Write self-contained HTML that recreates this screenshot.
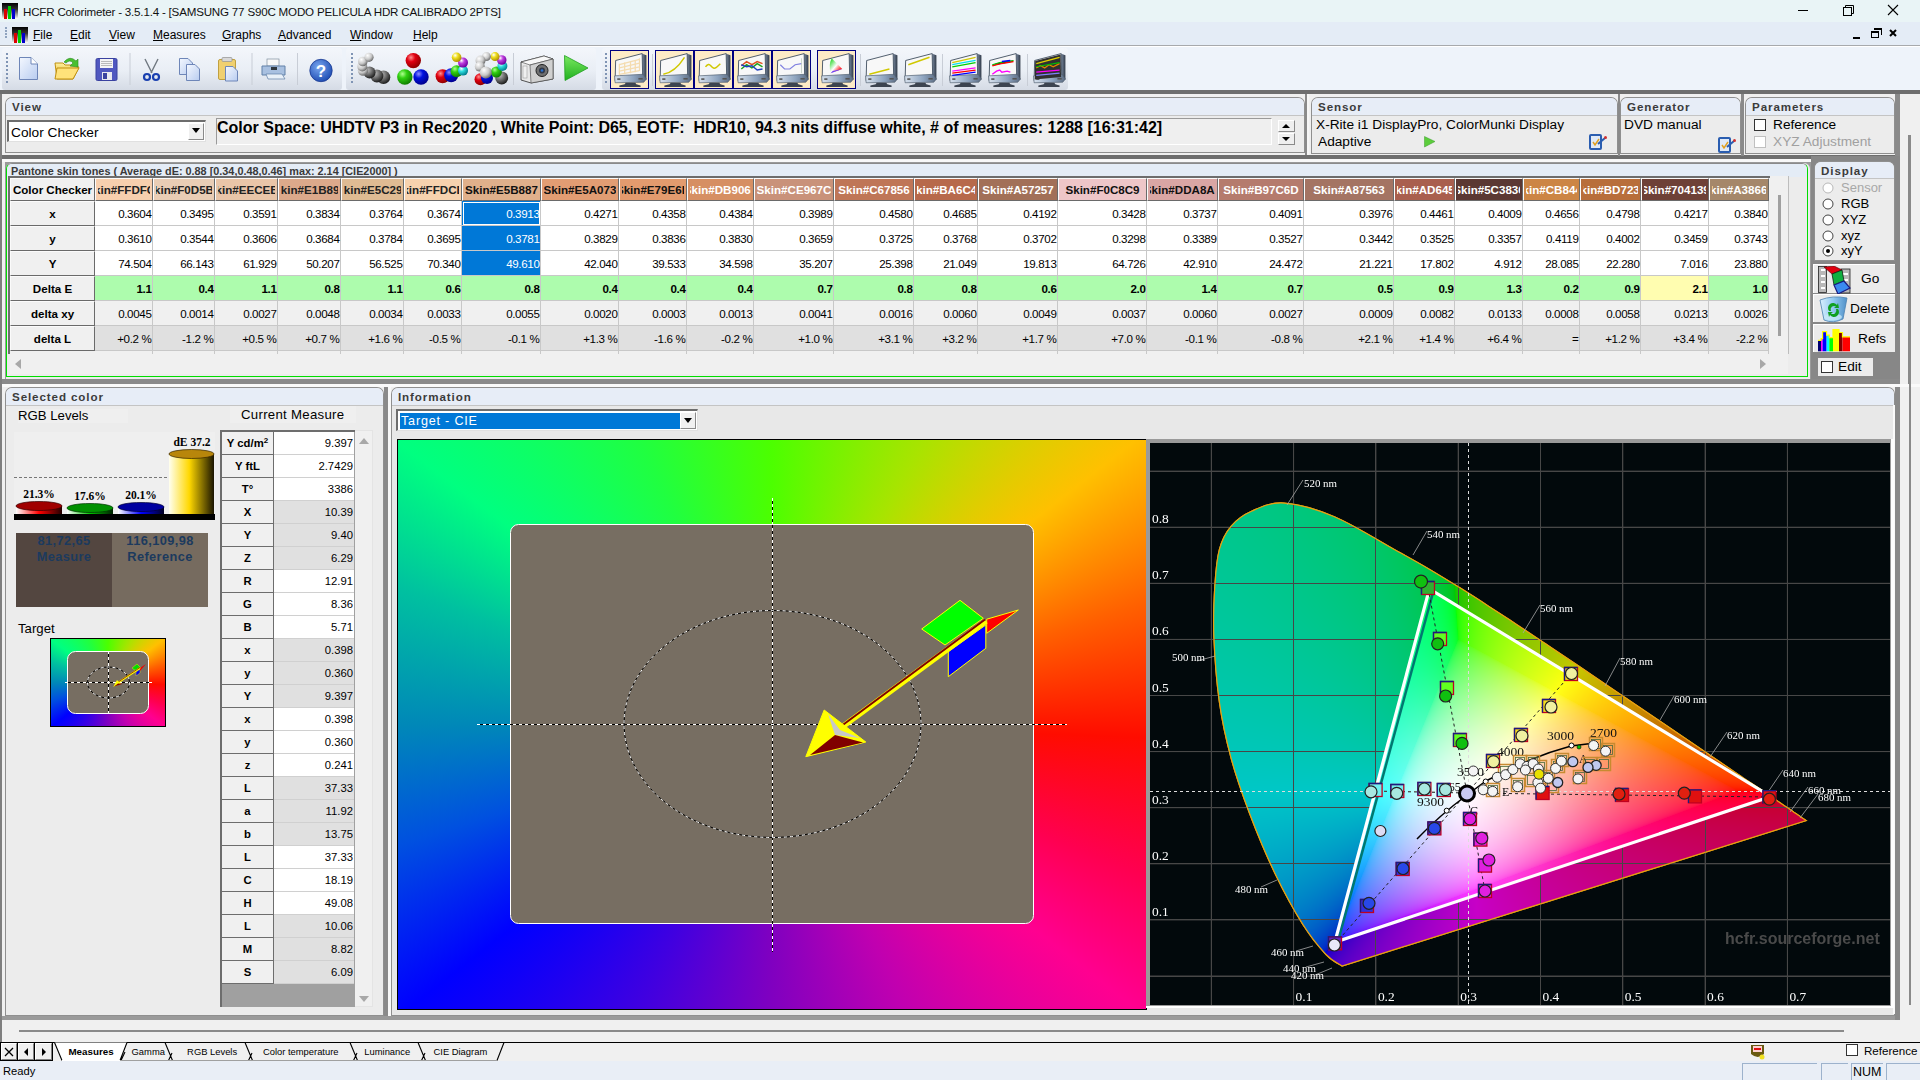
<!DOCTYPE html><html><head><meta charset="utf-8"><style>
html,body{margin:0;padding:0;width:1920px;height:1080px;overflow:hidden;background:#f0f0f0;font-family:"Liberation Sans", sans-serif}
</style></head><body><div style="position:absolute;left:0px;top:0px;width:1920px;height:22px;background:#e9f4f6"></div><svg style="position:absolute;left:2px;top:3px" width="16" height="16"><defs><linearGradient id="hg" x1="0" y1="0" x2="0" y2="1"><stop offset="0" stop-color="#000"/><stop offset="0.4" stop-color="#333"/><stop offset="1" stop-color="#fff"/></linearGradient></defs><rect width="16" height="16" fill="url(#hg)"/><rect x="2" y="6" width="3" height="10" fill="#d00"/><rect x="6" y="3" width="3" height="13" fill="#0c0"/><rect x="10" y="6" width="3" height="10" fill="#00c"/></svg><div style="position:absolute;left:23px;top:4px;white-space:pre;font-size:11.6px;letter-spacing:-0.2px;color:#111;line-height:16px">HCFR Colorimeter - 3.5.1.4 - [SAMSUNG 77 S90C MODO PELICULA HDR CALIBRADO 2PTS]</div><svg style="position:absolute;left:1790px;top:0" width="130" height="22"><line x1="8" y1="10.5" x2="18" y2="10.5" stroke="#000" stroke-width="1"/><rect x="53.5" y="7.5" width="8" height="8" fill="none" stroke="#000"/><path d="M55.5 7.5 V5.5 H63.5 V13.5 H61.5" fill="none" stroke="#000"/><path d="M98 5 L108 15 M108 5 L98 15" stroke="#000" stroke-width="1.1"/></svg><div style="position:absolute;left:0px;top:22px;width:1920px;height:23px;background:#e4ecf6"></div><div style="position:absolute;left:0px;top:45px;width:1920px;height:1px;background:#a7a9ac"></div><div style="position:absolute;left:5px;top:27px;width:2px;height:2px;background:#8fa3bf"></div><div style="position:absolute;left:5px;top:30px;width:2px;height:2px;background:#8fa3bf"></div><div style="position:absolute;left:5px;top:33px;width:2px;height:2px;background:#8fa3bf"></div><div style="position:absolute;left:5px;top:36px;width:2px;height:2px;background:#8fa3bf"></div><svg style="position:absolute;left:12px;top:27px" width="16" height="16"><defs><linearGradient id="hg" x1="0" y1="0" x2="0" y2="1"><stop offset="0" stop-color="#000"/><stop offset="0.4" stop-color="#333"/><stop offset="1" stop-color="#fff"/></linearGradient></defs><rect width="16" height="16" fill="url(#hg)"/><rect x="2" y="6" width="3" height="10" fill="#d00"/><rect x="6" y="3" width="3" height="13" fill="#0c0"/><rect x="10" y="6" width="3" height="10" fill="#00c"/></svg><div style="position:absolute;left:33px;top:27px;white-space:pre;font-size:12px;color:#000;line-height:16px"><u>F</u>ile</div><div style="position:absolute;left:70px;top:27px;white-space:pre;font-size:12px;color:#000;line-height:16px"><u>E</u>dit</div><div style="position:absolute;left:109px;top:27px;white-space:pre;font-size:12px;color:#000;line-height:16px"><u>V</u>iew</div><div style="position:absolute;left:153px;top:27px;white-space:pre;font-size:12px;color:#000;line-height:16px"><u>M</u>easures</div><div style="position:absolute;left:222px;top:27px;white-space:pre;font-size:12px;color:#000;line-height:16px"><u>G</u>raphs</div><div style="position:absolute;left:278px;top:27px;white-space:pre;font-size:12px;color:#000;line-height:16px"><u>A</u>dvanced</div><div style="position:absolute;left:350px;top:27px;white-space:pre;font-size:12px;color:#000;line-height:16px"><u>W</u>indow</div><div style="position:absolute;left:413px;top:27px;white-space:pre;font-size:12px;color:#000;line-height:16px"><u>H</u>elp</div><svg style="position:absolute;left:1840px;top:24" width="80" height="20"><rect x="13" y="13" width="7" height="2" fill="#000"/><rect x="31.5" y="7.5" width="7" height="6" fill="none" stroke="#000"/><rect x="31" y="7" width="8" height="2" fill="#000"/><path d="M34 5.5 H41.5 V11" fill="none" stroke="#000"/><rect x="34" y="4" width="8" height="2" fill="#000"/><path d="M50 6 L56 12 M56 6 L50 12" stroke="#000" stroke-width="2"/></svg><div style="position:absolute;left:0px;top:46px;width:1920px;height:44px;background:#eef3fa"></div><div style="position:absolute;left:0px;top:46px;width:1920px;height:1px;background:#fff"></div><div style="position:absolute;left:2px;top:48px;width:340px;height:42px;background:linear-gradient(#f3f6fb 0%,#e9eef5 55%,#d5dbe5 100%);border-radius:3px"></div><div style="position:absolute;left:6px;top:53px;width:2px;height:2px;background:#7f94b4"></div><div style="position:absolute;left:6px;top:57px;width:2px;height:2px;background:#7f94b4"></div><div style="position:absolute;left:6px;top:61px;width:2px;height:2px;background:#7f94b4"></div><div style="position:absolute;left:6px;top:65px;width:2px;height:2px;background:#7f94b4"></div><div style="position:absolute;left:6px;top:69px;width:2px;height:2px;background:#7f94b4"></div><div style="position:absolute;left:6px;top:73px;width:2px;height:2px;background:#7f94b4"></div><div style="position:absolute;left:6px;top:77px;width:2px;height:2px;background:#7f94b4"></div><div style="position:absolute;left:6px;top:81px;width:2px;height:2px;background:#7f94b4"></div><div style="position:absolute;left:346px;top:48px;width:250px;height:42px;background:linear-gradient(#f3f6fb 0%,#e9eef5 55%,#d5dbe5 100%);border-radius:3px"></div><div style="position:absolute;left:351px;top:53px;width:2px;height:2px;background:#7f94b4"></div><div style="position:absolute;left:351px;top:57px;width:2px;height:2px;background:#7f94b4"></div><div style="position:absolute;left:351px;top:61px;width:2px;height:2px;background:#7f94b4"></div><div style="position:absolute;left:351px;top:65px;width:2px;height:2px;background:#7f94b4"></div><div style="position:absolute;left:351px;top:69px;width:2px;height:2px;background:#7f94b4"></div><div style="position:absolute;left:351px;top:73px;width:2px;height:2px;background:#7f94b4"></div><div style="position:absolute;left:351px;top:77px;width:2px;height:2px;background:#7f94b4"></div><div style="position:absolute;left:351px;top:81px;width:2px;height:2px;background:#7f94b4"></div><div style="position:absolute;left:602px;top:48px;width:466px;height:42px;background:linear-gradient(#f3f6fb 0%,#e9eef5 55%,#d5dbe5 100%);border-radius:3px"></div><div style="position:absolute;left:605px;top:53px;width:2px;height:2px;background:#7f94b4"></div><div style="position:absolute;left:605px;top:57px;width:2px;height:2px;background:#7f94b4"></div><div style="position:absolute;left:605px;top:61px;width:2px;height:2px;background:#7f94b4"></div><div style="position:absolute;left:605px;top:65px;width:2px;height:2px;background:#7f94b4"></div><div style="position:absolute;left:605px;top:69px;width:2px;height:2px;background:#7f94b4"></div><div style="position:absolute;left:605px;top:73px;width:2px;height:2px;background:#7f94b4"></div><div style="position:absolute;left:605px;top:77px;width:2px;height:2px;background:#7f94b4"></div><div style="position:absolute;left:605px;top:81px;width:2px;height:2px;background:#7f94b4"></div><div style="position:absolute;left:0px;top:90px;width:1920px;height:4px;background:#6e6e6e"></div><div style="position:absolute;left:0px;top:94px;width:1920px;height:948px;background:#f0f0f0"></div><svg style="position:absolute;left:0;top:46px" width="345" height="44">
<defs>
<linearGradient id="tdoc" x1="0" y1="0" x2="1" y2="1"><stop offset="0" stop-color="#f4f8ff"/><stop offset="1" stop-color="#b8ccf0"/></linearGradient>
<linearGradient id="tfold" x1="0" y1="0" x2="0" y2="1"><stop offset="0" stop-color="#fff2a0"/><stop offset="1" stop-color="#e0a810"/></linearGradient>
<radialGradient id="thelp" cx="0.4" cy="0.35" r="0.7"><stop offset="0" stop-color="#7aa8f0"/><stop offset="1" stop-color="#1a48b0"/></radialGradient>
</defs>
<path d="M19.5 11.5 H31 L37.5 18 V33.5 H19.5 Z" fill="url(#tdoc)" stroke="#6e86b8"/><path d="M31 11.5 V18 H37.5" fill="#fff" stroke="#6e86b8"/>
<path d="M55 17 H63 L65 19 H77 V21 L79 21 L73 33 H57 Z" fill="url(#tfold)" stroke="#c09010"/><path d="M57 22 H79 L73 33 H55 Z" fill="#ffe27a" stroke="#c09010"/>
<path d="M64 16 Q70 9 76 15 L78 13 L78 21 L70 20 L73 17 Q70 13 66 17 Z" fill="#48c030" stroke="#2a8a20" stroke-width="0.6"/>
<rect x="96" y="12.5" width="21" height="22" rx="1.5" fill="#5058c0" stroke="#3a42a0"/><rect x="100" y="13" width="13" height="9" fill="#f4f4f4"/><path d="M101 15.5 H112 M101 17.5 H112 M101 19.5 H112" stroke="#a0a0a0" stroke-width="0.7"/><rect x="102" y="26" width="10" height="8" fill="#e8e8f0"/><rect x="103" y="27" width="4" height="6" fill="#3a42a0"/>
<line x1="130" y1="7" x2="130" y2="39" stroke="#c8cdd6"/>
<path d="M145 13 L152 27 M158 13 L151 27" stroke="#707880" stroke-width="1.4"/><circle cx="147" cy="31" r="3" fill="none" stroke="#1a40b0" stroke-width="2.2"/><circle cx="156" cy="31" r="3" fill="none" stroke="#1a40b0" stroke-width="2.2"/>
<path d="M179.5 12.5 H188 L192.5 17 V28.5 H179.5 Z" fill="url(#tdoc)" stroke="#6e86b8"/><path d="M186.5 18.5 H195 L199.5 23 V34.5 H186.5 Z" fill="url(#tdoc)" stroke="#6e86b8"/>
<rect x="218.5" y="13.5" width="17" height="20" rx="1.5" fill="#f0d070" stroke="#c0a040"/><rect x="222" y="11.5" width="10" height="4" rx="1" fill="#d8d8d8" stroke="#909090" stroke-width="0.7"/><path d="M225.5 20.5 H233 L237.5 25 V35 H225.5 Z" fill="url(#tdoc)" stroke="#6e86b8"/>
<line x1="252" y1="7" x2="252" y2="39" stroke="#c8cdd6"/>
<rect x="267" y="13" width="12" height="7" fill="#f8f8f8" stroke="#8090a0" stroke-width="0.7"/><path d="M262 20 H285 V29 H262 Z" fill="#a8c0e0" stroke="#6080a8"/><rect x="271" y="21" width="6" height="3" fill="#303840"/><path d="M266 28 H282 L285 33 H268 Z" fill="#e8f0f8" stroke="#6080a8" stroke-width="0.7"/>
<line x1="297.5" y1="7" x2="297.5" y2="39" stroke="#c8cdd6"/>
<circle cx="321" cy="24.5" r="11.2" fill="url(#thelp)" stroke="#1a3a90" stroke-width="0.8"/><text x="321" y="31" text-anchor="middle" font-family="Liberation Sans" font-weight="bold" font-size="17" fill="#fff">?</text>
</svg><svg style="position:absolute;left:346px;top:46px" width="252" height="44">
<defs>
<radialGradient id="bg1" cx="0.35" cy="0.3" r="0.7"><stop offset="0" stop-color="#c0c0c0"/><stop offset="0.5" stop-color="#707070"/><stop offset="1" stop-color="#202020"/></radialGradient><radialGradient id="bg2" cx="0.35" cy="0.3" r="0.7"><stop offset="0" stop-color="#fff"/><stop offset="0.6" stop-color="#c8c8c8"/><stop offset="1" stop-color="#707070"/></radialGradient>
<radialGradient id="br" cx="0.35" cy="0.3" r="0.7"><stop offset="0" stop-color="#ff9090"/><stop offset="0.4" stop-color="#e00010"/><stop offset="1" stop-color="#900000"/></radialGradient>
<radialGradient id="bgr" cx="0.35" cy="0.3" r="0.7"><stop offset="0" stop-color="#b0ff90"/><stop offset="0.4" stop-color="#30d010"/><stop offset="1" stop-color="#108000"/></radialGradient>
<radialGradient id="bb" cx="0.35" cy="0.3" r="0.7"><stop offset="0" stop-color="#9090ff"/><stop offset="0.4" stop-color="#0010e0"/><stop offset="1" stop-color="#000090"/></radialGradient>
<radialGradient id="by" cx="0.35" cy="0.3" r="0.7"><stop offset="0" stop-color="#fff"/><stop offset="0.4" stop-color="#f0e020"/><stop offset="1" stop-color="#b09000"/></radialGradient>
<radialGradient id="bm" cx="0.35" cy="0.3" r="0.7"><stop offset="0" stop-color="#fff"/><stop offset="0.4" stop-color="#c040e0"/><stop offset="1" stop-color="#7000a0"/></radialGradient>
<radialGradient id="bc" cx="0.35" cy="0.3" r="0.7"><stop offset="0" stop-color="#fff"/><stop offset="0.4" stop-color="#30e0e0"/><stop offset="1" stop-color="#008090"/></radialGradient>
<linearGradient id="play" x1="0" y1="0" x2="0" y2="1"><stop offset="0" stop-color="#7ae860"/><stop offset="1" stop-color="#20b020"/></linearGradient>
</defs>
<circle cx="37.5" cy="31.2" r="6.8" fill="url(#bg1)"/><circle cx="30.9" cy="30" r="6.5" fill="url(#bg1)"/><circle cx="23.6" cy="26.6" r="6" fill="url(#bg1)"/><circle cx="17" cy="24.5" r="5.2" fill="url(#bg2)"/><circle cx="16.3" cy="20.5" r="5" fill="url(#bg2)"/><circle cx="16.8" cy="15.5" r="4.8" fill="url(#bg2)"/><circle cx="23" cy="11.3" r="4.6" fill="url(#bg2)"/>
<circle cx="67.3" cy="14.6" r="7.7" fill="url(#br)"/><circle cx="58.8" cy="31" r="7.7" fill="url(#bgr)"/><circle cx="75" cy="31" r="7.7" fill="url(#bb)"/>
<circle cx="96.6" cy="30.3" r="7" fill="url(#br)"/><circle cx="105.2" cy="29.2" r="7" fill="url(#bb)"/><circle cx="110.6" cy="25.2" r="6" fill="url(#bgr)"/><circle cx="117" cy="24.6" r="5" fill="url(#bc)"/><circle cx="117" cy="16.6" r="5" fill="url(#bm)"/><circle cx="110.6" cy="11.3" r="4.8" fill="url(#by)"/>
<circle cx="134.5" cy="33.2" r="6" fill="url(#br)"/><circle cx="141" cy="32" r="6" fill="url(#bb)"/><circle cx="155.7" cy="31.9" r="6.5" fill="url(#bg1)"/><circle cx="150.4" cy="26" r="5.5" fill="url(#bgr)"/><circle cx="156.4" cy="20" r="5" fill="url(#bc)"/><circle cx="155.7" cy="14" r="4.8" fill="url(#bm)"/><circle cx="149" cy="10.6" r="4.5" fill="url(#by)"/><circle cx="140.4" cy="10.6" r="4.5" fill="url(#bg2)"/><circle cx="134.5" cy="14.6" r="5" fill="url(#bg2)"/><circle cx="133.8" cy="20.6" r="5" fill="url(#bg2)"/><circle cx="139.8" cy="26.6" r="6" fill="url(#bg2)"/>
<line x1="167.5" y1="7" x2="167.5" y2="39" stroke="#c8cdd6"/>
<path d="M175 16 L198 10 L207 13 L207 33 L185 37 L175 34 Z" fill="#e8e8e8" stroke="#404040" stroke-width="0.9"/><path d="M175 16 L198 10 L207 13 L184 19 Z" fill="#f8f8f8" stroke="#404040" stroke-width="0.6"/><path d="M184 19 L207 13 L207 33 L185 37 Z" fill="#d0d0d0" stroke="#404040" stroke-width="0.6"/><circle cx="196" cy="24.5" r="6" fill="#707070" stroke="#202020"/><circle cx="196" cy="24.5" r="3" fill="#303848"/><circle cx="196" cy="24.5" r="1.3" fill="#2a70d0"/><rect x="177" y="20" width="4" height="12" fill="#f0f0f0" stroke="#909090" stroke-width="0.5"/>
<path d="M218.5 9.5 L242 22 L219 34.5 Z" fill="url(#play)" stroke="#20a020" stroke-width="0.8"/>
</svg><div style="position:absolute;left:610px;top:50px;width:39px;height:39px;background:#fdebc6;border:1.3px solid #000080;box-sizing:border-box"></div><svg style="position:absolute;left:613px;top:52px" width="35" height="35" viewBox="0 0 33 33"><defs><linearGradient id="mbz" x1="0" y1="0" x2="1" y2="0"><stop offset="0" stop-color="#d8e2ee"/><stop offset="0.6" stop-color="#8ea4bf"/><stop offset="1" stop-color="#5a6a80"/></linearGradient><linearGradient id="mrt" x1="0" y1="0" x2="1" y2="0"><stop offset="0" stop-color="#8090a8"/><stop offset="1" stop-color="#303a48"/></linearGradient></defs><path d="M27 1.5 L31.5 3 L31.5 26 L27 28 Z" fill="url(#mrt)"/><path d="M2.5 8 L27.5 1.5 L28 24 L2 27 Z" fill="#f8f8f8" stroke="#4a5868" stroke-width="0.9"/><path d="M1.5 22.5 L28.5 21 L31.5 25.5 L29 28.5 L2 29 Z" fill="url(#mbz)" stroke="#4a5868" stroke-width="0.6"/><rect x="4" y="24.8" width="3" height="1.5" fill="#555"/><rect x="24" y="24.5" width="4" height="1.5" fill="#555"/><path d="M12 29 L21 29 L22 30.5 L26 31.5 L26 33 L6 33 L6 31.5 L11 30.5 Z" fill="#3c4450"/><g stroke="#f4dcb0" stroke-width="1.2" fill="none"><path d="M6 12 L25 7 M6 15 L25 10.5 M6 18 L25 14 M6 21 L25 17.5"/><path d="M6 11 V22 M11 10 V21 M16.5 8.5 V20 M21 7.5 V19 M25 6 V18"/></g></svg><div style="position:absolute;left:655px;top:50px;width:39px;height:39px;background:#fdebc6;border:1.3px solid #000080;box-sizing:border-box"></div><svg style="position:absolute;left:658px;top:52px" width="35" height="35" viewBox="0 0 33 33"><defs><linearGradient id="mbz" x1="0" y1="0" x2="1" y2="0"><stop offset="0" stop-color="#d8e2ee"/><stop offset="0.6" stop-color="#8ea4bf"/><stop offset="1" stop-color="#5a6a80"/></linearGradient><linearGradient id="mrt" x1="0" y1="0" x2="1" y2="0"><stop offset="0" stop-color="#8090a8"/><stop offset="1" stop-color="#303a48"/></linearGradient></defs><path d="M27 1.5 L31.5 3 L31.5 26 L27 28 Z" fill="url(#mrt)"/><path d="M2.5 8 L27.5 1.5 L28 24 L2 27 Z" fill="#f8f8f8" stroke="#4a5868" stroke-width="0.9"/><path d="M1.5 22.5 L28.5 21 L31.5 25.5 L29 28.5 L2 29 Z" fill="url(#mbz)" stroke="#4a5868" stroke-width="0.6"/><rect x="4" y="24.8" width="3" height="1.5" fill="#555"/><rect x="24" y="24.5" width="4" height="1.5" fill="#555"/><path d="M12 29 L21 29 L22 30.5 L26 31.5 L26 33 L6 33 L6 31.5 L11 30.5 Z" fill="#3c4450"/><path d="M5 21 Q16 19 25 5" stroke="#d0c800" stroke-width="1.4" fill="none"/></svg><div style="position:absolute;left:694px;top:50px;width:39px;height:39px;background:#fdebc6;border:1.3px solid #000080;box-sizing:border-box"></div><svg style="position:absolute;left:697px;top:52px" width="35" height="35" viewBox="0 0 33 33"><defs><linearGradient id="mbz" x1="0" y1="0" x2="1" y2="0"><stop offset="0" stop-color="#d8e2ee"/><stop offset="0.6" stop-color="#8ea4bf"/><stop offset="1" stop-color="#5a6a80"/></linearGradient><linearGradient id="mrt" x1="0" y1="0" x2="1" y2="0"><stop offset="0" stop-color="#8090a8"/><stop offset="1" stop-color="#303a48"/></linearGradient></defs><path d="M27 1.5 L31.5 3 L31.5 26 L27 28 Z" fill="url(#mrt)"/><path d="M2.5 8 L27.5 1.5 L28 24 L2 27 Z" fill="#f8f8f8" stroke="#4a5868" stroke-width="0.9"/><path d="M1.5 22.5 L28.5 21 L31.5 25.5 L29 28.5 L2 29 Z" fill="url(#mbz)" stroke="#4a5868" stroke-width="0.6"/><rect x="4" y="24.8" width="3" height="1.5" fill="#555"/><rect x="24" y="24.5" width="4" height="1.5" fill="#555"/><path d="M12 29 L21 29 L22 30.5 L26 31.5 L26 33 L6 33 L6 31.5 L11 30.5 Z" fill="#3c4450"/><path d="M8 14 Q11 10 13 13 Q16 17 19 14 L22 11" stroke="#d0c800" stroke-width="1.4" fill="none"/></svg><div style="position:absolute;left:733px;top:50px;width:39px;height:39px;background:#fdebc6;border:1.3px solid #000080;box-sizing:border-box"></div><svg style="position:absolute;left:736px;top:52px" width="35" height="35" viewBox="0 0 33 33"><defs><linearGradient id="mbz" x1="0" y1="0" x2="1" y2="0"><stop offset="0" stop-color="#d8e2ee"/><stop offset="0.6" stop-color="#8ea4bf"/><stop offset="1" stop-color="#5a6a80"/></linearGradient><linearGradient id="mrt" x1="0" y1="0" x2="1" y2="0"><stop offset="0" stop-color="#8090a8"/><stop offset="1" stop-color="#303a48"/></linearGradient></defs><path d="M27 1.5 L31.5 3 L31.5 26 L27 28 Z" fill="url(#mrt)"/><path d="M2.5 8 L27.5 1.5 L28 24 L2 27 Z" fill="#f8f8f8" stroke="#4a5868" stroke-width="0.9"/><path d="M1.5 22.5 L28.5 21 L31.5 25.5 L29 28.5 L2 29 Z" fill="url(#mbz)" stroke="#4a5868" stroke-width="0.6"/><rect x="4" y="24.8" width="3" height="1.5" fill="#555"/><rect x="24" y="24.5" width="4" height="1.5" fill="#555"/><path d="M12 29 L21 29 L22 30.5 L26 31.5 L26 33 L6 33 L6 31.5 L11 30.5 Z" fill="#3c4450"/><path d="M5 13 L10 9 L15 12 L20 9 L25 11" stroke="#e05020" stroke-width="1.4" fill="none"/><path d="M5 16 L10 12 L15 15 L20 11 L25 14" stroke="#20a020" stroke-width="1.4" fill="none"/><path d="M5 12 L10 14 L15 13 L20 17 L25 16" stroke="#2040c0" stroke-width="1.4" fill="none"/></svg><div style="position:absolute;left:772px;top:50px;width:39px;height:39px;background:#fdebc6;border:1.3px solid #000080;box-sizing:border-box"></div><svg style="position:absolute;left:775px;top:52px" width="35" height="35" viewBox="0 0 33 33"><defs><linearGradient id="mbz" x1="0" y1="0" x2="1" y2="0"><stop offset="0" stop-color="#d8e2ee"/><stop offset="0.6" stop-color="#8ea4bf"/><stop offset="1" stop-color="#5a6a80"/></linearGradient><linearGradient id="mrt" x1="0" y1="0" x2="1" y2="0"><stop offset="0" stop-color="#8090a8"/><stop offset="1" stop-color="#303a48"/></linearGradient></defs><path d="M27 1.5 L31.5 3 L31.5 26 L27 28 Z" fill="url(#mrt)"/><path d="M2.5 8 L27.5 1.5 L28 24 L2 27 Z" fill="#f8f8f8" stroke="#4a5868" stroke-width="0.9"/><path d="M1.5 22.5 L28.5 21 L31.5 25.5 L29 28.5 L2 29 Z" fill="url(#mbz)" stroke="#4a5868" stroke-width="0.6"/><rect x="4" y="24.8" width="3" height="1.5" fill="#555"/><rect x="24" y="24.5" width="4" height="1.5" fill="#555"/><path d="M12 29 L21 29 L22 30.5 L26 31.5 L26 33 L6 33 L6 31.5 L11 30.5 Z" fill="#3c4450"/><path d="M5 12 L9 16 L14 16 L19 12 L25 11" stroke="#8080e0" stroke-width="1.1" fill="none"/><path d="M25 6 V20" stroke="#b0c0b0" stroke-width="0.6"/></svg><div style="position:absolute;left:817px;top:50px;width:39px;height:39px;background:#fdebc6;border:1.3px solid #000080;box-sizing:border-box"></div><svg style="position:absolute;left:820px;top:52px" width="35" height="35" viewBox="0 0 33 33"><defs><linearGradient id="mbz" x1="0" y1="0" x2="1" y2="0"><stop offset="0" stop-color="#d8e2ee"/><stop offset="0.6" stop-color="#8ea4bf"/><stop offset="1" stop-color="#5a6a80"/></linearGradient><linearGradient id="mrt" x1="0" y1="0" x2="1" y2="0"><stop offset="0" stop-color="#8090a8"/><stop offset="1" stop-color="#303a48"/></linearGradient></defs><path d="M27 1.5 L31.5 3 L31.5 26 L27 28 Z" fill="url(#mrt)"/><path d="M2.5 8 L27.5 1.5 L28 24 L2 27 Z" fill="#f8f8f8" stroke="#4a5868" stroke-width="0.9"/><path d="M1.5 22.5 L28.5 21 L31.5 25.5 L29 28.5 L2 29 Z" fill="url(#mbz)" stroke="#4a5868" stroke-width="0.6"/><rect x="4" y="24.8" width="3" height="1.5" fill="#555"/><rect x="24" y="24.5" width="4" height="1.5" fill="#555"/><path d="M12 29 L21 29 L22 30.5 L26 31.5 L26 33 L6 33 L6 31.5 L11 30.5 Z" fill="#3c4450"/><defs><linearGradient id="mcie" x1="0" y1="0" x2="1" y2="1"><stop offset="0" stop-color="#00d000"/><stop offset="0.5" stop-color="#ffffff"/><stop offset="0.8" stop-color="#ff2020"/><stop offset="1" stop-color="#4020ff"/></linearGradient></defs><path d="M10 20 Q8 12 11 6 L21 16 Z" fill="url(#mcie)"/><path d="M10 20 L21 16 L12 18 Z" fill="#6040ff"/></svg><svg style="position:absolute;left:864px;top:52px" width="35" height="35" viewBox="0 0 33 33"><defs><linearGradient id="mbz" x1="0" y1="0" x2="1" y2="0"><stop offset="0" stop-color="#d8e2ee"/><stop offset="0.6" stop-color="#8ea4bf"/><stop offset="1" stop-color="#5a6a80"/></linearGradient><linearGradient id="mrt" x1="0" y1="0" x2="1" y2="0"><stop offset="0" stop-color="#8090a8"/><stop offset="1" stop-color="#303a48"/></linearGradient></defs><path d="M27 1.5 L31.5 3 L31.5 26 L27 28 Z" fill="url(#mrt)"/><path d="M2.5 8 L27.5 1.5 L28 24 L2 27 Z" fill="#f8f8f8" stroke="#4a5868" stroke-width="0.9"/><path d="M1.5 22.5 L28.5 21 L31.5 25.5 L29 28.5 L2 29 Z" fill="url(#mbz)" stroke="#4a5868" stroke-width="0.6"/><rect x="4" y="24.8" width="3" height="1.5" fill="#555"/><rect x="24" y="24.5" width="4" height="1.5" fill="#555"/><path d="M12 29 L21 29 L22 30.5 L26 31.5 L26 33 L6 33 L6 31.5 L11 30.5 Z" fill="#3c4450"/><path d="M5 21 L24 16" stroke="#d0c800" stroke-width="1.4" fill="none"/></svg><svg style="position:absolute;left:903px;top:52px" width="35" height="35" viewBox="0 0 33 33"><defs><linearGradient id="mbz" x1="0" y1="0" x2="1" y2="0"><stop offset="0" stop-color="#d8e2ee"/><stop offset="0.6" stop-color="#8ea4bf"/><stop offset="1" stop-color="#5a6a80"/></linearGradient><linearGradient id="mrt" x1="0" y1="0" x2="1" y2="0"><stop offset="0" stop-color="#8090a8"/><stop offset="1" stop-color="#303a48"/></linearGradient></defs><path d="M27 1.5 L31.5 3 L31.5 26 L27 28 Z" fill="url(#mrt)"/><path d="M2.5 8 L27.5 1.5 L28 24 L2 27 Z" fill="#f8f8f8" stroke="#4a5868" stroke-width="0.9"/><path d="M1.5 22.5 L28.5 21 L31.5 25.5 L29 28.5 L2 29 Z" fill="url(#mbz)" stroke="#4a5868" stroke-width="0.6"/><rect x="4" y="24.8" width="3" height="1.5" fill="#555"/><rect x="24" y="24.5" width="4" height="1.5" fill="#555"/><path d="M12 29 L21 29 L22 30.5 L26 31.5 L26 33 L6 33 L6 31.5 L11 30.5 Z" fill="#3c4450"/><path d="M5 12 L25 5" stroke="#d0c800" stroke-width="1.4" fill="none"/></svg><svg style="position:absolute;left:948px;top:52px" width="35" height="35" viewBox="0 0 33 33"><defs><linearGradient id="mbz" x1="0" y1="0" x2="1" y2="0"><stop offset="0" stop-color="#d8e2ee"/><stop offset="0.6" stop-color="#8ea4bf"/><stop offset="1" stop-color="#5a6a80"/></linearGradient><linearGradient id="mrt" x1="0" y1="0" x2="1" y2="0"><stop offset="0" stop-color="#8090a8"/><stop offset="1" stop-color="#303a48"/></linearGradient></defs><path d="M27 1.5 L31.5 3 L31.5 26 L27 28 Z" fill="url(#mrt)"/><path d="M2.5 8 L27.5 1.5 L28 24 L2 27 Z" fill="#f8f8f8" stroke="#4a5868" stroke-width="0.9"/><path d="M1.5 22.5 L28.5 21 L31.5 25.5 L29 28.5 L2 29 Z" fill="url(#mbz)" stroke="#4a5868" stroke-width="0.6"/><rect x="4" y="24.8" width="3" height="1.5" fill="#555"/><rect x="24" y="24.5" width="4" height="1.5" fill="#555"/><path d="M12 29 L21 29 L22 30.5 L26 31.5 L26 33 L6 33 L6 31.5 L11 30.5 Z" fill="#3c4450"/><path d="M4 10 L26 5" stroke="#d0c800" stroke-width="1.2"/><path d="M4 12 L26 8" stroke="#00e0f0" stroke-width="1.2"/><path d="M4 14 L26 10" stroke="#00d000" stroke-width="1.2"/><path d="M4 18 L26 15" stroke="#ff00ff" stroke-width="1.2"/><path d="M4 20 L26 17" stroke="#ff0000" stroke-width="1.2"/><path d="M4 22 L26 19" stroke="#0000ff" stroke-width="1.2"/></svg><svg style="position:absolute;left:987px;top:52px" width="35" height="35" viewBox="0 0 33 33"><defs><linearGradient id="mbz" x1="0" y1="0" x2="1" y2="0"><stop offset="0" stop-color="#d8e2ee"/><stop offset="0.6" stop-color="#8ea4bf"/><stop offset="1" stop-color="#5a6a80"/></linearGradient><linearGradient id="mrt" x1="0" y1="0" x2="1" y2="0"><stop offset="0" stop-color="#8090a8"/><stop offset="1" stop-color="#303a48"/></linearGradient></defs><path d="M27 1.5 L31.5 3 L31.5 26 L27 28 Z" fill="url(#mrt)"/><path d="M2.5 8 L27.5 1.5 L28 24 L2 27 Z" fill="#f8f8f8" stroke="#4a5868" stroke-width="0.9"/><path d="M1.5 22.5 L28.5 21 L31.5 25.5 L29 28.5 L2 29 Z" fill="url(#mbz)" stroke="#4a5868" stroke-width="0.6"/><rect x="4" y="24.8" width="3" height="1.5" fill="#555"/><rect x="24" y="24.5" width="4" height="1.5" fill="#555"/><path d="M12 29 L21 29 L22 30.5 L26 31.5 L26 33 L6 33 L6 31.5 L11 30.5 Z" fill="#3c4450"/><path d="M5 13 L12 11 L18 10 L25 9" stroke="#ff0000" stroke-width="1.5"/><path d="M5 12 L12 10 L18 9 L25 8" stroke="#00c000" stroke-width="1"/><path d="M14 9 L22 8" stroke="#0000ff" stroke-width="1.3"/><path d="M5 21 L9 18 L12 17 L14 19 L19 18 L22 19" stroke="#ff00ff" stroke-width="1.3" fill="none"/></svg><svg style="position:absolute;left:1032px;top:52px" width="35" height="35" viewBox="0 0 33 33"><defs><linearGradient id="mbz" x1="0" y1="0" x2="1" y2="0"><stop offset="0" stop-color="#d8e2ee"/><stop offset="0.6" stop-color="#8ea4bf"/><stop offset="1" stop-color="#5a6a80"/></linearGradient><linearGradient id="mrt" x1="0" y1="0" x2="1" y2="0"><stop offset="0" stop-color="#8090a8"/><stop offset="1" stop-color="#303a48"/></linearGradient></defs><path d="M27 1.5 L31.5 3 L31.5 26 L27 28 Z" fill="url(#mrt)"/><path d="M2.5 8 L27.5 1.5 L28 24 L2 27 Z" fill="#f8f8f8" stroke="#4a5868" stroke-width="0.9"/><path d="M1.5 22.5 L28.5 21 L31.5 25.5 L29 28.5 L2 29 Z" fill="url(#mbz)" stroke="#4a5868" stroke-width="0.6"/><rect x="4" y="24.8" width="3" height="1.5" fill="#555"/><rect x="24" y="24.5" width="4" height="1.5" fill="#555"/><path d="M12 29 L21 29 L22 30.5 L26 31.5 L26 33 L6 33 L6 31.5 L11 30.5 Z" fill="#3c4450"/><path d="M3 8.5 L27 2.3 L27.4 23.5 L2.6 26 Z" fill="#303030"/><path d="M4 11 L26 5" stroke="#e0d000" stroke-width="1.3"/><path d="M4 15 L8 13 L12 15 L16 12 L20 14 L26 11" stroke="#e08000" stroke-width="1.2" fill="none"/><path d="M4 14 L26 10" stroke="#00c000" stroke-width="1" /><path d="M4 19 L26 17" stroke="#ff00ff" stroke-width="1.2"/><path d="M4 22 L26 20" stroke="#8080ff" stroke-width="1.2"/></svg><div style="position:absolute;left:652px;top:54px;width:1px;height:32px;background:#c8cdd6"></div><div style="position:absolute;left:860px;top:54px;width:1px;height:32px;background:#c8cdd6"></div><div style="position:absolute;left:942px;top:54px;width:1px;height:32px;background:#c8cdd6"></div><div style="position:absolute;left:1027px;top:54px;width:1px;height:32px;background:#c8cdd6"></div><div style="position:absolute;left:5px;top:97px;width:1300px;height:56px;background:#8f8f8f;border-top-left-radius:7px;border-top-right-radius:7px"></div><div style="position:absolute;left:6px;top:98px;width:1298px;height:54px;background:#ececec;border-top-left-radius:6px;border-top-right-radius:6px"></div><div style="position:absolute;left:6px;top:98px;width:1298px;height:17px;background:#e7edf7;border-top-left-radius:6px;border-top-right-radius:6px"></div><div style="position:absolute;left:6px;top:115px;width:1298px;height:1px;background:#c4c4c4"></div><div style="position:absolute;left:12px;top:99px;white-space:pre;font-size:11.6px;font-weight:bold;color:#3b3b3b;line-height:16px;letter-spacing:0.9px">View</div><div style="position:absolute;left:7px;top:120px;width:199px;height:22px;background:#fff;border-top:2px solid #6d6d6d;border-left:2px solid #6d6d6d;border-bottom:1px solid #e0e0e0;border-right:1px solid #e0e0e0;box-sizing:border-box"></div><div style="position:absolute;left:11px;top:124px;white-space:pre;font-size:13.7px;color:#000;line-height:17px">Color Checker</div><div style="position:absolute;left:188px;top:123px;width:16px;height:17px;background:#f0f0f0;border-right:1px solid #8a8a8a;border-bottom:1px solid #8a8a8a;border-left:1px solid #fff;border-top:1px solid #fff;box-sizing:border-box"></div><svg style="position:absolute;left:192px;top:128px" width="9" height="6"><path d="M0 0 H8 L4 5 Z" fill="#000"/></svg><div style="position:absolute;left:216px;top:118px;width:1056px;height:27px;background:#efefef;border-top:1px solid #9a9a9a;border-left:1px solid #9a9a9a;border-bottom:1px solid #fff;border-right:1px solid #fff;box-sizing:border-box"></div><div style="position:absolute;left:217px;top:119px;white-space:pre;font-size:16px;font-weight:bold;color:#000;line-height:18px">Color Space: UHDTV P3 in Rec2020 , White Point: D65, EOTF:  HDR10, 94.3 nits diffuse white, # of measures: 1288 [16:31:42]</div><div style="position:absolute;left:1278px;top:120px;width:17px;height:12px;background:#efefef;border-right:1px solid #8a8a8a;border-bottom:1px solid #8a8a8a;border-left:1px solid #fff;border-top:1px solid #fff;box-sizing:border-box"></div><svg style="position:absolute;left:1281px;top:123px" width="10" height="6"><path d="M1 5 L5 1 L9 5 Z" fill="#000"/></svg><div style="position:absolute;left:1278px;top:133px;width:17px;height:12px;background:#efefef;border-right:1px solid #8a8a8a;border-bottom:1px solid #8a8a8a;border-left:1px solid #fff;border-top:1px solid #fff;box-sizing:border-box"></div><svg style="position:absolute;left:1281px;top:136px" width="10" height="6"><path d="M1 1 L5 5 L9 1 Z" fill="#000"/></svg><div style="position:absolute;left:1305px;top:94px;width:2px;height:62px;background:#8a8a8a"></div><div style="position:absolute;left:1307px;top:94px;width:2px;height:62px;background:#f6f6f6"></div><div style="position:absolute;left:0px;top:155px;width:1900px;height:4px;background:#6e6e6e"></div><div style="position:absolute;left:0px;top:159px;width:1900px;height:3px;background:#f8f8f8"></div><div style="position:absolute;left:1311px;top:97px;width:307px;height:57px;background:#8f8f8f;border-top-left-radius:7px;border-top-right-radius:7px"></div><div style="position:absolute;left:1312px;top:98px;width:305px;height:55px;background:#ececec;border-top-left-radius:6px;border-top-right-radius:6px"></div><div style="position:absolute;left:1312px;top:98px;width:305px;height:17px;background:#e7edf7;border-top-left-radius:6px;border-top-right-radius:6px"></div><div style="position:absolute;left:1312px;top:115px;width:305px;height:1px;background:#c4c4c4"></div><div style="position:absolute;left:1318px;top:99px;white-space:pre;font-size:11.6px;font-weight:bold;color:#3b3b3b;line-height:16px;letter-spacing:0.9px">Sensor</div><div style="position:absolute;left:1316px;top:117px;white-space:pre;font-size:13.7px;color:#000;line-height:16px">X-Rite i1 DisplayPro, ColorMunki Display</div><div style="position:absolute;left:1318px;top:134px;white-space:pre;font-size:13.7px;color:#000;line-height:16px">Adaptive</div><svg style="position:absolute;left:1424px;top:136px" width="12" height="12"><path d="M0.5 0.5 L11 5.5 L0.5 11 Z" fill="#5ccd3c" stroke="#3a9a2a" stroke-width="0.5"/></svg><svg style="position:absolute;left:1588px;top:132px" width="20" height="20"><rect x="1" y="2" width="13" height="16" rx="2" fill="#2a5db0"/><rect x="3" y="4" width="9" height="12" fill="#dfe9f7"/><path d="M5 10 L7 13 L11 7" stroke="#e0a020" stroke-width="1.5" fill="none"/><path d="M10 12 L17 6" stroke="#2a5db0" stroke-width="2"/><circle cx="17.5" cy="5.5" r="1.5" fill="#d03030"/></svg><div style="position:absolute;left:1618px;top:94px;width:2px;height:62px;background:#8a8a8a"></div><div style="position:absolute;left:1620px;top:97px;width:121px;height:57px;background:#8f8f8f;border-top-left-radius:7px;border-top-right-radius:7px"></div><div style="position:absolute;left:1621px;top:98px;width:119px;height:55px;background:#ececec;border-top-left-radius:6px;border-top-right-radius:6px"></div><div style="position:absolute;left:1621px;top:98px;width:119px;height:17px;background:#e7edf7;border-top-left-radius:6px;border-top-right-radius:6px"></div><div style="position:absolute;left:1621px;top:115px;width:119px;height:1px;background:#c4c4c4"></div><div style="position:absolute;left:1627px;top:99px;white-space:pre;font-size:11.6px;font-weight:bold;color:#3b3b3b;line-height:16px;letter-spacing:0.9px">Generator</div><div style="position:absolute;left:1624px;top:117px;white-space:pre;font-size:13.7px;color:#000;line-height:16px">DVD manual</div><svg style="position:absolute;left:1717px;top:135px" width="20" height="20"><rect x="1" y="2" width="13" height="16" rx="2" fill="#2a5db0"/><rect x="3" y="4" width="9" height="12" fill="#dfe9f7"/><path d="M5 10 L7 13 L11 7" stroke="#e0a020" stroke-width="1.5" fill="none"/><path d="M10 12 L17 6" stroke="#2a5db0" stroke-width="2"/><circle cx="17.5" cy="5.5" r="1.5" fill="#d03030"/></svg><div style="position:absolute;left:1741px;top:94px;width:3px;height:62px;background:#8a8a8a"></div><div style="position:absolute;left:1745px;top:97px;width:150px;height:57px;background:#8f8f8f;border-top-left-radius:7px;border-top-right-radius:7px"></div><div style="position:absolute;left:1746px;top:98px;width:148px;height:55px;background:#ececec;border-top-left-radius:6px;border-top-right-radius:6px"></div><div style="position:absolute;left:1746px;top:98px;width:148px;height:17px;background:#e7edf7;border-top-left-radius:6px;border-top-right-radius:6px"></div><div style="position:absolute;left:1746px;top:115px;width:148px;height:1px;background:#c4c4c4"></div><div style="position:absolute;left:1752px;top:99px;white-space:pre;font-size:11.6px;font-weight:bold;color:#3b3b3b;line-height:16px;letter-spacing:0.9px">Parameters</div><div style="position:absolute;left:1754px;top:119px;width:12px;height:12px;background:#fff;border:1px solid #333;box-sizing:border-box"></div><div style="position:absolute;left:1773px;top:117px;white-space:pre;font-size:13.7px;color:#000;line-height:16px">Reference</div><div style="position:absolute;left:1754px;top:136px;width:12px;height:12px;background:#fff;border:1px solid #c0c0c0;box-sizing:border-box"></div><div style="position:absolute;left:1773px;top:134px;white-space:pre;font-size:13.7px;color:#a0a0a0;line-height:16px">XYZ Adjustment</div><div style="position:absolute;left:1895px;top:94px;width:5px;height:290px;background:#8a8a8a"></div><div style="position:absolute;left:5px;top:162px;width:1806px;height:218px;background:#9a9a9a"></div><div style="position:absolute;left:6px;top:163px;width:1804px;height:216px;background:#ececec;border-top-left-radius:6px;border-top-right-radius:6px"></div><div style="position:absolute;left:6px;top:163px;width:1802px;height:214px;border:1px solid #00dd00;border-top-color:#8a8a8a;border-top-left-radius:6px;border-top-right-radius:6px;box-sizing:border-box"></div><div style="position:absolute;left:7px;top:164px;width:1800px;height:13px;background:#e4ecf6;border-top-left-radius:5px;border-top-right-radius:5px"></div><div style="position:absolute;left:11px;top:164px;white-space:pre;font-size:10.85px;font-weight:bold;color:#3a3a3a;line-height:14px">Pantone skin tones ( Average dE: 0.88 [0.34,0.48,0.46] max: 2.14 [CIE2000] )</div><div style="position:absolute;left:8px;top:176px;width:1781px;height:178px;background:#f0f0f0"></div><div style="position:absolute;left:8px;top:176px;width:1781px;height:2px;background:#6d6d6d"></div><div style="position:absolute;left:8px;top:176px;width:2px;height:178px;background:#6d6d6d"></div><div style="position:absolute;left:10px;top:178px;width:85px;height:23px;background:#f0f0f0;border-left:1px solid #fbfbfb;border-top:1px solid #fbfbfb;border-right:1px solid #6a6a6a;border-bottom:1px solid #6a6a6a;box-sizing:border-box"></div><div style="position:absolute;left:10px;top:178px;width:85px;height:23px;line-height:23px;text-align:center;font-size:11.6px;font-weight:bold;color:#000">Color Checker</div><div style="position:absolute;left:10px;top:201px;width:85px;height:25px;background:#f0f0f0;border-left:1px solid #fbfbfb;border-top:1px solid #fbfbfb;border-right:1px solid #6a6a6a;border-bottom:1px solid #6a6a6a;box-sizing:border-box"></div><div style="position:absolute;left:10px;top:201px;width:85px;height:25px;line-height:25px;text-align:center;font-size:11.6px;font-weight:bold;color:#000">x</div><div style="position:absolute;left:10px;top:226px;width:85px;height:25px;background:#f0f0f0;border-left:1px solid #fbfbfb;border-top:1px solid #fbfbfb;border-right:1px solid #6a6a6a;border-bottom:1px solid #6a6a6a;box-sizing:border-box"></div><div style="position:absolute;left:10px;top:226px;width:85px;height:25px;line-height:25px;text-align:center;font-size:11.6px;font-weight:bold;color:#000">y</div><div style="position:absolute;left:10px;top:251px;width:85px;height:25px;background:#f0f0f0;border-left:1px solid #fbfbfb;border-top:1px solid #fbfbfb;border-right:1px solid #6a6a6a;border-bottom:1px solid #6a6a6a;box-sizing:border-box"></div><div style="position:absolute;left:10px;top:251px;width:85px;height:25px;line-height:25px;text-align:center;font-size:11.6px;font-weight:bold;color:#000">Y</div><div style="position:absolute;left:10px;top:276px;width:85px;height:25px;background:#f0f0f0;border-left:1px solid #fbfbfb;border-top:1px solid #fbfbfb;border-right:1px solid #6a6a6a;border-bottom:1px solid #6a6a6a;box-sizing:border-box"></div><div style="position:absolute;left:10px;top:276px;width:85px;height:25px;line-height:25px;text-align:center;font-size:11.6px;font-weight:bold;color:#000">Delta E</div><div style="position:absolute;left:10px;top:301px;width:85px;height:25px;background:#f0f0f0;border-left:1px solid #fbfbfb;border-top:1px solid #fbfbfb;border-right:1px solid #6a6a6a;border-bottom:1px solid #6a6a6a;box-sizing:border-box"></div><div style="position:absolute;left:10px;top:301px;width:85px;height:25px;line-height:25px;text-align:center;font-size:11.6px;font-weight:bold;color:#000">delta xy</div><div style="position:absolute;left:10px;top:326px;width:85px;height:25px;background:#f0f0f0;border-left:1px solid #fbfbfb;border-top:1px solid #fbfbfb;border-right:1px solid #6a6a6a;border-bottom:1px solid #6a6a6a;box-sizing:border-box"></div><div style="position:absolute;left:10px;top:326px;width:85px;height:25px;line-height:25px;text-align:center;font-size:11.6px;font-weight:bold;color:#000">delta L</div><div style="position:absolute;left:10px;top:351px;width:85px;height:3px;background:#f0f0f0"></div><div style="position:absolute;left:95px;top:178px;width:58px;height:23px;background:#f7cfae;border-left:1px solid #fbfbfb;border-top:1px solid #fbfbfb;border-right:1px solid #6a6a6a;border-bottom:1px solid #6a6a6a;box-sizing:border-box"></div><div style="position:absolute;left:98px;top:179px;width:52px;height:21px;line-height:21px;overflow:hidden;white-space:nowrap;font-size:11.6px;font-weight:bold;color:#222"><span style="position:absolute;left:50%;top:0;transform:translateX(-50%);white-space:nowrap">Skin#FFDFC4</span></div><div style="position:absolute;left:95px;top:201px;width:58px;height:25px;background:#ffffff"></div><div style="position:absolute;left:95px;top:225px;width:58px;height:1px;background:#c8c8c8"></div><div style="position:absolute;left:152px;top:201px;width:1px;height:25px;background:#c8c8c8"></div><div style="position:absolute;left:95px;top:201px;width:56.5px;height:25px;line-height:25px;text-align:right;font-size:11.6px;letter-spacing:-0.35px;color:#000">0.3604</div><div style="position:absolute;left:95px;top:226px;width:58px;height:25px;background:#ffffff"></div><div style="position:absolute;left:95px;top:250px;width:58px;height:1px;background:#c8c8c8"></div><div style="position:absolute;left:152px;top:226px;width:1px;height:25px;background:#c8c8c8"></div><div style="position:absolute;left:95px;top:226px;width:56.5px;height:25px;line-height:25px;text-align:right;font-size:11.6px;letter-spacing:-0.35px;color:#000">0.3610</div><div style="position:absolute;left:95px;top:251px;width:58px;height:25px;background:#ffffff"></div><div style="position:absolute;left:95px;top:275px;width:58px;height:1px;background:#c8c8c8"></div><div style="position:absolute;left:152px;top:251px;width:1px;height:25px;background:#c8c8c8"></div><div style="position:absolute;left:95px;top:251px;width:56.5px;height:25px;line-height:25px;text-align:right;font-size:11.6px;letter-spacing:-0.35px;color:#000">74.504</div><div style="position:absolute;left:95px;top:276px;width:58px;height:25px;background:#adfcad"></div><div style="position:absolute;left:95px;top:300px;width:58px;height:1px;background:#c8c8c8"></div><div style="position:absolute;left:152px;top:276px;width:1px;height:25px;background:#c8c8c8"></div><div style="position:absolute;left:95px;top:276px;width:56.5px;height:25px;line-height:25px;text-align:right;font-size:11.6px;letter-spacing:-0.35px;font-weight:bold;color:#000">1.1</div><div style="position:absolute;left:95px;top:301px;width:58px;height:25px;background:#f0f0f0"></div><div style="position:absolute;left:95px;top:325px;width:58px;height:1px;background:#c8c8c8"></div><div style="position:absolute;left:152px;top:301px;width:1px;height:25px;background:#c8c8c8"></div><div style="position:absolute;left:95px;top:301px;width:56.5px;height:25px;line-height:25px;text-align:right;font-size:11.6px;letter-spacing:-0.35px;color:#000">0.0045</div><div style="position:absolute;left:95px;top:326px;width:58px;height:25px;background:#e0e0e0"></div><div style="position:absolute;left:95px;top:350px;width:58px;height:1px;background:#c8c8c8"></div><div style="position:absolute;left:152px;top:326px;width:1px;height:25px;background:#c8c8c8"></div><div style="position:absolute;left:95px;top:326px;width:56.5px;height:25px;line-height:25px;text-align:right;font-size:11.6px;letter-spacing:-0.35px;color:#000">+0.2 %</div><div style="position:absolute;left:95px;top:351px;width:58px;height:3px;background:#f0f0f0"></div><div style="position:absolute;left:152px;top:351px;width:1px;height:3px;background:#c8c8c8"></div><div style="position:absolute;left:153px;top:178px;width:62px;height:23px;background:#e9cdb5;border-left:1px solid #fbfbfb;border-top:1px solid #fbfbfb;border-right:1px solid #6a6a6a;border-bottom:1px solid #6a6a6a;box-sizing:border-box"></div><div style="position:absolute;left:156px;top:179px;width:56px;height:21px;line-height:21px;overflow:hidden;white-space:nowrap;font-size:11.6px;font-weight:bold;color:#222"><span style="position:absolute;left:50%;top:0;transform:translateX(-50%);white-space:nowrap">Skin#F0D5BE</span></div><div style="position:absolute;left:153px;top:201px;width:62px;height:25px;background:#ffffff"></div><div style="position:absolute;left:153px;top:225px;width:62px;height:1px;background:#c8c8c8"></div><div style="position:absolute;left:214px;top:201px;width:1px;height:25px;background:#c8c8c8"></div><div style="position:absolute;left:153px;top:201px;width:60.5px;height:25px;line-height:25px;text-align:right;font-size:11.6px;letter-spacing:-0.35px;color:#000">0.3495</div><div style="position:absolute;left:153px;top:226px;width:62px;height:25px;background:#ffffff"></div><div style="position:absolute;left:153px;top:250px;width:62px;height:1px;background:#c8c8c8"></div><div style="position:absolute;left:214px;top:226px;width:1px;height:25px;background:#c8c8c8"></div><div style="position:absolute;left:153px;top:226px;width:60.5px;height:25px;line-height:25px;text-align:right;font-size:11.6px;letter-spacing:-0.35px;color:#000">0.3544</div><div style="position:absolute;left:153px;top:251px;width:62px;height:25px;background:#ffffff"></div><div style="position:absolute;left:153px;top:275px;width:62px;height:1px;background:#c8c8c8"></div><div style="position:absolute;left:214px;top:251px;width:1px;height:25px;background:#c8c8c8"></div><div style="position:absolute;left:153px;top:251px;width:60.5px;height:25px;line-height:25px;text-align:right;font-size:11.6px;letter-spacing:-0.35px;color:#000">66.143</div><div style="position:absolute;left:153px;top:276px;width:62px;height:25px;background:#adfcad"></div><div style="position:absolute;left:153px;top:300px;width:62px;height:1px;background:#c8c8c8"></div><div style="position:absolute;left:214px;top:276px;width:1px;height:25px;background:#c8c8c8"></div><div style="position:absolute;left:153px;top:276px;width:60.5px;height:25px;line-height:25px;text-align:right;font-size:11.6px;letter-spacing:-0.35px;font-weight:bold;color:#000">0.4</div><div style="position:absolute;left:153px;top:301px;width:62px;height:25px;background:#f0f0f0"></div><div style="position:absolute;left:153px;top:325px;width:62px;height:1px;background:#c8c8c8"></div><div style="position:absolute;left:214px;top:301px;width:1px;height:25px;background:#c8c8c8"></div><div style="position:absolute;left:153px;top:301px;width:60.5px;height:25px;line-height:25px;text-align:right;font-size:11.6px;letter-spacing:-0.35px;color:#000">0.0014</div><div style="position:absolute;left:153px;top:326px;width:62px;height:25px;background:#e0e0e0"></div><div style="position:absolute;left:153px;top:350px;width:62px;height:1px;background:#c8c8c8"></div><div style="position:absolute;left:214px;top:326px;width:1px;height:25px;background:#c8c8c8"></div><div style="position:absolute;left:153px;top:326px;width:60.5px;height:25px;line-height:25px;text-align:right;font-size:11.6px;letter-spacing:-0.35px;color:#000">-1.2 %</div><div style="position:absolute;left:153px;top:351px;width:62px;height:3px;background:#f0f0f0"></div><div style="position:absolute;left:214px;top:351px;width:1px;height:3px;background:#c8c8c8"></div><div style="position:absolute;left:215px;top:178px;width:63px;height:23px;background:#e9c5a8;border-left:1px solid #fbfbfb;border-top:1px solid #fbfbfb;border-right:1px solid #6a6a6a;border-bottom:1px solid #6a6a6a;box-sizing:border-box"></div><div style="position:absolute;left:218px;top:179px;width:57px;height:21px;line-height:21px;overflow:hidden;white-space:nowrap;font-size:11.6px;font-weight:bold;color:#222"><span style="position:absolute;left:50%;top:0;transform:translateX(-50%);white-space:nowrap">Skin#EECEB3</span></div><div style="position:absolute;left:215px;top:201px;width:63px;height:25px;background:#ffffff"></div><div style="position:absolute;left:215px;top:225px;width:63px;height:1px;background:#c8c8c8"></div><div style="position:absolute;left:277px;top:201px;width:1px;height:25px;background:#c8c8c8"></div><div style="position:absolute;left:215px;top:201px;width:61.5px;height:25px;line-height:25px;text-align:right;font-size:11.6px;letter-spacing:-0.35px;color:#000">0.3591</div><div style="position:absolute;left:215px;top:226px;width:63px;height:25px;background:#ffffff"></div><div style="position:absolute;left:215px;top:250px;width:63px;height:1px;background:#c8c8c8"></div><div style="position:absolute;left:277px;top:226px;width:1px;height:25px;background:#c8c8c8"></div><div style="position:absolute;left:215px;top:226px;width:61.5px;height:25px;line-height:25px;text-align:right;font-size:11.6px;letter-spacing:-0.35px;color:#000">0.3606</div><div style="position:absolute;left:215px;top:251px;width:63px;height:25px;background:#ffffff"></div><div style="position:absolute;left:215px;top:275px;width:63px;height:1px;background:#c8c8c8"></div><div style="position:absolute;left:277px;top:251px;width:1px;height:25px;background:#c8c8c8"></div><div style="position:absolute;left:215px;top:251px;width:61.5px;height:25px;line-height:25px;text-align:right;font-size:11.6px;letter-spacing:-0.35px;color:#000">61.929</div><div style="position:absolute;left:215px;top:276px;width:63px;height:25px;background:#adfcad"></div><div style="position:absolute;left:215px;top:300px;width:63px;height:1px;background:#c8c8c8"></div><div style="position:absolute;left:277px;top:276px;width:1px;height:25px;background:#c8c8c8"></div><div style="position:absolute;left:215px;top:276px;width:61.5px;height:25px;line-height:25px;text-align:right;font-size:11.6px;letter-spacing:-0.35px;font-weight:bold;color:#000">1.1</div><div style="position:absolute;left:215px;top:301px;width:63px;height:25px;background:#f0f0f0"></div><div style="position:absolute;left:215px;top:325px;width:63px;height:1px;background:#c8c8c8"></div><div style="position:absolute;left:277px;top:301px;width:1px;height:25px;background:#c8c8c8"></div><div style="position:absolute;left:215px;top:301px;width:61.5px;height:25px;line-height:25px;text-align:right;font-size:11.6px;letter-spacing:-0.35px;color:#000">0.0027</div><div style="position:absolute;left:215px;top:326px;width:63px;height:25px;background:#e0e0e0"></div><div style="position:absolute;left:215px;top:350px;width:63px;height:1px;background:#c8c8c8"></div><div style="position:absolute;left:277px;top:326px;width:1px;height:25px;background:#c8c8c8"></div><div style="position:absolute;left:215px;top:326px;width:61.5px;height:25px;line-height:25px;text-align:right;font-size:11.6px;letter-spacing:-0.35px;color:#000">+0.5 %</div><div style="position:absolute;left:215px;top:351px;width:63px;height:3px;background:#f0f0f0"></div><div style="position:absolute;left:277px;top:351px;width:1px;height:3px;background:#c8c8c8"></div><div style="position:absolute;left:278px;top:178px;width:63px;height:23px;background:#dca98b;border-left:1px solid #fbfbfb;border-top:1px solid #fbfbfb;border-right:1px solid #6a6a6a;border-bottom:1px solid #6a6a6a;box-sizing:border-box"></div><div style="position:absolute;left:281px;top:179px;width:57px;height:21px;line-height:21px;overflow:hidden;white-space:nowrap;font-size:11.6px;font-weight:bold;color:#222"><span style="position:absolute;left:50%;top:0;transform:translateX(-50%);white-space:nowrap">Skin#E1B899</span></div><div style="position:absolute;left:278px;top:201px;width:63px;height:25px;background:#ffffff"></div><div style="position:absolute;left:278px;top:225px;width:63px;height:1px;background:#c8c8c8"></div><div style="position:absolute;left:340px;top:201px;width:1px;height:25px;background:#c8c8c8"></div><div style="position:absolute;left:278px;top:201px;width:61.5px;height:25px;line-height:25px;text-align:right;font-size:11.6px;letter-spacing:-0.35px;color:#000">0.3834</div><div style="position:absolute;left:278px;top:226px;width:63px;height:25px;background:#ffffff"></div><div style="position:absolute;left:278px;top:250px;width:63px;height:1px;background:#c8c8c8"></div><div style="position:absolute;left:340px;top:226px;width:1px;height:25px;background:#c8c8c8"></div><div style="position:absolute;left:278px;top:226px;width:61.5px;height:25px;line-height:25px;text-align:right;font-size:11.6px;letter-spacing:-0.35px;color:#000">0.3684</div><div style="position:absolute;left:278px;top:251px;width:63px;height:25px;background:#ffffff"></div><div style="position:absolute;left:278px;top:275px;width:63px;height:1px;background:#c8c8c8"></div><div style="position:absolute;left:340px;top:251px;width:1px;height:25px;background:#c8c8c8"></div><div style="position:absolute;left:278px;top:251px;width:61.5px;height:25px;line-height:25px;text-align:right;font-size:11.6px;letter-spacing:-0.35px;color:#000">50.207</div><div style="position:absolute;left:278px;top:276px;width:63px;height:25px;background:#adfcad"></div><div style="position:absolute;left:278px;top:300px;width:63px;height:1px;background:#c8c8c8"></div><div style="position:absolute;left:340px;top:276px;width:1px;height:25px;background:#c8c8c8"></div><div style="position:absolute;left:278px;top:276px;width:61.5px;height:25px;line-height:25px;text-align:right;font-size:11.6px;letter-spacing:-0.35px;font-weight:bold;color:#000">0.8</div><div style="position:absolute;left:278px;top:301px;width:63px;height:25px;background:#f0f0f0"></div><div style="position:absolute;left:278px;top:325px;width:63px;height:1px;background:#c8c8c8"></div><div style="position:absolute;left:340px;top:301px;width:1px;height:25px;background:#c8c8c8"></div><div style="position:absolute;left:278px;top:301px;width:61.5px;height:25px;line-height:25px;text-align:right;font-size:11.6px;letter-spacing:-0.35px;color:#000">0.0048</div><div style="position:absolute;left:278px;top:326px;width:63px;height:25px;background:#e0e0e0"></div><div style="position:absolute;left:278px;top:350px;width:63px;height:1px;background:#c8c8c8"></div><div style="position:absolute;left:340px;top:326px;width:1px;height:25px;background:#c8c8c8"></div><div style="position:absolute;left:278px;top:326px;width:61.5px;height:25px;line-height:25px;text-align:right;font-size:11.6px;letter-spacing:-0.35px;color:#000">+0.7 %</div><div style="position:absolute;left:278px;top:351px;width:63px;height:3px;background:#f0f0f0"></div><div style="position:absolute;left:340px;top:351px;width:1px;height:3px;background:#c8c8c8"></div><div style="position:absolute;left:341px;top:178px;width:63px;height:23px;background:#dfbb93;border-left:1px solid #fbfbfb;border-top:1px solid #fbfbfb;border-right:1px solid #6a6a6a;border-bottom:1px solid #6a6a6a;box-sizing:border-box"></div><div style="position:absolute;left:344px;top:179px;width:57px;height:21px;line-height:21px;overflow:hidden;white-space:nowrap;font-size:11.6px;font-weight:bold;color:#222"><span style="position:absolute;left:50%;top:0;transform:translateX(-50%);white-space:nowrap">Skin#E5C298</span></div><div style="position:absolute;left:341px;top:201px;width:63px;height:25px;background:#ffffff"></div><div style="position:absolute;left:341px;top:225px;width:63px;height:1px;background:#c8c8c8"></div><div style="position:absolute;left:403px;top:201px;width:1px;height:25px;background:#c8c8c8"></div><div style="position:absolute;left:341px;top:201px;width:61.5px;height:25px;line-height:25px;text-align:right;font-size:11.6px;letter-spacing:-0.35px;color:#000">0.3764</div><div style="position:absolute;left:341px;top:226px;width:63px;height:25px;background:#ffffff"></div><div style="position:absolute;left:341px;top:250px;width:63px;height:1px;background:#c8c8c8"></div><div style="position:absolute;left:403px;top:226px;width:1px;height:25px;background:#c8c8c8"></div><div style="position:absolute;left:341px;top:226px;width:61.5px;height:25px;line-height:25px;text-align:right;font-size:11.6px;letter-spacing:-0.35px;color:#000">0.3784</div><div style="position:absolute;left:341px;top:251px;width:63px;height:25px;background:#ffffff"></div><div style="position:absolute;left:341px;top:275px;width:63px;height:1px;background:#c8c8c8"></div><div style="position:absolute;left:403px;top:251px;width:1px;height:25px;background:#c8c8c8"></div><div style="position:absolute;left:341px;top:251px;width:61.5px;height:25px;line-height:25px;text-align:right;font-size:11.6px;letter-spacing:-0.35px;color:#000">56.525</div><div style="position:absolute;left:341px;top:276px;width:63px;height:25px;background:#adfcad"></div><div style="position:absolute;left:341px;top:300px;width:63px;height:1px;background:#c8c8c8"></div><div style="position:absolute;left:403px;top:276px;width:1px;height:25px;background:#c8c8c8"></div><div style="position:absolute;left:341px;top:276px;width:61.5px;height:25px;line-height:25px;text-align:right;font-size:11.6px;letter-spacing:-0.35px;font-weight:bold;color:#000">1.1</div><div style="position:absolute;left:341px;top:301px;width:63px;height:25px;background:#f0f0f0"></div><div style="position:absolute;left:341px;top:325px;width:63px;height:1px;background:#c8c8c8"></div><div style="position:absolute;left:403px;top:301px;width:1px;height:25px;background:#c8c8c8"></div><div style="position:absolute;left:341px;top:301px;width:61.5px;height:25px;line-height:25px;text-align:right;font-size:11.6px;letter-spacing:-0.35px;color:#000">0.0034</div><div style="position:absolute;left:341px;top:326px;width:63px;height:25px;background:#e0e0e0"></div><div style="position:absolute;left:341px;top:350px;width:63px;height:1px;background:#c8c8c8"></div><div style="position:absolute;left:403px;top:326px;width:1px;height:25px;background:#c8c8c8"></div><div style="position:absolute;left:341px;top:326px;width:61.5px;height:25px;line-height:25px;text-align:right;font-size:11.6px;letter-spacing:-0.35px;color:#000">+1.6 %</div><div style="position:absolute;left:341px;top:351px;width:63px;height:3px;background:#f0f0f0"></div><div style="position:absolute;left:403px;top:351px;width:1px;height:3px;background:#c8c8c8"></div><div style="position:absolute;left:404px;top:178px;width:58px;height:23px;background:#f7d2ae;border-left:1px solid #fbfbfb;border-top:1px solid #fbfbfb;border-right:1px solid #6a6a6a;border-bottom:1px solid #6a6a6a;box-sizing:border-box"></div><div style="position:absolute;left:407px;top:179px;width:52px;height:21px;line-height:21px;overflow:hidden;white-space:nowrap;font-size:11.6px;font-weight:bold;color:#222"><span style="position:absolute;left:50%;top:0;transform:translateX(-50%);white-space:nowrap">Skin#FFDCB2</span></div><div style="position:absolute;left:404px;top:201px;width:58px;height:25px;background:#ffffff"></div><div style="position:absolute;left:404px;top:225px;width:58px;height:1px;background:#c8c8c8"></div><div style="position:absolute;left:461px;top:201px;width:1px;height:25px;background:#c8c8c8"></div><div style="position:absolute;left:404px;top:201px;width:56.5px;height:25px;line-height:25px;text-align:right;font-size:11.6px;letter-spacing:-0.35px;color:#000">0.3674</div><div style="position:absolute;left:404px;top:226px;width:58px;height:25px;background:#ffffff"></div><div style="position:absolute;left:404px;top:250px;width:58px;height:1px;background:#c8c8c8"></div><div style="position:absolute;left:461px;top:226px;width:1px;height:25px;background:#c8c8c8"></div><div style="position:absolute;left:404px;top:226px;width:56.5px;height:25px;line-height:25px;text-align:right;font-size:11.6px;letter-spacing:-0.35px;color:#000">0.3695</div><div style="position:absolute;left:404px;top:251px;width:58px;height:25px;background:#ffffff"></div><div style="position:absolute;left:404px;top:275px;width:58px;height:1px;background:#c8c8c8"></div><div style="position:absolute;left:461px;top:251px;width:1px;height:25px;background:#c8c8c8"></div><div style="position:absolute;left:404px;top:251px;width:56.5px;height:25px;line-height:25px;text-align:right;font-size:11.6px;letter-spacing:-0.35px;color:#000">70.340</div><div style="position:absolute;left:404px;top:276px;width:58px;height:25px;background:#adfcad"></div><div style="position:absolute;left:404px;top:300px;width:58px;height:1px;background:#c8c8c8"></div><div style="position:absolute;left:461px;top:276px;width:1px;height:25px;background:#c8c8c8"></div><div style="position:absolute;left:404px;top:276px;width:56.5px;height:25px;line-height:25px;text-align:right;font-size:11.6px;letter-spacing:-0.35px;font-weight:bold;color:#000">0.6</div><div style="position:absolute;left:404px;top:301px;width:58px;height:25px;background:#f0f0f0"></div><div style="position:absolute;left:404px;top:325px;width:58px;height:1px;background:#c8c8c8"></div><div style="position:absolute;left:461px;top:301px;width:1px;height:25px;background:#c8c8c8"></div><div style="position:absolute;left:404px;top:301px;width:56.5px;height:25px;line-height:25px;text-align:right;font-size:11.6px;letter-spacing:-0.35px;color:#000">0.0033</div><div style="position:absolute;left:404px;top:326px;width:58px;height:25px;background:#e0e0e0"></div><div style="position:absolute;left:404px;top:350px;width:58px;height:1px;background:#c8c8c8"></div><div style="position:absolute;left:461px;top:326px;width:1px;height:25px;background:#c8c8c8"></div><div style="position:absolute;left:404px;top:326px;width:56.5px;height:25px;line-height:25px;text-align:right;font-size:11.6px;letter-spacing:-0.35px;color:#000">-0.5 %</div><div style="position:absolute;left:404px;top:351px;width:58px;height:3px;background:#f0f0f0"></div><div style="position:absolute;left:461px;top:351px;width:1px;height:3px;background:#c8c8c8"></div><div style="position:absolute;left:462px;top:178px;width:79px;height:23px;background:#e0b08b;border-left:1px solid #fbfbfb;border-top:1px solid #fbfbfb;border-right:1px solid #6a6a6a;border-bottom:1px solid #6a6a6a;box-sizing:border-box"></div><div style="position:absolute;left:465px;top:179px;width:73px;height:21px;line-height:21px;overflow:hidden;white-space:nowrap;font-size:11.6px;font-weight:bold;color:#111"><span style="position:absolute;left:50%;top:0;transform:translateX(-50%);white-space:nowrap">Skin#E5B887</span></div><div style="position:absolute;left:462px;top:201px;width:79px;height:25px;background:#0078d7"></div><div style="position:absolute;left:462px;top:225px;width:79px;height:1px;background:#c8c8c8"></div><div style="position:absolute;left:540px;top:201px;width:1px;height:25px;background:#c8c8c8"></div><div style="position:absolute;left:462px;top:201px;width:77.5px;height:25px;line-height:25px;text-align:right;font-size:11.6px;letter-spacing:-0.35px;color:#fff">0.3913</div><div style="position:absolute;left:462px;top:226px;width:79px;height:25px;background:#0078d7"></div><div style="position:absolute;left:462px;top:250px;width:79px;height:1px;background:#c8c8c8"></div><div style="position:absolute;left:540px;top:226px;width:1px;height:25px;background:#c8c8c8"></div><div style="position:absolute;left:462px;top:226px;width:77.5px;height:25px;line-height:25px;text-align:right;font-size:11.6px;letter-spacing:-0.35px;color:#fff">0.3781</div><div style="position:absolute;left:462px;top:251px;width:79px;height:25px;background:#0078d7"></div><div style="position:absolute;left:462px;top:275px;width:79px;height:1px;background:#c8c8c8"></div><div style="position:absolute;left:540px;top:251px;width:1px;height:25px;background:#c8c8c8"></div><div style="position:absolute;left:462px;top:251px;width:77.5px;height:25px;line-height:25px;text-align:right;font-size:11.6px;letter-spacing:-0.35px;color:#fff">49.610</div><div style="position:absolute;left:462px;top:276px;width:79px;height:25px;background:#adfcad"></div><div style="position:absolute;left:462px;top:300px;width:79px;height:1px;background:#c8c8c8"></div><div style="position:absolute;left:540px;top:276px;width:1px;height:25px;background:#c8c8c8"></div><div style="position:absolute;left:462px;top:276px;width:77.5px;height:25px;line-height:25px;text-align:right;font-size:11.6px;letter-spacing:-0.35px;font-weight:bold;color:#000">0.8</div><div style="position:absolute;left:462px;top:301px;width:79px;height:25px;background:#f0f0f0"></div><div style="position:absolute;left:462px;top:325px;width:79px;height:1px;background:#c8c8c8"></div><div style="position:absolute;left:540px;top:301px;width:1px;height:25px;background:#c8c8c8"></div><div style="position:absolute;left:462px;top:301px;width:77.5px;height:25px;line-height:25px;text-align:right;font-size:11.6px;letter-spacing:-0.35px;color:#000">0.0055</div><div style="position:absolute;left:462px;top:326px;width:79px;height:25px;background:#e0e0e0"></div><div style="position:absolute;left:462px;top:350px;width:79px;height:1px;background:#c8c8c8"></div><div style="position:absolute;left:540px;top:326px;width:1px;height:25px;background:#c8c8c8"></div><div style="position:absolute;left:462px;top:326px;width:77.5px;height:25px;line-height:25px;text-align:right;font-size:11.6px;letter-spacing:-0.35px;color:#000">-0.1 %</div><div style="position:absolute;left:462px;top:351px;width:79px;height:3px;background:#f0f0f0"></div><div style="position:absolute;left:540px;top:351px;width:1px;height:3px;background:#c8c8c8"></div><div style="position:absolute;left:541px;top:178px;width:78px;height:23px;background:#e29d73;border-left:1px solid #fbfbfb;border-top:1px solid #fbfbfb;border-right:1px solid #6a6a6a;border-bottom:1px solid #6a6a6a;box-sizing:border-box"></div><div style="position:absolute;left:544px;top:179px;width:72px;height:21px;line-height:21px;overflow:hidden;white-space:nowrap;font-size:11.6px;font-weight:bold;color:#111"><span style="position:absolute;left:50%;top:0;transform:translateX(-50%);white-space:nowrap">Skin#E5A073</span></div><div style="position:absolute;left:541px;top:201px;width:78px;height:25px;background:#ffffff"></div><div style="position:absolute;left:541px;top:225px;width:78px;height:1px;background:#c8c8c8"></div><div style="position:absolute;left:618px;top:201px;width:1px;height:25px;background:#c8c8c8"></div><div style="position:absolute;left:541px;top:201px;width:76.5px;height:25px;line-height:25px;text-align:right;font-size:11.6px;letter-spacing:-0.35px;color:#000">0.4271</div><div style="position:absolute;left:541px;top:226px;width:78px;height:25px;background:#ffffff"></div><div style="position:absolute;left:541px;top:250px;width:78px;height:1px;background:#c8c8c8"></div><div style="position:absolute;left:618px;top:226px;width:1px;height:25px;background:#c8c8c8"></div><div style="position:absolute;left:541px;top:226px;width:76.5px;height:25px;line-height:25px;text-align:right;font-size:11.6px;letter-spacing:-0.35px;color:#000">0.3829</div><div style="position:absolute;left:541px;top:251px;width:78px;height:25px;background:#ffffff"></div><div style="position:absolute;left:541px;top:275px;width:78px;height:1px;background:#c8c8c8"></div><div style="position:absolute;left:618px;top:251px;width:1px;height:25px;background:#c8c8c8"></div><div style="position:absolute;left:541px;top:251px;width:76.5px;height:25px;line-height:25px;text-align:right;font-size:11.6px;letter-spacing:-0.35px;color:#000">42.040</div><div style="position:absolute;left:541px;top:276px;width:78px;height:25px;background:#adfcad"></div><div style="position:absolute;left:541px;top:300px;width:78px;height:1px;background:#c8c8c8"></div><div style="position:absolute;left:618px;top:276px;width:1px;height:25px;background:#c8c8c8"></div><div style="position:absolute;left:541px;top:276px;width:76.5px;height:25px;line-height:25px;text-align:right;font-size:11.6px;letter-spacing:-0.35px;font-weight:bold;color:#000">0.4</div><div style="position:absolute;left:541px;top:301px;width:78px;height:25px;background:#f0f0f0"></div><div style="position:absolute;left:541px;top:325px;width:78px;height:1px;background:#c8c8c8"></div><div style="position:absolute;left:618px;top:301px;width:1px;height:25px;background:#c8c8c8"></div><div style="position:absolute;left:541px;top:301px;width:76.5px;height:25px;line-height:25px;text-align:right;font-size:11.6px;letter-spacing:-0.35px;color:#000">0.0020</div><div style="position:absolute;left:541px;top:326px;width:78px;height:25px;background:#e0e0e0"></div><div style="position:absolute;left:541px;top:350px;width:78px;height:1px;background:#c8c8c8"></div><div style="position:absolute;left:618px;top:326px;width:1px;height:25px;background:#c8c8c8"></div><div style="position:absolute;left:541px;top:326px;width:76.5px;height:25px;line-height:25px;text-align:right;font-size:11.6px;letter-spacing:-0.35px;color:#000">+1.3 %</div><div style="position:absolute;left:541px;top:351px;width:78px;height:3px;background:#f0f0f0"></div><div style="position:absolute;left:618px;top:351px;width:1px;height:3px;background:#c8c8c8"></div><div style="position:absolute;left:619px;top:178px;width:68px;height:23px;background:#e39b6e;border-left:1px solid #fbfbfb;border-top:1px solid #fbfbfb;border-right:1px solid #6a6a6a;border-bottom:1px solid #6a6a6a;box-sizing:border-box"></div><div style="position:absolute;left:622px;top:179px;width:62px;height:21px;line-height:21px;overflow:hidden;white-space:nowrap;font-size:11.6px;font-weight:bold;color:#111"><span style="position:absolute;left:50%;top:0;transform:translateX(-50%);white-space:nowrap">Skin#E79E6D</span></div><div style="position:absolute;left:619px;top:201px;width:68px;height:25px;background:#ffffff"></div><div style="position:absolute;left:619px;top:225px;width:68px;height:1px;background:#c8c8c8"></div><div style="position:absolute;left:686px;top:201px;width:1px;height:25px;background:#c8c8c8"></div><div style="position:absolute;left:619px;top:201px;width:66.5px;height:25px;line-height:25px;text-align:right;font-size:11.6px;letter-spacing:-0.35px;color:#000">0.4358</div><div style="position:absolute;left:619px;top:226px;width:68px;height:25px;background:#ffffff"></div><div style="position:absolute;left:619px;top:250px;width:68px;height:1px;background:#c8c8c8"></div><div style="position:absolute;left:686px;top:226px;width:1px;height:25px;background:#c8c8c8"></div><div style="position:absolute;left:619px;top:226px;width:66.5px;height:25px;line-height:25px;text-align:right;font-size:11.6px;letter-spacing:-0.35px;color:#000">0.3836</div><div style="position:absolute;left:619px;top:251px;width:68px;height:25px;background:#ffffff"></div><div style="position:absolute;left:619px;top:275px;width:68px;height:1px;background:#c8c8c8"></div><div style="position:absolute;left:686px;top:251px;width:1px;height:25px;background:#c8c8c8"></div><div style="position:absolute;left:619px;top:251px;width:66.5px;height:25px;line-height:25px;text-align:right;font-size:11.6px;letter-spacing:-0.35px;color:#000">39.533</div><div style="position:absolute;left:619px;top:276px;width:68px;height:25px;background:#adfcad"></div><div style="position:absolute;left:619px;top:300px;width:68px;height:1px;background:#c8c8c8"></div><div style="position:absolute;left:686px;top:276px;width:1px;height:25px;background:#c8c8c8"></div><div style="position:absolute;left:619px;top:276px;width:66.5px;height:25px;line-height:25px;text-align:right;font-size:11.6px;letter-spacing:-0.35px;font-weight:bold;color:#000">0.4</div><div style="position:absolute;left:619px;top:301px;width:68px;height:25px;background:#f0f0f0"></div><div style="position:absolute;left:619px;top:325px;width:68px;height:1px;background:#c8c8c8"></div><div style="position:absolute;left:686px;top:301px;width:1px;height:25px;background:#c8c8c8"></div><div style="position:absolute;left:619px;top:301px;width:66.5px;height:25px;line-height:25px;text-align:right;font-size:11.6px;letter-spacing:-0.35px;color:#000">0.0003</div><div style="position:absolute;left:619px;top:326px;width:68px;height:25px;background:#e0e0e0"></div><div style="position:absolute;left:619px;top:350px;width:68px;height:1px;background:#c8c8c8"></div><div style="position:absolute;left:686px;top:326px;width:1px;height:25px;background:#c8c8c8"></div><div style="position:absolute;left:619px;top:326px;width:66.5px;height:25px;line-height:25px;text-align:right;font-size:11.6px;letter-spacing:-0.35px;color:#000">-1.6 %</div><div style="position:absolute;left:619px;top:351px;width:68px;height:3px;background:#f0f0f0"></div><div style="position:absolute;left:686px;top:351px;width:1px;height:3px;background:#c8c8c8"></div><div style="position:absolute;left:687px;top:178px;width:67px;height:23px;background:#d68f63;border-left:1px solid #fbfbfb;border-top:1px solid #fbfbfb;border-right:1px solid #6a6a6a;border-bottom:1px solid #6a6a6a;box-sizing:border-box"></div><div style="position:absolute;left:690px;top:179px;width:61px;height:21px;line-height:21px;overflow:hidden;white-space:nowrap;font-size:11.6px;font-weight:bold;color:#fff"><span style="position:absolute;left:50%;top:0;transform:translateX(-50%);white-space:nowrap">Skin#DB9065</span></div><div style="position:absolute;left:687px;top:201px;width:67px;height:25px;background:#ffffff"></div><div style="position:absolute;left:687px;top:225px;width:67px;height:1px;background:#c8c8c8"></div><div style="position:absolute;left:753px;top:201px;width:1px;height:25px;background:#c8c8c8"></div><div style="position:absolute;left:687px;top:201px;width:65.5px;height:25px;line-height:25px;text-align:right;font-size:11.6px;letter-spacing:-0.35px;color:#000">0.4384</div><div style="position:absolute;left:687px;top:226px;width:67px;height:25px;background:#ffffff"></div><div style="position:absolute;left:687px;top:250px;width:67px;height:1px;background:#c8c8c8"></div><div style="position:absolute;left:753px;top:226px;width:1px;height:25px;background:#c8c8c8"></div><div style="position:absolute;left:687px;top:226px;width:65.5px;height:25px;line-height:25px;text-align:right;font-size:11.6px;letter-spacing:-0.35px;color:#000">0.3830</div><div style="position:absolute;left:687px;top:251px;width:67px;height:25px;background:#ffffff"></div><div style="position:absolute;left:687px;top:275px;width:67px;height:1px;background:#c8c8c8"></div><div style="position:absolute;left:753px;top:251px;width:1px;height:25px;background:#c8c8c8"></div><div style="position:absolute;left:687px;top:251px;width:65.5px;height:25px;line-height:25px;text-align:right;font-size:11.6px;letter-spacing:-0.35px;color:#000">34.598</div><div style="position:absolute;left:687px;top:276px;width:67px;height:25px;background:#adfcad"></div><div style="position:absolute;left:687px;top:300px;width:67px;height:1px;background:#c8c8c8"></div><div style="position:absolute;left:753px;top:276px;width:1px;height:25px;background:#c8c8c8"></div><div style="position:absolute;left:687px;top:276px;width:65.5px;height:25px;line-height:25px;text-align:right;font-size:11.6px;letter-spacing:-0.35px;font-weight:bold;color:#000">0.4</div><div style="position:absolute;left:687px;top:301px;width:67px;height:25px;background:#f0f0f0"></div><div style="position:absolute;left:687px;top:325px;width:67px;height:1px;background:#c8c8c8"></div><div style="position:absolute;left:753px;top:301px;width:1px;height:25px;background:#c8c8c8"></div><div style="position:absolute;left:687px;top:301px;width:65.5px;height:25px;line-height:25px;text-align:right;font-size:11.6px;letter-spacing:-0.35px;color:#000">0.0013</div><div style="position:absolute;left:687px;top:326px;width:67px;height:25px;background:#e0e0e0"></div><div style="position:absolute;left:687px;top:350px;width:67px;height:1px;background:#c8c8c8"></div><div style="position:absolute;left:753px;top:326px;width:1px;height:25px;background:#c8c8c8"></div><div style="position:absolute;left:687px;top:326px;width:65.5px;height:25px;line-height:25px;text-align:right;font-size:11.6px;letter-spacing:-0.35px;color:#000">-0.2 %</div><div style="position:absolute;left:687px;top:351px;width:67px;height:3px;background:#f0f0f0"></div><div style="position:absolute;left:753px;top:351px;width:1px;height:3px;background:#c8c8c8"></div><div style="position:absolute;left:754px;top:178px;width:80px;height:23px;background:#c9927a;border-left:1px solid #fbfbfb;border-top:1px solid #fbfbfb;border-right:1px solid #6a6a6a;border-bottom:1px solid #6a6a6a;box-sizing:border-box"></div><div style="position:absolute;left:757px;top:179px;width:74px;height:21px;line-height:21px;overflow:hidden;white-space:nowrap;font-size:11.6px;font-weight:bold;color:#fff"><span style="position:absolute;left:50%;top:0;transform:translateX(-50%);white-space:nowrap">Skin#CE967C</span></div><div style="position:absolute;left:754px;top:201px;width:80px;height:25px;background:#ffffff"></div><div style="position:absolute;left:754px;top:225px;width:80px;height:1px;background:#c8c8c8"></div><div style="position:absolute;left:833px;top:201px;width:1px;height:25px;background:#c8c8c8"></div><div style="position:absolute;left:754px;top:201px;width:78.5px;height:25px;line-height:25px;text-align:right;font-size:11.6px;letter-spacing:-0.35px;color:#000">0.3989</div><div style="position:absolute;left:754px;top:226px;width:80px;height:25px;background:#ffffff"></div><div style="position:absolute;left:754px;top:250px;width:80px;height:1px;background:#c8c8c8"></div><div style="position:absolute;left:833px;top:226px;width:1px;height:25px;background:#c8c8c8"></div><div style="position:absolute;left:754px;top:226px;width:78.5px;height:25px;line-height:25px;text-align:right;font-size:11.6px;letter-spacing:-0.35px;color:#000">0.3659</div><div style="position:absolute;left:754px;top:251px;width:80px;height:25px;background:#ffffff"></div><div style="position:absolute;left:754px;top:275px;width:80px;height:1px;background:#c8c8c8"></div><div style="position:absolute;left:833px;top:251px;width:1px;height:25px;background:#c8c8c8"></div><div style="position:absolute;left:754px;top:251px;width:78.5px;height:25px;line-height:25px;text-align:right;font-size:11.6px;letter-spacing:-0.35px;color:#000">35.207</div><div style="position:absolute;left:754px;top:276px;width:80px;height:25px;background:#adfcad"></div><div style="position:absolute;left:754px;top:300px;width:80px;height:1px;background:#c8c8c8"></div><div style="position:absolute;left:833px;top:276px;width:1px;height:25px;background:#c8c8c8"></div><div style="position:absolute;left:754px;top:276px;width:78.5px;height:25px;line-height:25px;text-align:right;font-size:11.6px;letter-spacing:-0.35px;font-weight:bold;color:#000">0.7</div><div style="position:absolute;left:754px;top:301px;width:80px;height:25px;background:#f0f0f0"></div><div style="position:absolute;left:754px;top:325px;width:80px;height:1px;background:#c8c8c8"></div><div style="position:absolute;left:833px;top:301px;width:1px;height:25px;background:#c8c8c8"></div><div style="position:absolute;left:754px;top:301px;width:78.5px;height:25px;line-height:25px;text-align:right;font-size:11.6px;letter-spacing:-0.35px;color:#000">0.0041</div><div style="position:absolute;left:754px;top:326px;width:80px;height:25px;background:#e0e0e0"></div><div style="position:absolute;left:754px;top:350px;width:80px;height:1px;background:#c8c8c8"></div><div style="position:absolute;left:833px;top:326px;width:1px;height:25px;background:#c8c8c8"></div><div style="position:absolute;left:754px;top:326px;width:78.5px;height:25px;line-height:25px;text-align:right;font-size:11.6px;letter-spacing:-0.35px;color:#000">+1.0 %</div><div style="position:absolute;left:754px;top:351px;width:80px;height:3px;background:#f0f0f0"></div><div style="position:absolute;left:833px;top:351px;width:1px;height:3px;background:#c8c8c8"></div><div style="position:absolute;left:834px;top:178px;width:80px;height:23px;background:#bf7657;border-left:1px solid #fbfbfb;border-top:1px solid #fbfbfb;border-right:1px solid #6a6a6a;border-bottom:1px solid #6a6a6a;box-sizing:border-box"></div><div style="position:absolute;left:837px;top:179px;width:74px;height:21px;line-height:21px;overflow:hidden;white-space:nowrap;font-size:11.6px;font-weight:bold;color:#fff"><span style="position:absolute;left:50%;top:0;transform:translateX(-50%);white-space:nowrap">Skin#C67856</span></div><div style="position:absolute;left:834px;top:201px;width:80px;height:25px;background:#ffffff"></div><div style="position:absolute;left:834px;top:225px;width:80px;height:1px;background:#c8c8c8"></div><div style="position:absolute;left:913px;top:201px;width:1px;height:25px;background:#c8c8c8"></div><div style="position:absolute;left:834px;top:201px;width:78.5px;height:25px;line-height:25px;text-align:right;font-size:11.6px;letter-spacing:-0.35px;color:#000">0.4580</div><div style="position:absolute;left:834px;top:226px;width:80px;height:25px;background:#ffffff"></div><div style="position:absolute;left:834px;top:250px;width:80px;height:1px;background:#c8c8c8"></div><div style="position:absolute;left:913px;top:226px;width:1px;height:25px;background:#c8c8c8"></div><div style="position:absolute;left:834px;top:226px;width:78.5px;height:25px;line-height:25px;text-align:right;font-size:11.6px;letter-spacing:-0.35px;color:#000">0.3725</div><div style="position:absolute;left:834px;top:251px;width:80px;height:25px;background:#ffffff"></div><div style="position:absolute;left:834px;top:275px;width:80px;height:1px;background:#c8c8c8"></div><div style="position:absolute;left:913px;top:251px;width:1px;height:25px;background:#c8c8c8"></div><div style="position:absolute;left:834px;top:251px;width:78.5px;height:25px;line-height:25px;text-align:right;font-size:11.6px;letter-spacing:-0.35px;color:#000">25.398</div><div style="position:absolute;left:834px;top:276px;width:80px;height:25px;background:#adfcad"></div><div style="position:absolute;left:834px;top:300px;width:80px;height:1px;background:#c8c8c8"></div><div style="position:absolute;left:913px;top:276px;width:1px;height:25px;background:#c8c8c8"></div><div style="position:absolute;left:834px;top:276px;width:78.5px;height:25px;line-height:25px;text-align:right;font-size:11.6px;letter-spacing:-0.35px;font-weight:bold;color:#000">0.8</div><div style="position:absolute;left:834px;top:301px;width:80px;height:25px;background:#f0f0f0"></div><div style="position:absolute;left:834px;top:325px;width:80px;height:1px;background:#c8c8c8"></div><div style="position:absolute;left:913px;top:301px;width:1px;height:25px;background:#c8c8c8"></div><div style="position:absolute;left:834px;top:301px;width:78.5px;height:25px;line-height:25px;text-align:right;font-size:11.6px;letter-spacing:-0.35px;color:#000">0.0016</div><div style="position:absolute;left:834px;top:326px;width:80px;height:25px;background:#e0e0e0"></div><div style="position:absolute;left:834px;top:350px;width:80px;height:1px;background:#c8c8c8"></div><div style="position:absolute;left:913px;top:326px;width:1px;height:25px;background:#c8c8c8"></div><div style="position:absolute;left:834px;top:326px;width:78.5px;height:25px;line-height:25px;text-align:right;font-size:11.6px;letter-spacing:-0.35px;color:#000">+3.1 %</div><div style="position:absolute;left:834px;top:351px;width:80px;height:3px;background:#f0f0f0"></div><div style="position:absolute;left:913px;top:351px;width:1px;height:3px;background:#c8c8c8"></div><div style="position:absolute;left:914px;top:178px;width:64px;height:23px;background:#b7694b;border-left:1px solid #fbfbfb;border-top:1px solid #fbfbfb;border-right:1px solid #6a6a6a;border-bottom:1px solid #6a6a6a;box-sizing:border-box"></div><div style="position:absolute;left:917px;top:179px;width:58px;height:21px;line-height:21px;overflow:hidden;white-space:nowrap;font-size:11.6px;font-weight:bold;color:#fff"><span style="position:absolute;left:50%;top:0;transform:translateX(-50%);white-space:nowrap">Skin#BA6C49</span></div><div style="position:absolute;left:914px;top:201px;width:64px;height:25px;background:#ffffff"></div><div style="position:absolute;left:914px;top:225px;width:64px;height:1px;background:#c8c8c8"></div><div style="position:absolute;left:977px;top:201px;width:1px;height:25px;background:#c8c8c8"></div><div style="position:absolute;left:914px;top:201px;width:62.5px;height:25px;line-height:25px;text-align:right;font-size:11.6px;letter-spacing:-0.35px;color:#000">0.4685</div><div style="position:absolute;left:914px;top:226px;width:64px;height:25px;background:#ffffff"></div><div style="position:absolute;left:914px;top:250px;width:64px;height:1px;background:#c8c8c8"></div><div style="position:absolute;left:977px;top:226px;width:1px;height:25px;background:#c8c8c8"></div><div style="position:absolute;left:914px;top:226px;width:62.5px;height:25px;line-height:25px;text-align:right;font-size:11.6px;letter-spacing:-0.35px;color:#000">0.3768</div><div style="position:absolute;left:914px;top:251px;width:64px;height:25px;background:#ffffff"></div><div style="position:absolute;left:914px;top:275px;width:64px;height:1px;background:#c8c8c8"></div><div style="position:absolute;left:977px;top:251px;width:1px;height:25px;background:#c8c8c8"></div><div style="position:absolute;left:914px;top:251px;width:62.5px;height:25px;line-height:25px;text-align:right;font-size:11.6px;letter-spacing:-0.35px;color:#000">21.049</div><div style="position:absolute;left:914px;top:276px;width:64px;height:25px;background:#adfcad"></div><div style="position:absolute;left:914px;top:300px;width:64px;height:1px;background:#c8c8c8"></div><div style="position:absolute;left:977px;top:276px;width:1px;height:25px;background:#c8c8c8"></div><div style="position:absolute;left:914px;top:276px;width:62.5px;height:25px;line-height:25px;text-align:right;font-size:11.6px;letter-spacing:-0.35px;font-weight:bold;color:#000">0.8</div><div style="position:absolute;left:914px;top:301px;width:64px;height:25px;background:#f0f0f0"></div><div style="position:absolute;left:914px;top:325px;width:64px;height:1px;background:#c8c8c8"></div><div style="position:absolute;left:977px;top:301px;width:1px;height:25px;background:#c8c8c8"></div><div style="position:absolute;left:914px;top:301px;width:62.5px;height:25px;line-height:25px;text-align:right;font-size:11.6px;letter-spacing:-0.35px;color:#000">0.0060</div><div style="position:absolute;left:914px;top:326px;width:64px;height:25px;background:#e0e0e0"></div><div style="position:absolute;left:914px;top:350px;width:64px;height:1px;background:#c8c8c8"></div><div style="position:absolute;left:977px;top:326px;width:1px;height:25px;background:#c8c8c8"></div><div style="position:absolute;left:914px;top:326px;width:62.5px;height:25px;line-height:25px;text-align:right;font-size:11.6px;letter-spacing:-0.35px;color:#000">+3.2 %</div><div style="position:absolute;left:914px;top:351px;width:64px;height:3px;background:#f0f0f0"></div><div style="position:absolute;left:977px;top:351px;width:1px;height:3px;background:#c8c8c8"></div><div style="position:absolute;left:978px;top:178px;width:80px;height:23px;background:#a27058;border-left:1px solid #fbfbfb;border-top:1px solid #fbfbfb;border-right:1px solid #6a6a6a;border-bottom:1px solid #6a6a6a;box-sizing:border-box"></div><div style="position:absolute;left:981px;top:179px;width:74px;height:21px;line-height:21px;overflow:hidden;white-space:nowrap;font-size:11.6px;font-weight:bold;color:#fff"><span style="position:absolute;left:50%;top:0;transform:translateX(-50%);white-space:nowrap">Skin#A57257</span></div><div style="position:absolute;left:978px;top:201px;width:80px;height:25px;background:#ffffff"></div><div style="position:absolute;left:978px;top:225px;width:80px;height:1px;background:#c8c8c8"></div><div style="position:absolute;left:1057px;top:201px;width:1px;height:25px;background:#c8c8c8"></div><div style="position:absolute;left:978px;top:201px;width:78.5px;height:25px;line-height:25px;text-align:right;font-size:11.6px;letter-spacing:-0.35px;color:#000">0.4192</div><div style="position:absolute;left:978px;top:226px;width:80px;height:25px;background:#ffffff"></div><div style="position:absolute;left:978px;top:250px;width:80px;height:1px;background:#c8c8c8"></div><div style="position:absolute;left:1057px;top:226px;width:1px;height:25px;background:#c8c8c8"></div><div style="position:absolute;left:978px;top:226px;width:78.5px;height:25px;line-height:25px;text-align:right;font-size:11.6px;letter-spacing:-0.35px;color:#000">0.3702</div><div style="position:absolute;left:978px;top:251px;width:80px;height:25px;background:#ffffff"></div><div style="position:absolute;left:978px;top:275px;width:80px;height:1px;background:#c8c8c8"></div><div style="position:absolute;left:1057px;top:251px;width:1px;height:25px;background:#c8c8c8"></div><div style="position:absolute;left:978px;top:251px;width:78.5px;height:25px;line-height:25px;text-align:right;font-size:11.6px;letter-spacing:-0.35px;color:#000">19.813</div><div style="position:absolute;left:978px;top:276px;width:80px;height:25px;background:#adfcad"></div><div style="position:absolute;left:978px;top:300px;width:80px;height:1px;background:#c8c8c8"></div><div style="position:absolute;left:1057px;top:276px;width:1px;height:25px;background:#c8c8c8"></div><div style="position:absolute;left:978px;top:276px;width:78.5px;height:25px;line-height:25px;text-align:right;font-size:11.6px;letter-spacing:-0.35px;font-weight:bold;color:#000">0.6</div><div style="position:absolute;left:978px;top:301px;width:80px;height:25px;background:#f0f0f0"></div><div style="position:absolute;left:978px;top:325px;width:80px;height:1px;background:#c8c8c8"></div><div style="position:absolute;left:1057px;top:301px;width:1px;height:25px;background:#c8c8c8"></div><div style="position:absolute;left:978px;top:301px;width:78.5px;height:25px;line-height:25px;text-align:right;font-size:11.6px;letter-spacing:-0.35px;color:#000">0.0049</div><div style="position:absolute;left:978px;top:326px;width:80px;height:25px;background:#e0e0e0"></div><div style="position:absolute;left:978px;top:350px;width:80px;height:1px;background:#c8c8c8"></div><div style="position:absolute;left:1057px;top:326px;width:1px;height:25px;background:#c8c8c8"></div><div style="position:absolute;left:978px;top:326px;width:78.5px;height:25px;line-height:25px;text-align:right;font-size:11.6px;letter-spacing:-0.35px;color:#000">+1.7 %</div><div style="position:absolute;left:978px;top:351px;width:80px;height:3px;background:#f0f0f0"></div><div style="position:absolute;left:1057px;top:351px;width:1px;height:3px;background:#c8c8c8"></div><div style="position:absolute;left:1058px;top:178px;width:89px;height:23px;background:#eec6c8;border-left:1px solid #fbfbfb;border-top:1px solid #fbfbfb;border-right:1px solid #6a6a6a;border-bottom:1px solid #6a6a6a;box-sizing:border-box"></div><div style="position:absolute;left:1061px;top:179px;width:83px;height:21px;line-height:21px;overflow:hidden;white-space:nowrap;font-size:11.6px;font-weight:bold;color:#111"><span style="position:absolute;left:50%;top:0;transform:translateX(-50%);white-space:nowrap">Skin#F0C8C9</span></div><div style="position:absolute;left:1058px;top:201px;width:89px;height:25px;background:#ffffff"></div><div style="position:absolute;left:1058px;top:225px;width:89px;height:1px;background:#c8c8c8"></div><div style="position:absolute;left:1146px;top:201px;width:1px;height:25px;background:#c8c8c8"></div><div style="position:absolute;left:1058px;top:201px;width:87.5px;height:25px;line-height:25px;text-align:right;font-size:11.6px;letter-spacing:-0.35px;color:#000">0.3428</div><div style="position:absolute;left:1058px;top:226px;width:89px;height:25px;background:#ffffff"></div><div style="position:absolute;left:1058px;top:250px;width:89px;height:1px;background:#c8c8c8"></div><div style="position:absolute;left:1146px;top:226px;width:1px;height:25px;background:#c8c8c8"></div><div style="position:absolute;left:1058px;top:226px;width:87.5px;height:25px;line-height:25px;text-align:right;font-size:11.6px;letter-spacing:-0.35px;color:#000">0.3298</div><div style="position:absolute;left:1058px;top:251px;width:89px;height:25px;background:#ffffff"></div><div style="position:absolute;left:1058px;top:275px;width:89px;height:1px;background:#c8c8c8"></div><div style="position:absolute;left:1146px;top:251px;width:1px;height:25px;background:#c8c8c8"></div><div style="position:absolute;left:1058px;top:251px;width:87.5px;height:25px;line-height:25px;text-align:right;font-size:11.6px;letter-spacing:-0.35px;color:#000">64.726</div><div style="position:absolute;left:1058px;top:276px;width:89px;height:25px;background:#adfcad"></div><div style="position:absolute;left:1058px;top:300px;width:89px;height:1px;background:#c8c8c8"></div><div style="position:absolute;left:1146px;top:276px;width:1px;height:25px;background:#c8c8c8"></div><div style="position:absolute;left:1058px;top:276px;width:87.5px;height:25px;line-height:25px;text-align:right;font-size:11.6px;letter-spacing:-0.35px;font-weight:bold;color:#000">2.0</div><div style="position:absolute;left:1058px;top:301px;width:89px;height:25px;background:#f0f0f0"></div><div style="position:absolute;left:1058px;top:325px;width:89px;height:1px;background:#c8c8c8"></div><div style="position:absolute;left:1146px;top:301px;width:1px;height:25px;background:#c8c8c8"></div><div style="position:absolute;left:1058px;top:301px;width:87.5px;height:25px;line-height:25px;text-align:right;font-size:11.6px;letter-spacing:-0.35px;color:#000">0.0037</div><div style="position:absolute;left:1058px;top:326px;width:89px;height:25px;background:#e0e0e0"></div><div style="position:absolute;left:1058px;top:350px;width:89px;height:1px;background:#c8c8c8"></div><div style="position:absolute;left:1146px;top:326px;width:1px;height:25px;background:#c8c8c8"></div><div style="position:absolute;left:1058px;top:326px;width:87.5px;height:25px;line-height:25px;text-align:right;font-size:11.6px;letter-spacing:-0.35px;color:#000">+7.0 %</div><div style="position:absolute;left:1058px;top:351px;width:89px;height:3px;background:#f0f0f0"></div><div style="position:absolute;left:1146px;top:351px;width:1px;height:3px;background:#c8c8c8"></div><div style="position:absolute;left:1147px;top:178px;width:71px;height:23px;background:#d9a6a4;border-left:1px solid #fbfbfb;border-top:1px solid #fbfbfb;border-right:1px solid #6a6a6a;border-bottom:1px solid #6a6a6a;box-sizing:border-box"></div><div style="position:absolute;left:1150px;top:179px;width:65px;height:21px;line-height:21px;overflow:hidden;white-space:nowrap;font-size:11.6px;font-weight:bold;color:#111"><span style="position:absolute;left:50%;top:0;transform:translateX(-50%);white-space:nowrap">Skin#DDA8A0</span></div><div style="position:absolute;left:1147px;top:201px;width:71px;height:25px;background:#ffffff"></div><div style="position:absolute;left:1147px;top:225px;width:71px;height:1px;background:#c8c8c8"></div><div style="position:absolute;left:1217px;top:201px;width:1px;height:25px;background:#c8c8c8"></div><div style="position:absolute;left:1147px;top:201px;width:69.5px;height:25px;line-height:25px;text-align:right;font-size:11.6px;letter-spacing:-0.35px;color:#000">0.3737</div><div style="position:absolute;left:1147px;top:226px;width:71px;height:25px;background:#ffffff"></div><div style="position:absolute;left:1147px;top:250px;width:71px;height:1px;background:#c8c8c8"></div><div style="position:absolute;left:1217px;top:226px;width:1px;height:25px;background:#c8c8c8"></div><div style="position:absolute;left:1147px;top:226px;width:69.5px;height:25px;line-height:25px;text-align:right;font-size:11.6px;letter-spacing:-0.35px;color:#000">0.3389</div><div style="position:absolute;left:1147px;top:251px;width:71px;height:25px;background:#ffffff"></div><div style="position:absolute;left:1147px;top:275px;width:71px;height:1px;background:#c8c8c8"></div><div style="position:absolute;left:1217px;top:251px;width:1px;height:25px;background:#c8c8c8"></div><div style="position:absolute;left:1147px;top:251px;width:69.5px;height:25px;line-height:25px;text-align:right;font-size:11.6px;letter-spacing:-0.35px;color:#000">42.910</div><div style="position:absolute;left:1147px;top:276px;width:71px;height:25px;background:#adfcad"></div><div style="position:absolute;left:1147px;top:300px;width:71px;height:1px;background:#c8c8c8"></div><div style="position:absolute;left:1217px;top:276px;width:1px;height:25px;background:#c8c8c8"></div><div style="position:absolute;left:1147px;top:276px;width:69.5px;height:25px;line-height:25px;text-align:right;font-size:11.6px;letter-spacing:-0.35px;font-weight:bold;color:#000">1.4</div><div style="position:absolute;left:1147px;top:301px;width:71px;height:25px;background:#f0f0f0"></div><div style="position:absolute;left:1147px;top:325px;width:71px;height:1px;background:#c8c8c8"></div><div style="position:absolute;left:1217px;top:301px;width:1px;height:25px;background:#c8c8c8"></div><div style="position:absolute;left:1147px;top:301px;width:69.5px;height:25px;line-height:25px;text-align:right;font-size:11.6px;letter-spacing:-0.35px;color:#000">0.0060</div><div style="position:absolute;left:1147px;top:326px;width:71px;height:25px;background:#e0e0e0"></div><div style="position:absolute;left:1147px;top:350px;width:71px;height:1px;background:#c8c8c8"></div><div style="position:absolute;left:1217px;top:326px;width:1px;height:25px;background:#c8c8c8"></div><div style="position:absolute;left:1147px;top:326px;width:69.5px;height:25px;line-height:25px;text-align:right;font-size:11.6px;letter-spacing:-0.35px;color:#000">-0.1 %</div><div style="position:absolute;left:1147px;top:351px;width:71px;height:3px;background:#f0f0f0"></div><div style="position:absolute;left:1217px;top:351px;width:1px;height:3px;background:#c8c8c8"></div><div style="position:absolute;left:1218px;top:178px;width:86px;height:23px;background:#b57b6d;border-left:1px solid #fbfbfb;border-top:1px solid #fbfbfb;border-right:1px solid #6a6a6a;border-bottom:1px solid #6a6a6a;box-sizing:border-box"></div><div style="position:absolute;left:1221px;top:179px;width:80px;height:21px;line-height:21px;overflow:hidden;white-space:nowrap;font-size:11.6px;font-weight:bold;color:#fff"><span style="position:absolute;left:50%;top:0;transform:translateX(-50%);white-space:nowrap">Skin#B97C6D</span></div><div style="position:absolute;left:1218px;top:201px;width:86px;height:25px;background:#ffffff"></div><div style="position:absolute;left:1218px;top:225px;width:86px;height:1px;background:#c8c8c8"></div><div style="position:absolute;left:1303px;top:201px;width:1px;height:25px;background:#c8c8c8"></div><div style="position:absolute;left:1218px;top:201px;width:84.5px;height:25px;line-height:25px;text-align:right;font-size:11.6px;letter-spacing:-0.35px;color:#000">0.4091</div><div style="position:absolute;left:1218px;top:226px;width:86px;height:25px;background:#ffffff"></div><div style="position:absolute;left:1218px;top:250px;width:86px;height:1px;background:#c8c8c8"></div><div style="position:absolute;left:1303px;top:226px;width:1px;height:25px;background:#c8c8c8"></div><div style="position:absolute;left:1218px;top:226px;width:84.5px;height:25px;line-height:25px;text-align:right;font-size:11.6px;letter-spacing:-0.35px;color:#000">0.3527</div><div style="position:absolute;left:1218px;top:251px;width:86px;height:25px;background:#ffffff"></div><div style="position:absolute;left:1218px;top:275px;width:86px;height:1px;background:#c8c8c8"></div><div style="position:absolute;left:1303px;top:251px;width:1px;height:25px;background:#c8c8c8"></div><div style="position:absolute;left:1218px;top:251px;width:84.5px;height:25px;line-height:25px;text-align:right;font-size:11.6px;letter-spacing:-0.35px;color:#000">24.472</div><div style="position:absolute;left:1218px;top:276px;width:86px;height:25px;background:#adfcad"></div><div style="position:absolute;left:1218px;top:300px;width:86px;height:1px;background:#c8c8c8"></div><div style="position:absolute;left:1303px;top:276px;width:1px;height:25px;background:#c8c8c8"></div><div style="position:absolute;left:1218px;top:276px;width:84.5px;height:25px;line-height:25px;text-align:right;font-size:11.6px;letter-spacing:-0.35px;font-weight:bold;color:#000">0.7</div><div style="position:absolute;left:1218px;top:301px;width:86px;height:25px;background:#f0f0f0"></div><div style="position:absolute;left:1218px;top:325px;width:86px;height:1px;background:#c8c8c8"></div><div style="position:absolute;left:1303px;top:301px;width:1px;height:25px;background:#c8c8c8"></div><div style="position:absolute;left:1218px;top:301px;width:84.5px;height:25px;line-height:25px;text-align:right;font-size:11.6px;letter-spacing:-0.35px;color:#000">0.0027</div><div style="position:absolute;left:1218px;top:326px;width:86px;height:25px;background:#e0e0e0"></div><div style="position:absolute;left:1218px;top:350px;width:86px;height:1px;background:#c8c8c8"></div><div style="position:absolute;left:1303px;top:326px;width:1px;height:25px;background:#c8c8c8"></div><div style="position:absolute;left:1218px;top:326px;width:84.5px;height:25px;line-height:25px;text-align:right;font-size:11.6px;letter-spacing:-0.35px;color:#000">-0.8 %</div><div style="position:absolute;left:1218px;top:351px;width:86px;height:3px;background:#f0f0f0"></div><div style="position:absolute;left:1303px;top:351px;width:1px;height:3px;background:#c8c8c8"></div><div style="position:absolute;left:1304px;top:178px;width:90px;height:23px;background:#a47463;border-left:1px solid #fbfbfb;border-top:1px solid #fbfbfb;border-right:1px solid #6a6a6a;border-bottom:1px solid #6a6a6a;box-sizing:border-box"></div><div style="position:absolute;left:1307px;top:179px;width:84px;height:21px;line-height:21px;overflow:hidden;white-space:nowrap;font-size:11.6px;font-weight:bold;color:#fff"><span style="position:absolute;left:50%;top:0;transform:translateX(-50%);white-space:nowrap">Skin#A87563</span></div><div style="position:absolute;left:1304px;top:201px;width:90px;height:25px;background:#ffffff"></div><div style="position:absolute;left:1304px;top:225px;width:90px;height:1px;background:#c8c8c8"></div><div style="position:absolute;left:1393px;top:201px;width:1px;height:25px;background:#c8c8c8"></div><div style="position:absolute;left:1304px;top:201px;width:88.5px;height:25px;line-height:25px;text-align:right;font-size:11.6px;letter-spacing:-0.35px;color:#000">0.3976</div><div style="position:absolute;left:1304px;top:226px;width:90px;height:25px;background:#ffffff"></div><div style="position:absolute;left:1304px;top:250px;width:90px;height:1px;background:#c8c8c8"></div><div style="position:absolute;left:1393px;top:226px;width:1px;height:25px;background:#c8c8c8"></div><div style="position:absolute;left:1304px;top:226px;width:88.5px;height:25px;line-height:25px;text-align:right;font-size:11.6px;letter-spacing:-0.35px;color:#000">0.3442</div><div style="position:absolute;left:1304px;top:251px;width:90px;height:25px;background:#ffffff"></div><div style="position:absolute;left:1304px;top:275px;width:90px;height:1px;background:#c8c8c8"></div><div style="position:absolute;left:1393px;top:251px;width:1px;height:25px;background:#c8c8c8"></div><div style="position:absolute;left:1304px;top:251px;width:88.5px;height:25px;line-height:25px;text-align:right;font-size:11.6px;letter-spacing:-0.35px;color:#000">21.221</div><div style="position:absolute;left:1304px;top:276px;width:90px;height:25px;background:#adfcad"></div><div style="position:absolute;left:1304px;top:300px;width:90px;height:1px;background:#c8c8c8"></div><div style="position:absolute;left:1393px;top:276px;width:1px;height:25px;background:#c8c8c8"></div><div style="position:absolute;left:1304px;top:276px;width:88.5px;height:25px;line-height:25px;text-align:right;font-size:11.6px;letter-spacing:-0.35px;font-weight:bold;color:#000">0.5</div><div style="position:absolute;left:1304px;top:301px;width:90px;height:25px;background:#f0f0f0"></div><div style="position:absolute;left:1304px;top:325px;width:90px;height:1px;background:#c8c8c8"></div><div style="position:absolute;left:1393px;top:301px;width:1px;height:25px;background:#c8c8c8"></div><div style="position:absolute;left:1304px;top:301px;width:88.5px;height:25px;line-height:25px;text-align:right;font-size:11.6px;letter-spacing:-0.35px;color:#000">0.0009</div><div style="position:absolute;left:1304px;top:326px;width:90px;height:25px;background:#e0e0e0"></div><div style="position:absolute;left:1304px;top:350px;width:90px;height:1px;background:#c8c8c8"></div><div style="position:absolute;left:1393px;top:326px;width:1px;height:25px;background:#c8c8c8"></div><div style="position:absolute;left:1304px;top:326px;width:88.5px;height:25px;line-height:25px;text-align:right;font-size:11.6px;letter-spacing:-0.35px;color:#000">+2.1 %</div><div style="position:absolute;left:1304px;top:351px;width:90px;height:3px;background:#f0f0f0"></div><div style="position:absolute;left:1393px;top:351px;width:1px;height:3px;background:#c8c8c8"></div><div style="position:absolute;left:1394px;top:178px;width:61px;height:23px;background:#a95f4e;border-left:1px solid #fbfbfb;border-top:1px solid #fbfbfb;border-right:1px solid #6a6a6a;border-bottom:1px solid #6a6a6a;box-sizing:border-box"></div><div style="position:absolute;left:1397px;top:179px;width:55px;height:21px;line-height:21px;overflow:hidden;white-space:nowrap;font-size:11.6px;font-weight:bold;color:#fff"><span style="position:absolute;left:50%;top:0;transform:translateX(-50%);white-space:nowrap">Skin#AD6452</span></div><div style="position:absolute;left:1394px;top:201px;width:61px;height:25px;background:#ffffff"></div><div style="position:absolute;left:1394px;top:225px;width:61px;height:1px;background:#c8c8c8"></div><div style="position:absolute;left:1454px;top:201px;width:1px;height:25px;background:#c8c8c8"></div><div style="position:absolute;left:1394px;top:201px;width:59.5px;height:25px;line-height:25px;text-align:right;font-size:11.6px;letter-spacing:-0.35px;color:#000">0.4461</div><div style="position:absolute;left:1394px;top:226px;width:61px;height:25px;background:#ffffff"></div><div style="position:absolute;left:1394px;top:250px;width:61px;height:1px;background:#c8c8c8"></div><div style="position:absolute;left:1454px;top:226px;width:1px;height:25px;background:#c8c8c8"></div><div style="position:absolute;left:1394px;top:226px;width:59.5px;height:25px;line-height:25px;text-align:right;font-size:11.6px;letter-spacing:-0.35px;color:#000">0.3525</div><div style="position:absolute;left:1394px;top:251px;width:61px;height:25px;background:#ffffff"></div><div style="position:absolute;left:1394px;top:275px;width:61px;height:1px;background:#c8c8c8"></div><div style="position:absolute;left:1454px;top:251px;width:1px;height:25px;background:#c8c8c8"></div><div style="position:absolute;left:1394px;top:251px;width:59.5px;height:25px;line-height:25px;text-align:right;font-size:11.6px;letter-spacing:-0.35px;color:#000">17.802</div><div style="position:absolute;left:1394px;top:276px;width:61px;height:25px;background:#adfcad"></div><div style="position:absolute;left:1394px;top:300px;width:61px;height:1px;background:#c8c8c8"></div><div style="position:absolute;left:1454px;top:276px;width:1px;height:25px;background:#c8c8c8"></div><div style="position:absolute;left:1394px;top:276px;width:59.5px;height:25px;line-height:25px;text-align:right;font-size:11.6px;letter-spacing:-0.35px;font-weight:bold;color:#000">0.9</div><div style="position:absolute;left:1394px;top:301px;width:61px;height:25px;background:#f0f0f0"></div><div style="position:absolute;left:1394px;top:325px;width:61px;height:1px;background:#c8c8c8"></div><div style="position:absolute;left:1454px;top:301px;width:1px;height:25px;background:#c8c8c8"></div><div style="position:absolute;left:1394px;top:301px;width:59.5px;height:25px;line-height:25px;text-align:right;font-size:11.6px;letter-spacing:-0.35px;color:#000">0.0082</div><div style="position:absolute;left:1394px;top:326px;width:61px;height:25px;background:#e0e0e0"></div><div style="position:absolute;left:1394px;top:350px;width:61px;height:1px;background:#c8c8c8"></div><div style="position:absolute;left:1454px;top:326px;width:1px;height:25px;background:#c8c8c8"></div><div style="position:absolute;left:1394px;top:326px;width:59.5px;height:25px;line-height:25px;text-align:right;font-size:11.6px;letter-spacing:-0.35px;color:#000">+1.4 %</div><div style="position:absolute;left:1394px;top:351px;width:61px;height:3px;background:#f0f0f0"></div><div style="position:absolute;left:1454px;top:351px;width:1px;height:3px;background:#c8c8c8"></div><div style="position:absolute;left:1455px;top:178px;width:68px;height:23px;background:#5b3833;border-left:1px solid #fbfbfb;border-top:1px solid #fbfbfb;border-right:1px solid #6a6a6a;border-bottom:1px solid #6a6a6a;box-sizing:border-box"></div><div style="position:absolute;left:1458px;top:179px;width:62px;height:21px;line-height:21px;overflow:hidden;white-space:nowrap;font-size:11.6px;font-weight:bold;color:#fff"><span style="position:absolute;left:50%;top:0;transform:translateX(-50%);white-space:nowrap">Skin#5C3836</span></div><div style="position:absolute;left:1455px;top:201px;width:68px;height:25px;background:#ffffff"></div><div style="position:absolute;left:1455px;top:225px;width:68px;height:1px;background:#c8c8c8"></div><div style="position:absolute;left:1522px;top:201px;width:1px;height:25px;background:#c8c8c8"></div><div style="position:absolute;left:1455px;top:201px;width:66.5px;height:25px;line-height:25px;text-align:right;font-size:11.6px;letter-spacing:-0.35px;color:#000">0.4009</div><div style="position:absolute;left:1455px;top:226px;width:68px;height:25px;background:#ffffff"></div><div style="position:absolute;left:1455px;top:250px;width:68px;height:1px;background:#c8c8c8"></div><div style="position:absolute;left:1522px;top:226px;width:1px;height:25px;background:#c8c8c8"></div><div style="position:absolute;left:1455px;top:226px;width:66.5px;height:25px;line-height:25px;text-align:right;font-size:11.6px;letter-spacing:-0.35px;color:#000">0.3357</div><div style="position:absolute;left:1455px;top:251px;width:68px;height:25px;background:#ffffff"></div><div style="position:absolute;left:1455px;top:275px;width:68px;height:1px;background:#c8c8c8"></div><div style="position:absolute;left:1522px;top:251px;width:1px;height:25px;background:#c8c8c8"></div><div style="position:absolute;left:1455px;top:251px;width:66.5px;height:25px;line-height:25px;text-align:right;font-size:11.6px;letter-spacing:-0.35px;color:#000">4.912</div><div style="position:absolute;left:1455px;top:276px;width:68px;height:25px;background:#adfcad"></div><div style="position:absolute;left:1455px;top:300px;width:68px;height:1px;background:#c8c8c8"></div><div style="position:absolute;left:1522px;top:276px;width:1px;height:25px;background:#c8c8c8"></div><div style="position:absolute;left:1455px;top:276px;width:66.5px;height:25px;line-height:25px;text-align:right;font-size:11.6px;letter-spacing:-0.35px;font-weight:bold;color:#000">1.3</div><div style="position:absolute;left:1455px;top:301px;width:68px;height:25px;background:#f0f0f0"></div><div style="position:absolute;left:1455px;top:325px;width:68px;height:1px;background:#c8c8c8"></div><div style="position:absolute;left:1522px;top:301px;width:1px;height:25px;background:#c8c8c8"></div><div style="position:absolute;left:1455px;top:301px;width:66.5px;height:25px;line-height:25px;text-align:right;font-size:11.6px;letter-spacing:-0.35px;color:#000">0.0133</div><div style="position:absolute;left:1455px;top:326px;width:68px;height:25px;background:#e0e0e0"></div><div style="position:absolute;left:1455px;top:350px;width:68px;height:1px;background:#c8c8c8"></div><div style="position:absolute;left:1522px;top:326px;width:1px;height:25px;background:#c8c8c8"></div><div style="position:absolute;left:1455px;top:326px;width:66.5px;height:25px;line-height:25px;text-align:right;font-size:11.6px;letter-spacing:-0.35px;color:#000">+6.4 %</div><div style="position:absolute;left:1455px;top:351px;width:68px;height:3px;background:#f0f0f0"></div><div style="position:absolute;left:1522px;top:351px;width:1px;height:3px;background:#c8c8c8"></div><div style="position:absolute;left:1523px;top:178px;width:57px;height:23px;background:#cc8545;border-left:1px solid #fbfbfb;border-top:1px solid #fbfbfb;border-right:1px solid #6a6a6a;border-bottom:1px solid #6a6a6a;box-sizing:border-box"></div><div style="position:absolute;left:1526px;top:179px;width:51px;height:21px;line-height:21px;overflow:hidden;white-space:nowrap;font-size:11.6px;font-weight:bold;color:#fff"><span style="position:absolute;left:50%;top:0;transform:translateX(-50%);white-space:nowrap">Skin#CB8442</span></div><div style="position:absolute;left:1523px;top:201px;width:57px;height:25px;background:#ffffff"></div><div style="position:absolute;left:1523px;top:225px;width:57px;height:1px;background:#c8c8c8"></div><div style="position:absolute;left:1579px;top:201px;width:1px;height:25px;background:#c8c8c8"></div><div style="position:absolute;left:1523px;top:201px;width:55.5px;height:25px;line-height:25px;text-align:right;font-size:11.6px;letter-spacing:-0.35px;color:#000">0.4656</div><div style="position:absolute;left:1523px;top:226px;width:57px;height:25px;background:#ffffff"></div><div style="position:absolute;left:1523px;top:250px;width:57px;height:1px;background:#c8c8c8"></div><div style="position:absolute;left:1579px;top:226px;width:1px;height:25px;background:#c8c8c8"></div><div style="position:absolute;left:1523px;top:226px;width:55.5px;height:25px;line-height:25px;text-align:right;font-size:11.6px;letter-spacing:-0.35px;color:#000">0.4119</div><div style="position:absolute;left:1523px;top:251px;width:57px;height:25px;background:#ffffff"></div><div style="position:absolute;left:1523px;top:275px;width:57px;height:1px;background:#c8c8c8"></div><div style="position:absolute;left:1579px;top:251px;width:1px;height:25px;background:#c8c8c8"></div><div style="position:absolute;left:1523px;top:251px;width:55.5px;height:25px;line-height:25px;text-align:right;font-size:11.6px;letter-spacing:-0.35px;color:#000">28.085</div><div style="position:absolute;left:1523px;top:276px;width:57px;height:25px;background:#adfcad"></div><div style="position:absolute;left:1523px;top:300px;width:57px;height:1px;background:#c8c8c8"></div><div style="position:absolute;left:1579px;top:276px;width:1px;height:25px;background:#c8c8c8"></div><div style="position:absolute;left:1523px;top:276px;width:55.5px;height:25px;line-height:25px;text-align:right;font-size:11.6px;letter-spacing:-0.35px;font-weight:bold;color:#000">0.2</div><div style="position:absolute;left:1523px;top:301px;width:57px;height:25px;background:#f0f0f0"></div><div style="position:absolute;left:1523px;top:325px;width:57px;height:1px;background:#c8c8c8"></div><div style="position:absolute;left:1579px;top:301px;width:1px;height:25px;background:#c8c8c8"></div><div style="position:absolute;left:1523px;top:301px;width:55.5px;height:25px;line-height:25px;text-align:right;font-size:11.6px;letter-spacing:-0.35px;color:#000">0.0008</div><div style="position:absolute;left:1523px;top:326px;width:57px;height:25px;background:#e0e0e0"></div><div style="position:absolute;left:1523px;top:350px;width:57px;height:1px;background:#c8c8c8"></div><div style="position:absolute;left:1579px;top:326px;width:1px;height:25px;background:#c8c8c8"></div><div style="position:absolute;left:1523px;top:326px;width:55.5px;height:25px;line-height:25px;text-align:right;font-size:11.6px;letter-spacing:-0.35px;color:#000">=</div><div style="position:absolute;left:1523px;top:351px;width:57px;height:3px;background:#f0f0f0"></div><div style="position:absolute;left:1579px;top:351px;width:1px;height:3px;background:#c8c8c8"></div><div style="position:absolute;left:1580px;top:178px;width:61px;height:23px;background:#b86e3b;border-left:1px solid #fbfbfb;border-top:1px solid #fbfbfb;border-right:1px solid #6a6a6a;border-bottom:1px solid #6a6a6a;box-sizing:border-box"></div><div style="position:absolute;left:1583px;top:179px;width:55px;height:21px;line-height:21px;overflow:hidden;white-space:nowrap;font-size:11.6px;font-weight:bold;color:#fff"><span style="position:absolute;left:50%;top:0;transform:translateX(-50%);white-space:nowrap">Skin#BD723C</span></div><div style="position:absolute;left:1580px;top:201px;width:61px;height:25px;background:#ffffff"></div><div style="position:absolute;left:1580px;top:225px;width:61px;height:1px;background:#c8c8c8"></div><div style="position:absolute;left:1640px;top:201px;width:1px;height:25px;background:#c8c8c8"></div><div style="position:absolute;left:1580px;top:201px;width:59.5px;height:25px;line-height:25px;text-align:right;font-size:11.6px;letter-spacing:-0.35px;color:#000">0.4798</div><div style="position:absolute;left:1580px;top:226px;width:61px;height:25px;background:#ffffff"></div><div style="position:absolute;left:1580px;top:250px;width:61px;height:1px;background:#c8c8c8"></div><div style="position:absolute;left:1640px;top:226px;width:1px;height:25px;background:#c8c8c8"></div><div style="position:absolute;left:1580px;top:226px;width:59.5px;height:25px;line-height:25px;text-align:right;font-size:11.6px;letter-spacing:-0.35px;color:#000">0.4002</div><div style="position:absolute;left:1580px;top:251px;width:61px;height:25px;background:#ffffff"></div><div style="position:absolute;left:1580px;top:275px;width:61px;height:1px;background:#c8c8c8"></div><div style="position:absolute;left:1640px;top:251px;width:1px;height:25px;background:#c8c8c8"></div><div style="position:absolute;left:1580px;top:251px;width:59.5px;height:25px;line-height:25px;text-align:right;font-size:11.6px;letter-spacing:-0.35px;color:#000">22.280</div><div style="position:absolute;left:1580px;top:276px;width:61px;height:25px;background:#adfcad"></div><div style="position:absolute;left:1580px;top:300px;width:61px;height:1px;background:#c8c8c8"></div><div style="position:absolute;left:1640px;top:276px;width:1px;height:25px;background:#c8c8c8"></div><div style="position:absolute;left:1580px;top:276px;width:59.5px;height:25px;line-height:25px;text-align:right;font-size:11.6px;letter-spacing:-0.35px;font-weight:bold;color:#000">0.9</div><div style="position:absolute;left:1580px;top:301px;width:61px;height:25px;background:#f0f0f0"></div><div style="position:absolute;left:1580px;top:325px;width:61px;height:1px;background:#c8c8c8"></div><div style="position:absolute;left:1640px;top:301px;width:1px;height:25px;background:#c8c8c8"></div><div style="position:absolute;left:1580px;top:301px;width:59.5px;height:25px;line-height:25px;text-align:right;font-size:11.6px;letter-spacing:-0.35px;color:#000">0.0058</div><div style="position:absolute;left:1580px;top:326px;width:61px;height:25px;background:#e0e0e0"></div><div style="position:absolute;left:1580px;top:350px;width:61px;height:1px;background:#c8c8c8"></div><div style="position:absolute;left:1640px;top:326px;width:1px;height:25px;background:#c8c8c8"></div><div style="position:absolute;left:1580px;top:326px;width:59.5px;height:25px;line-height:25px;text-align:right;font-size:11.6px;letter-spacing:-0.35px;color:#000">+1.2 %</div><div style="position:absolute;left:1580px;top:351px;width:61px;height:3px;background:#f0f0f0"></div><div style="position:absolute;left:1640px;top:351px;width:1px;height:3px;background:#c8c8c8"></div><div style="position:absolute;left:1641px;top:178px;width:68px;height:23px;background:#6e4137;border-left:1px solid #fbfbfb;border-top:1px solid #fbfbfb;border-right:1px solid #6a6a6a;border-bottom:1px solid #6a6a6a;box-sizing:border-box"></div><div style="position:absolute;left:1644px;top:179px;width:62px;height:21px;line-height:21px;overflow:hidden;white-space:nowrap;font-size:11.6px;font-weight:bold;color:#fff"><span style="position:absolute;left:50%;top:0;transform:translateX(-50%);white-space:nowrap">Skin#704139</span></div><div style="position:absolute;left:1641px;top:201px;width:68px;height:25px;background:#ffffff"></div><div style="position:absolute;left:1641px;top:225px;width:68px;height:1px;background:#c8c8c8"></div><div style="position:absolute;left:1708px;top:201px;width:1px;height:25px;background:#c8c8c8"></div><div style="position:absolute;left:1641px;top:201px;width:66.5px;height:25px;line-height:25px;text-align:right;font-size:11.6px;letter-spacing:-0.35px;color:#000">0.4217</div><div style="position:absolute;left:1641px;top:226px;width:68px;height:25px;background:#ffffff"></div><div style="position:absolute;left:1641px;top:250px;width:68px;height:1px;background:#c8c8c8"></div><div style="position:absolute;left:1708px;top:226px;width:1px;height:25px;background:#c8c8c8"></div><div style="position:absolute;left:1641px;top:226px;width:66.5px;height:25px;line-height:25px;text-align:right;font-size:11.6px;letter-spacing:-0.35px;color:#000">0.3459</div><div style="position:absolute;left:1641px;top:251px;width:68px;height:25px;background:#ffffff"></div><div style="position:absolute;left:1641px;top:275px;width:68px;height:1px;background:#c8c8c8"></div><div style="position:absolute;left:1708px;top:251px;width:1px;height:25px;background:#c8c8c8"></div><div style="position:absolute;left:1641px;top:251px;width:66.5px;height:25px;line-height:25px;text-align:right;font-size:11.6px;letter-spacing:-0.35px;color:#000">7.016</div><div style="position:absolute;left:1641px;top:276px;width:68px;height:25px;background:#fffdb0"></div><div style="position:absolute;left:1641px;top:300px;width:68px;height:1px;background:#c8c8c8"></div><div style="position:absolute;left:1708px;top:276px;width:1px;height:25px;background:#c8c8c8"></div><div style="position:absolute;left:1641px;top:276px;width:66.5px;height:25px;line-height:25px;text-align:right;font-size:11.6px;letter-spacing:-0.35px;font-weight:bold;color:#000">2.1</div><div style="position:absolute;left:1641px;top:301px;width:68px;height:25px;background:#f0f0f0"></div><div style="position:absolute;left:1641px;top:325px;width:68px;height:1px;background:#c8c8c8"></div><div style="position:absolute;left:1708px;top:301px;width:1px;height:25px;background:#c8c8c8"></div><div style="position:absolute;left:1641px;top:301px;width:66.5px;height:25px;line-height:25px;text-align:right;font-size:11.6px;letter-spacing:-0.35px;color:#000">0.0213</div><div style="position:absolute;left:1641px;top:326px;width:68px;height:25px;background:#e0e0e0"></div><div style="position:absolute;left:1641px;top:350px;width:68px;height:1px;background:#c8c8c8"></div><div style="position:absolute;left:1708px;top:326px;width:1px;height:25px;background:#c8c8c8"></div><div style="position:absolute;left:1641px;top:326px;width:66.5px;height:25px;line-height:25px;text-align:right;font-size:11.6px;letter-spacing:-0.35px;color:#000">+3.4 %</div><div style="position:absolute;left:1641px;top:351px;width:68px;height:3px;background:#f0f0f0"></div><div style="position:absolute;left:1708px;top:351px;width:1px;height:3px;background:#c8c8c8"></div><div style="position:absolute;left:1709px;top:178px;width:60px;height:23px;background:#a5876a;border-left:1px solid #fbfbfb;border-top:1px solid #fbfbfb;border-right:1px solid #6a6a6a;border-bottom:1px solid #6a6a6a;box-sizing:border-box"></div><div style="position:absolute;left:1712px;top:179px;width:54px;height:21px;line-height:21px;overflow:hidden;white-space:nowrap;font-size:11.6px;font-weight:bold;color:#fff"><span style="position:absolute;left:50%;top:0;transform:translateX(-50%);white-space:nowrap">Skin#A3866A</span></div><div style="position:absolute;left:1709px;top:201px;width:60px;height:25px;background:#ffffff"></div><div style="position:absolute;left:1709px;top:225px;width:60px;height:1px;background:#c8c8c8"></div><div style="position:absolute;left:1768px;top:201px;width:1px;height:25px;background:#c8c8c8"></div><div style="position:absolute;left:1709px;top:201px;width:58.5px;height:25px;line-height:25px;text-align:right;font-size:11.6px;letter-spacing:-0.35px;color:#000">0.3840</div><div style="position:absolute;left:1709px;top:226px;width:60px;height:25px;background:#ffffff"></div><div style="position:absolute;left:1709px;top:250px;width:60px;height:1px;background:#c8c8c8"></div><div style="position:absolute;left:1768px;top:226px;width:1px;height:25px;background:#c8c8c8"></div><div style="position:absolute;left:1709px;top:226px;width:58.5px;height:25px;line-height:25px;text-align:right;font-size:11.6px;letter-spacing:-0.35px;color:#000">0.3743</div><div style="position:absolute;left:1709px;top:251px;width:60px;height:25px;background:#ffffff"></div><div style="position:absolute;left:1709px;top:275px;width:60px;height:1px;background:#c8c8c8"></div><div style="position:absolute;left:1768px;top:251px;width:1px;height:25px;background:#c8c8c8"></div><div style="position:absolute;left:1709px;top:251px;width:58.5px;height:25px;line-height:25px;text-align:right;font-size:11.6px;letter-spacing:-0.35px;color:#000">23.880</div><div style="position:absolute;left:1709px;top:276px;width:60px;height:25px;background:#adfcad"></div><div style="position:absolute;left:1709px;top:300px;width:60px;height:1px;background:#c8c8c8"></div><div style="position:absolute;left:1768px;top:276px;width:1px;height:25px;background:#c8c8c8"></div><div style="position:absolute;left:1709px;top:276px;width:58.5px;height:25px;line-height:25px;text-align:right;font-size:11.6px;letter-spacing:-0.35px;font-weight:bold;color:#000">1.0</div><div style="position:absolute;left:1709px;top:301px;width:60px;height:25px;background:#f0f0f0"></div><div style="position:absolute;left:1709px;top:325px;width:60px;height:1px;background:#c8c8c8"></div><div style="position:absolute;left:1768px;top:301px;width:1px;height:25px;background:#c8c8c8"></div><div style="position:absolute;left:1709px;top:301px;width:58.5px;height:25px;line-height:25px;text-align:right;font-size:11.6px;letter-spacing:-0.35px;color:#000">0.0026</div><div style="position:absolute;left:1709px;top:326px;width:60px;height:25px;background:#e0e0e0"></div><div style="position:absolute;left:1709px;top:350px;width:60px;height:1px;background:#c8c8c8"></div><div style="position:absolute;left:1768px;top:326px;width:1px;height:25px;background:#c8c8c8"></div><div style="position:absolute;left:1709px;top:326px;width:58.5px;height:25px;line-height:25px;text-align:right;font-size:11.6px;letter-spacing:-0.35px;color:#000">-2.2 %</div><div style="position:absolute;left:1709px;top:351px;width:60px;height:3px;background:#f0f0f0"></div><div style="position:absolute;left:1768px;top:351px;width:1px;height:3px;background:#c8c8c8"></div><div style="position:absolute;left:463px;top:202px;width:77px;height:23px;border:1px solid #ffffff;box-sizing:border-box"></div><div style="position:absolute;left:1770px;top:176px;width:19px;height:178px;background:#f0f0f0"></div><div style="position:absolute;left:1778px;top:195px;width:3px;height:141px;background:#a0a0a0"></div><div style="position:absolute;left:1788px;top:176px;width:1px;height:178px;background:#bdbdbd"></div><div style="position:absolute;left:10px;top:354px;width:1778px;height:20px;background:#f0f0f0"></div><svg style="position:absolute;left:14px;top:358px" width="10" height="12"><path d="M1 6 L7 1 L7 11 Z" fill="#a8a8a8"/></svg><svg style="position:absolute;left:1758px;top:358px" width="10" height="12"><path d="M8 6 L2 1 L2 11 Z" fill="#a8a8a8"/></svg><div style="position:absolute;left:1811px;top:156px;width:89px;height:228px;background:#878787"></div><div style="position:absolute;left:1814px;top:161px;width:81px;height:100px;background:#8f8f8f;border-top-left-radius:7px;border-top-right-radius:7px"></div><div style="position:absolute;left:1815px;top:162px;width:79px;height:98px;background:#ececec;border-top-left-radius:6px;border-top-right-radius:6px"></div><div style="position:absolute;left:1815px;top:162px;width:79px;height:16px;background:#e7edf7;border-top-left-radius:6px;border-top-right-radius:6px"></div><div style="position:absolute;left:1815px;top:178px;width:79px;height:1px;background:#c4c4c4"></div><div style="position:absolute;left:1821px;top:163px;white-space:pre;font-size:11.6px;font-weight:bold;color:#3b3b3b;line-height:16px;letter-spacing:0.9px">Display</div><svg style="position:absolute;left:1822px;top:182px" width="12" height="12"><circle cx="6" cy="6" r="5" fill="#fff" stroke="#b8b8b8" stroke-width="1"/></svg><div style="position:absolute;left:1841px;top:180px;white-space:pre;font-size:13px;color:#a8a8a8;line-height:16px">Sensor</div><svg style="position:absolute;left:1822px;top:198px" width="12" height="12"><circle cx="6" cy="6" r="5" fill="#fff" stroke="#444" stroke-width="1"/></svg><div style="position:absolute;left:1841px;top:196px;white-space:pre;font-size:13px;color:#000;line-height:16px">RGB</div><svg style="position:absolute;left:1822px;top:214px" width="12" height="12"><circle cx="6" cy="6" r="5" fill="#fff" stroke="#444" stroke-width="1"/></svg><div style="position:absolute;left:1841px;top:212px;white-space:pre;font-size:13px;color:#000;line-height:16px">XYZ</div><svg style="position:absolute;left:1822px;top:230px" width="12" height="12"><circle cx="6" cy="6" r="5" fill="#fff" stroke="#444" stroke-width="1"/></svg><div style="position:absolute;left:1841px;top:228px;white-space:pre;font-size:13px;color:#000;line-height:16px">xyz</div><svg style="position:absolute;left:1822px;top:245px" width="12" height="12"><circle cx="6" cy="6" r="5" fill="#fff" stroke="#444" stroke-width="1"/><circle cx="6" cy="6" r="2" fill="#000"/></svg><div style="position:absolute;left:1841px;top:243px;white-space:pre;font-size:13px;color:#000;line-height:16px">xyY</div><div style="position:absolute;left:1813px;top:264px;width:82px;height:29px;background:#ebebeb;border-top:1px solid #fff;border-left:1px solid #fff;box-sizing:border-box"></div><div style="position:absolute;left:1861px;top:271px;white-space:pre;font-size:13.7px;color:#000;line-height:16px">Go</div><div style="position:absolute;left:1813px;top:294px;width:82px;height:28px;background:#ebebeb;border-top:1px solid #fff;border-left:1px solid #fff;box-sizing:border-box"></div><div style="position:absolute;left:1850px;top:301px;white-space:pre;font-size:13.7px;color:#000;line-height:16px">Delete</div><div style="position:absolute;left:1813px;top:324px;width:82px;height:28px;background:#ebebeb;border-top:1px solid #fff;border-left:1px solid #fff;box-sizing:border-box"></div><div style="position:absolute;left:1858px;top:331px;white-space:pre;font-size:13.7px;color:#000;line-height:16px">Refs</div><svg style="position:absolute;left:1818px;top:266px" width="33" height="28"><rect x="0.5" y="0.5" width="8" height="26" fill="#b8b8b8" stroke="#222" stroke-width="0.8"/><rect x="23" y="3" width="9" height="24" fill="#b8b8b8" stroke="#222" stroke-width="0.8"/><path d="M3 4 H7 M3 10 H7 M3 16 H7 M3 22 H7 M25 8 H30 M25 14 H30 M25 20 H30" stroke="#fff" stroke-width="2"/><path d="M6 1 L16 0 L24 4 L14 8 Z" fill="#e00010" stroke="#400" stroke-width="0.6"/><path d="M14 8 L24 4 L26 15 L16 19 Z" fill="#10b040" stroke="#102010" stroke-width="0.8"/><path d="M16 19 L26 15 L32 22 L20 28 Z" fill="#3a8af0" stroke="#1a1a80" stroke-width="1.2"/></svg><svg style="position:absolute;left:1819px;top:296px" width="30" height="27"><defs><linearGradient id="binb" x1="0" y1="0" x2="1" y2="0"><stop offset="0" stop-color="#d8f0ff"/><stop offset="0.5" stop-color="#90c8f0"/><stop offset="1" stop-color="#5090c8"/></linearGradient></defs><path d="M1 4 Q14 -1 28 2 L24 23 Q14 28 5 24 Z" fill="url(#binb)" stroke="#4a80b0" stroke-width="0.8"/><ellipse cx="14" cy="21" rx="9" ry="3.5" fill="#c8e8f8" opacity="0.8"/><path d="M10 15 A5 5 0 0 1 18 9 L19 7 L20 12 L15 12 L17 10.5 A3.5 3.5 0 0 0 12 15 Z" fill="#10a020"/><path d="M19 13 A5 5 0 0 1 11 19 L10 21 L9 16 L14 16 L12 17.5 A3.5 3.5 0 0 0 17 13 Z" fill="#10a020"/></svg><svg style="position:absolute;left:1818px;top:329px" width="33" height="23"><rect x="0" y="11.3" width="3" height="11.0" fill="#000070"/><rect x="3" y="9.6" width="1.5999999999999996" height="12.7" fill="#ff00ff"/><rect x="4.6" y="2.6" width="4.0" height="19.7" fill="#0000ff"/><rect x="8.6" y="6.1" width="2.700000000000001" height="16.2" fill="#00ffff"/><rect x="11.3" y="8.7" width="3.6999999999999993" height="13.6" fill="#00ff00"/><rect x="15" y="0.0" width="6" height="22.3" fill="#ffff00"/><rect x="21" y="3.5" width="3.5" height="18.8" fill="#800000"/><rect x="24.5" y="7.8" width="7.5" height="14.5" fill="#ff0000"/><polyline points="0,11.3 3,11.3 3,9.6 4.6,9.6 4.6,2.6 8.6,2.6 8.6,6.1 11.3,6.1 11.3,8.7 15,8.7 15,0.0 21,0.0 21,3.5 24.5,3.5 24.5,7.8 32,7.8" fill="none" stroke="#ffff00" stroke-width="1.2"/></svg><div style="position:absolute;left:1818px;top:358px;width:55px;height:18px;background:#ececec"></div><div style="position:absolute;left:1821px;top:361px;width:12px;height:12px;background:#fff;border:1px solid #333;box-sizing:border-box"></div><div style="position:absolute;left:1838px;top:359px;white-space:pre;font-size:13.7px;color:#000;line-height:16px">Edit</div><div style="position:absolute;left:1900px;top:94px;width:20px;height:290px;background:#f0f0f0"></div><div style="position:absolute;left:1908px;top:135px;width:3px;height:250px;background:#8a8a8a"></div><div style="position:absolute;left:0px;top:379px;width:1900px;height:5px;background:#8a8a8a"></div><div style="position:absolute;left:0px;top:384px;width:1920px;height:3px;background:#fafafa"></div><div style="position:absolute;left:5px;top:387px;width:379px;height:629px;background:#8f8f8f;border-top-left-radius:7px;border-top-right-radius:7px"></div><div style="position:absolute;left:6px;top:388px;width:377px;height:627px;background:#ececec;border-top-left-radius:6px;border-top-right-radius:6px"></div><div style="position:absolute;left:6px;top:388px;width:377px;height:17px;background:#e7edf7;border-top-left-radius:6px;border-top-right-radius:6px"></div><div style="position:absolute;left:6px;top:405px;width:377px;height:1px;background:#c4c4c4"></div><div style="position:absolute;left:12px;top:389px;white-space:pre;font-size:11.6px;font-weight:bold;color:#3b3b3b;line-height:16px;letter-spacing:0.9px">Selected color</div><div style="position:absolute;left:384px;top:387px;width:4px;height:632px;background:#8a8a8a"></div><div style="position:absolute;left:388px;top:387px;width:3px;height:632px;background:#f8f8f8"></div><div style="position:absolute;left:391px;top:387px;width:1504px;height:629px;background:#8f8f8f;border-top-left-radius:7px;border-top-right-radius:7px"></div><div style="position:absolute;left:392px;top:388px;width:1502px;height:627px;background:#ececec;border-top-left-radius:6px;border-top-right-radius:6px"></div><div style="position:absolute;left:392px;top:388px;width:1502px;height:17px;background:#e7edf7;border-top-left-radius:6px;border-top-right-radius:6px"></div><div style="position:absolute;left:392px;top:405px;width:1502px;height:1px;background:#c4c4c4"></div><div style="position:absolute;left:398px;top:389px;white-space:pre;font-size:11.6px;font-weight:bold;color:#3b3b3b;line-height:16px;letter-spacing:0.9px">Information</div><div style="position:absolute;left:391px;top:406px;width:1504px;height:610px;background:#e8e8e8;border-left:1px solid #8f8f8f;border-right:1px solid #8f8f8f;border-bottom:1px solid #8f8f8f;box-sizing:border-box"></div><div style="position:absolute;left:1893px;top:405px;width:2px;height:609px;background:#fafafa"></div><div style="position:absolute;left:0px;top:1016px;width:1900px;height:4px;background:#9a9a9a"></div><div style="position:absolute;left:1895px;top:387px;width:5px;height:633px;background:#8a8a8a"></div><div style="position:absolute;left:0px;top:1020px;width:1920px;height:22px;background:#f0f0f0"></div><div style="position:absolute;left:0px;top:94px;width:2px;height:948px;background:#7f7f7f"></div><div style="position:absolute;left:19px;top:1030px;width:1825px;height:2px;background:#8a8a8a"></div><div style="position:absolute;left:1909px;top:135px;width:2px;height:870px;background:#8a8a8a"></div><div style="position:absolute;left:0px;top:1042px;width:1920px;height:19px;background:#f0f0f0"></div><div style="position:absolute;left:0px;top:1042px;width:1920px;height:1px;background:#000"></div><div style="position:absolute;left:0px;top:1043px;width:53px;height:18px;background:#000"></div><div style="position:absolute;left:1px;top:1043px;width:16px;height:17px;background:#f0f0f0;border-top:1px solid #fff;border-left:1px solid #fff;border-right:1px solid #808080;border-bottom:1px solid #808080;box-sizing:border-box"></div><div style="position:absolute;left:18px;top:1043px;width:16px;height:17px;background:#f0f0f0;border-top:1px solid #fff;border-left:1px solid #fff;border-right:1px solid #808080;border-bottom:1px solid #808080;box-sizing:border-box"></div><div style="position:absolute;left:35px;top:1043px;width:17px;height:17px;background:#f0f0f0;border-top:1px solid #fff;border-left:1px solid #fff;border-right:1px solid #808080;border-bottom:1px solid #808080;box-sizing:border-box"></div><svg style="position:absolute;left:0;top:1043px" width="53" height="18"><path d="M5 5 L13 13 M13 5 L5 13" stroke="#000" stroke-width="1.3"/><path d="M28 5 L24 9 L28 13 Z" fill="#000"/><path d="M42 5 L46 9 L42 13 Z" fill="#000"/></svg><svg style="position:absolute;left:0;top:1042px" width="520" height="20"><path d="M54.5 0.5 L62 18.5 L120 18.5 L127 0.5 Z" fill="#fff"/><path d="M54.5 0.5 L62 18.5 M127 0.5 L120 18.5 M121 18.5 L125 10 M165 0.5 L172.5 18.5 M168.5 18.5 L172 11 M245 0.5 L252.5 18.5 M248.5 18.5 L252 11 M350 0.5 L357.5 18.5 M353.5 18.5 L357 11 M418 0.5 L425.5 18.5 M421.5 18.5 L425 11 M504 0.5 L497 18.5" stroke="#000" stroke-width="1.1" fill="none"/><path d="M62 18.5 H497" stroke="#a0a0a0" stroke-width="1"/><path d="M62 18.5 H120" stroke="#fff" stroke-width="1"/></svg><div style="position:absolute;left:46px;top:1044px;width:90px;text-align:center;font-size:9.8px;font-weight:bold;line-height:15px;color:#000">Measures</div><div style="position:absolute;left:112px;top:1044px;width:72.5px;text-align:center;font-size:9.4px;line-height:15px;color:#000">Gamma</div><div style="position:absolute;left:167.5px;top:1044px;width:89.25px;text-align:center;font-size:9.4px;line-height:15px;color:#000">RGB Levels</div><div style="position:absolute;left:244px;top:1044px;width:113.5px;text-align:center;font-size:9.4px;line-height:15px;color:#000">Color temperature</div><div style="position:absolute;left:345px;top:1044px;width:84.5px;text-align:center;font-size:9.4px;line-height:15px;color:#000">Luminance</div><div style="position:absolute;left:414px;top:1044px;width:92.75px;text-align:center;font-size:9.4px;line-height:15px;color:#000">CIE Diagram</div><div style="position:absolute;left:0px;top:1061px;width:1920px;height:19px;background:#e9eef6"></div><div style="position:absolute;left:3px;top:1063px;white-space:pre;font-size:11.2px;color:#000;line-height:16px">Ready</div><div style="position:absolute;left:1742px;top:1063px;width:75px;height:17px;border-top:1px solid #9db2cc;border-left:1px solid #9db2cc;box-sizing:border-box"></div><div style="position:absolute;left:1821px;top:1063px;width:27px;height:17px;border-top:1px solid #9db2cc;border-left:1px solid #9db2cc;box-sizing:border-box"></div><div style="position:absolute;left:1851px;top:1063px;width:32px;height:17px;border-top:1px solid #9db2cc;border-left:1px solid #9db2cc;box-sizing:border-box"></div><div style="position:absolute;left:1853px;top:1064px;white-space:pre;font-size:12.5px;color:#000;line-height:16px">NUM</div><div style="position:absolute;left:1886px;top:1063px;width:34px;height:17px;border-top:1px solid #9db2cc;border-left:1px solid #9db2cc;box-sizing:border-box"></div><div style="position:absolute;left:1846px;top:1044px;width:12px;height:12px;background:#fff;border:1px solid #333;box-sizing:border-box"></div><div style="position:absolute;left:1864px;top:1043px;white-space:pre;font-size:11.6px;color:#000;line-height:16px">Reference</div><svg style="position:absolute;left:1750px;top:1044px" width="16" height="16"><path d="M1 1 H14 V10 Q8 16 1 10 Z" fill="#6a5a10"/><rect x="3" y="2" width="9" height="6" fill="#ffd0d0"/><path d="M4 5 L11 5" stroke="#e01010" stroke-width="2"/><circle cx="12" cy="13" r="2.5" fill="#f0e020"/></svg><div style="position:absolute;left:18px;top:409px;width:110px;height:14px;background:#efefef"></div><div style="position:absolute;left:18px;top:408px;white-space:pre;font-size:13.2px;color:#000;line-height:16px">RGB Levels</div><div style="position:absolute;left:230px;top:406px;width:126px;height:17px;background:#efefef"></div><div style="position:absolute;left:241px;top:407px;white-space:pre;font-size:13.2px;letter-spacing:0.3px;color:#000;line-height:16px">Current Measure</div><svg style="position:absolute;left:14px;top:432px" width="201" height="88">
<defs>
<linearGradient id="cr" x1="0" x2="1"><stop offset="0" stop-color="#fff"/><stop offset="0.5" stop-color="#ff0000"/><stop offset="1" stop-color="#200000"/></linearGradient>
<linearGradient id="cg" x1="0" x2="1"><stop offset="0" stop-color="#fff"/><stop offset="0.5" stop-color="#00c000"/><stop offset="1" stop-color="#002000"/></linearGradient>
<linearGradient id="cb" x1="0" x2="1"><stop offset="0" stop-color="#fff"/><stop offset="0.5" stop-color="#0000ff"/><stop offset="1" stop-color="#000020"/></linearGradient>
<linearGradient id="cy" x1="0" x2="1"><stop offset="0" stop-color="#fffff0"/><stop offset="0.45" stop-color="#ffd800"/><stop offset="1" stop-color="#1a1400"/></linearGradient>
</defs>
<rect width="201" height="88" fill="#efefef"/>
<line x1="0" y1="45.5" x2="155" y2="45.5" stroke="#777" stroke-dasharray="3,2"/>
<rect x="2" y="74" width="46" height="9" fill="url(#cr)"/><ellipse cx="25" cy="74" rx="23" ry="4.5" fill="#a00000" stroke="#300" stroke-width="0.7"/>
<rect x="53" y="76" width="46" height="7" fill="url(#cg)"/><ellipse cx="76" cy="76" rx="23" ry="4.5" fill="#009000" stroke="#030" stroke-width="0.7"/>
<rect x="104" y="75" width="46" height="8" fill="url(#cb)"/><ellipse cx="127" cy="75" rx="23" ry="4.5" fill="#0000a0" stroke="#003" stroke-width="0.7"/>
<rect x="155" y="22" width="45" height="61" fill="url(#cy)"/><ellipse cx="177.5" cy="22" rx="22.5" ry="4.5" fill="#b8860b" stroke="#332200" stroke-width="0.7"/>
<rect x="0" y="82" width="201" height="6" fill="#000"/>
<text x="25" y="66" font-family="Liberation Serif" font-weight="bold" font-size="11.5" text-anchor="middle" fill="#000">21.3%</text>
<text x="76" y="68" font-family="Liberation Serif" font-weight="bold" font-size="11.5" text-anchor="middle" fill="#000">17.6%</text>
<text x="127" y="67" font-family="Liberation Serif" font-weight="bold" font-size="11.5" text-anchor="middle" fill="#000">20.1%</text>
<text x="178" y="14" font-family="Liberation Serif" font-weight="bold" font-size="11.5" text-anchor="middle" fill="#000">dE 37.2</text>
</svg><div style="position:absolute;left:16px;top:533px;width:96px;height:74px;background:#534640"></div><div style="position:absolute;left:112px;top:533px;width:96px;height:74px;background:#766b5f"></div><div style="position:absolute;left:16px;top:533px;width:96px;text-align:center;font-size:12.8px;font-weight:bold;line-height:16px;color:#1c3a5e;letter-spacing:0.4px">81,72,65<br>Measure</div><div style="position:absolute;left:112px;top:533px;width:96px;text-align:center;font-size:12.8px;font-weight:bold;line-height:16px;color:#1c3a5e;letter-spacing:0.4px">116,109,98<br>Reference</div><div style="position:absolute;left:18px;top:621px;white-space:pre;font-size:13.2px;color:#000;line-height:16px">Target</div><div style="position:absolute;left:50px;top:638px;width:116px;height:89px;background:#000"></div><div style="position:absolute;left:51px;top:639px;width:114px;height:87px;background:conic-gradient(from 0deg at 50% 50%, #4cff00 0deg, #a8e400 28deg, #ffc000 52deg, #ff6000 72deg, #ff0c00 92deg, #ff0050 112deg, #ff0090 128deg, #c000b0 155deg, #8000c0 180deg, #4000e0 205deg, #0000ff 232deg, #0050e0 252deg, #0088b8 270deg, #00c0a0 290deg, #00ff80 307deg, #20ff40 335deg, #4cff00 360deg)"></div><svg style="position:absolute;left:50px;top:638px" width="116" height="89">
<rect x="17.5" y="13.5" width="81" height="62" rx="8" fill="#776e62" stroke="#fff" stroke-width="1"/>
<line x1="58.5" y1="13" x2="58.5" y2="76" stroke="#000"/><line x1="58.5" y1="13" x2="58.5" y2="76" stroke="#fff" stroke-dasharray="3,3"/>
<line x1="15" y1="44.5" x2="102" y2="44.5" stroke="#000"/><line x1="15" y1="44.5" x2="102" y2="44.5" stroke="#fff" stroke-dasharray="3,3"/>
<ellipse cx="58.5" cy="44.5" rx="21" ry="15.5" fill="none" stroke="#000" stroke-width="1"/><ellipse cx="58.5" cy="44.5" rx="21" ry="15.5" fill="none" stroke="#fff" stroke-width="1" stroke-dasharray="3,3"/>
<path d="M82 30 L87 26 L91 30 L86 33 Z" fill="#00dd00" stroke="#ff0" stroke-width="0.4"/>
<path d="M86 34 L90 31 L90 35 L86 38 Z" fill="#0000ee" stroke="#ff0" stroke-width="0.4"/>
<path d="M90 30 L96 26 L90 33 Z" fill="#ee0000"/>
<line x1="66" y1="46" x2="90" y2="30" stroke="#ff0" stroke-width="2"/><line x1="66" y1="45.5" x2="90" y2="29.5" stroke="#800000" stroke-width="0.7"/>
<path d="M63.3 48.7 L67 42 L71 46 Z" fill="#ff0"/><path d="M64 48.5 L68 45.5 L73 45.8 Z" fill="#800000"/>
</svg><div style="position:absolute;left:220px;top:430px;width:153px;height:577px;background:#f0f0f0;border:1px solid #e4e4e4;box-sizing:border-box"></div><div style="position:absolute;left:220px;top:430px;width:135px;height:577px;background:#a0a0a0"></div><div style="position:absolute;left:220px;top:430px;width:2px;height:577px;background:#6d6d6d"></div><div style="position:absolute;left:220px;top:430px;width:135px;height:2px;background:#6d6d6d"></div><div style="position:absolute;left:222px;top:432px;width:52px;height:23px;background:#f0f0f0;border-bottom:1px solid #6d6d6d;border-right:1px solid #6d6d6d;box-sizing:border-box"></div><div style="position:absolute;left:221px;top:432px;width:53px;height:22px;line-height:22px;text-align:center;font-size:11.3px;font-weight:bold;color:#000">Y cd/m<span style="font-size:8px;position:relative;top:-4px">2</span></div><div style="position:absolute;left:274px;top:432px;width:80px;height:23px;background:#ffffff;border-bottom:1px solid #d0d0d0;box-sizing:border-box"></div><div style="position:absolute;left:274px;top:432px;width:79px;height:22px;line-height:22px;text-align:right;font-size:11.3px;color:#000">9.397</div><div style="position:absolute;left:222px;top:455px;width:52px;height:23px;background:#f0f0f0;border-bottom:1px solid #6d6d6d;border-right:1px solid #6d6d6d;box-sizing:border-box"></div><div style="position:absolute;left:221px;top:455px;width:53px;height:22px;line-height:22px;text-align:center;font-size:11.3px;font-weight:bold;color:#000">Y ftL</div><div style="position:absolute;left:274px;top:455px;width:80px;height:23px;background:#ffffff;border-bottom:1px solid #d0d0d0;box-sizing:border-box"></div><div style="position:absolute;left:274px;top:455px;width:79px;height:22px;line-height:22px;text-align:right;font-size:11.3px;color:#000">2.7429</div><div style="position:absolute;left:222px;top:478px;width:52px;height:23px;background:#f0f0f0;border-bottom:1px solid #6d6d6d;border-right:1px solid #6d6d6d;box-sizing:border-box"></div><div style="position:absolute;left:221px;top:478px;width:53px;height:22px;line-height:22px;text-align:center;font-size:11.3px;font-weight:bold;color:#000">T°</div><div style="position:absolute;left:274px;top:478px;width:80px;height:23px;background:#ffffff;border-bottom:1px solid #d0d0d0;box-sizing:border-box"></div><div style="position:absolute;left:274px;top:478px;width:79px;height:22px;line-height:22px;text-align:right;font-size:11.3px;color:#000">3386</div><div style="position:absolute;left:222px;top:501px;width:52px;height:23px;background:#f0f0f0;border-bottom:1px solid #6d6d6d;border-right:1px solid #6d6d6d;box-sizing:border-box"></div><div style="position:absolute;left:221px;top:501px;width:53px;height:22px;line-height:22px;text-align:center;font-size:11.3px;font-weight:bold;color:#000">X</div><div style="position:absolute;left:274px;top:501px;width:80px;height:23px;background:#e0e0e0;border-bottom:1px solid #d0d0d0;box-sizing:border-box"></div><div style="position:absolute;left:274px;top:501px;width:79px;height:22px;line-height:22px;text-align:right;font-size:11.3px;color:#000">10.39</div><div style="position:absolute;left:222px;top:524px;width:52px;height:23px;background:#f0f0f0;border-bottom:1px solid #6d6d6d;border-right:1px solid #6d6d6d;box-sizing:border-box"></div><div style="position:absolute;left:221px;top:524px;width:53px;height:22px;line-height:22px;text-align:center;font-size:11.3px;font-weight:bold;color:#000">Y</div><div style="position:absolute;left:274px;top:524px;width:80px;height:23px;background:#e0e0e0;border-bottom:1px solid #d0d0d0;box-sizing:border-box"></div><div style="position:absolute;left:274px;top:524px;width:79px;height:22px;line-height:22px;text-align:right;font-size:11.3px;color:#000">9.40</div><div style="position:absolute;left:222px;top:547px;width:52px;height:23px;background:#f0f0f0;border-bottom:1px solid #6d6d6d;border-right:1px solid #6d6d6d;box-sizing:border-box"></div><div style="position:absolute;left:221px;top:547px;width:53px;height:22px;line-height:22px;text-align:center;font-size:11.3px;font-weight:bold;color:#000">Z</div><div style="position:absolute;left:274px;top:547px;width:80px;height:23px;background:#e0e0e0;border-bottom:1px solid #d0d0d0;box-sizing:border-box"></div><div style="position:absolute;left:274px;top:547px;width:79px;height:22px;line-height:22px;text-align:right;font-size:11.3px;color:#000">6.29</div><div style="position:absolute;left:222px;top:570px;width:52px;height:23px;background:#f0f0f0;border-bottom:1px solid #6d6d6d;border-right:1px solid #6d6d6d;box-sizing:border-box"></div><div style="position:absolute;left:221px;top:570px;width:53px;height:22px;line-height:22px;text-align:center;font-size:11.3px;font-weight:bold;color:#000">R</div><div style="position:absolute;left:274px;top:570px;width:80px;height:23px;background:#ffffff;border-bottom:1px solid #d0d0d0;box-sizing:border-box"></div><div style="position:absolute;left:274px;top:570px;width:79px;height:22px;line-height:22px;text-align:right;font-size:11.3px;color:#000">12.91</div><div style="position:absolute;left:222px;top:593px;width:52px;height:23px;background:#f0f0f0;border-bottom:1px solid #6d6d6d;border-right:1px solid #6d6d6d;box-sizing:border-box"></div><div style="position:absolute;left:221px;top:593px;width:53px;height:22px;line-height:22px;text-align:center;font-size:11.3px;font-weight:bold;color:#000">G</div><div style="position:absolute;left:274px;top:593px;width:80px;height:23px;background:#ffffff;border-bottom:1px solid #d0d0d0;box-sizing:border-box"></div><div style="position:absolute;left:274px;top:593px;width:79px;height:22px;line-height:22px;text-align:right;font-size:11.3px;color:#000">8.36</div><div style="position:absolute;left:222px;top:616px;width:52px;height:23px;background:#f0f0f0;border-bottom:1px solid #6d6d6d;border-right:1px solid #6d6d6d;box-sizing:border-box"></div><div style="position:absolute;left:221px;top:616px;width:53px;height:22px;line-height:22px;text-align:center;font-size:11.3px;font-weight:bold;color:#000">B</div><div style="position:absolute;left:274px;top:616px;width:80px;height:23px;background:#ffffff;border-bottom:1px solid #d0d0d0;box-sizing:border-box"></div><div style="position:absolute;left:274px;top:616px;width:79px;height:22px;line-height:22px;text-align:right;font-size:11.3px;color:#000">5.71</div><div style="position:absolute;left:222px;top:639px;width:52px;height:23px;background:#f0f0f0;border-bottom:1px solid #6d6d6d;border-right:1px solid #6d6d6d;box-sizing:border-box"></div><div style="position:absolute;left:221px;top:639px;width:53px;height:22px;line-height:22px;text-align:center;font-size:11.3px;font-weight:bold;color:#000">x</div><div style="position:absolute;left:274px;top:639px;width:80px;height:23px;background:#e0e0e0;border-bottom:1px solid #d0d0d0;box-sizing:border-box"></div><div style="position:absolute;left:274px;top:639px;width:79px;height:22px;line-height:22px;text-align:right;font-size:11.3px;color:#000">0.398</div><div style="position:absolute;left:222px;top:662px;width:52px;height:23px;background:#f0f0f0;border-bottom:1px solid #6d6d6d;border-right:1px solid #6d6d6d;box-sizing:border-box"></div><div style="position:absolute;left:221px;top:662px;width:53px;height:22px;line-height:22px;text-align:center;font-size:11.3px;font-weight:bold;color:#000">y</div><div style="position:absolute;left:274px;top:662px;width:80px;height:23px;background:#e0e0e0;border-bottom:1px solid #d0d0d0;box-sizing:border-box"></div><div style="position:absolute;left:274px;top:662px;width:79px;height:22px;line-height:22px;text-align:right;font-size:11.3px;color:#000">0.360</div><div style="position:absolute;left:222px;top:685px;width:52px;height:23px;background:#f0f0f0;border-bottom:1px solid #6d6d6d;border-right:1px solid #6d6d6d;box-sizing:border-box"></div><div style="position:absolute;left:221px;top:685px;width:53px;height:22px;line-height:22px;text-align:center;font-size:11.3px;font-weight:bold;color:#000">Y</div><div style="position:absolute;left:274px;top:685px;width:80px;height:23px;background:#e0e0e0;border-bottom:1px solid #d0d0d0;box-sizing:border-box"></div><div style="position:absolute;left:274px;top:685px;width:79px;height:22px;line-height:22px;text-align:right;font-size:11.3px;color:#000">9.397</div><div style="position:absolute;left:222px;top:708px;width:52px;height:23px;background:#f0f0f0;border-bottom:1px solid #6d6d6d;border-right:1px solid #6d6d6d;box-sizing:border-box"></div><div style="position:absolute;left:221px;top:708px;width:53px;height:22px;line-height:22px;text-align:center;font-size:11.3px;font-weight:bold;color:#000">x</div><div style="position:absolute;left:274px;top:708px;width:80px;height:23px;background:#ffffff;border-bottom:1px solid #d0d0d0;box-sizing:border-box"></div><div style="position:absolute;left:274px;top:708px;width:79px;height:22px;line-height:22px;text-align:right;font-size:11.3px;color:#000">0.398</div><div style="position:absolute;left:222px;top:731px;width:52px;height:23px;background:#f0f0f0;border-bottom:1px solid #6d6d6d;border-right:1px solid #6d6d6d;box-sizing:border-box"></div><div style="position:absolute;left:221px;top:731px;width:53px;height:22px;line-height:22px;text-align:center;font-size:11.3px;font-weight:bold;color:#000">y</div><div style="position:absolute;left:274px;top:731px;width:80px;height:23px;background:#ffffff;border-bottom:1px solid #d0d0d0;box-sizing:border-box"></div><div style="position:absolute;left:274px;top:731px;width:79px;height:22px;line-height:22px;text-align:right;font-size:11.3px;color:#000">0.360</div><div style="position:absolute;left:222px;top:754px;width:52px;height:23px;background:#f0f0f0;border-bottom:1px solid #6d6d6d;border-right:1px solid #6d6d6d;box-sizing:border-box"></div><div style="position:absolute;left:221px;top:754px;width:53px;height:22px;line-height:22px;text-align:center;font-size:11.3px;font-weight:bold;color:#000">z</div><div style="position:absolute;left:274px;top:754px;width:80px;height:23px;background:#ffffff;border-bottom:1px solid #d0d0d0;box-sizing:border-box"></div><div style="position:absolute;left:274px;top:754px;width:79px;height:22px;line-height:22px;text-align:right;font-size:11.3px;color:#000">0.241</div><div style="position:absolute;left:222px;top:777px;width:52px;height:23px;background:#f0f0f0;border-bottom:1px solid #6d6d6d;border-right:1px solid #6d6d6d;box-sizing:border-box"></div><div style="position:absolute;left:221px;top:777px;width:53px;height:22px;line-height:22px;text-align:center;font-size:11.3px;font-weight:bold;color:#000">L</div><div style="position:absolute;left:274px;top:777px;width:80px;height:23px;background:#e0e0e0;border-bottom:1px solid #d0d0d0;box-sizing:border-box"></div><div style="position:absolute;left:274px;top:777px;width:79px;height:22px;line-height:22px;text-align:right;font-size:11.3px;color:#000">37.33</div><div style="position:absolute;left:222px;top:800px;width:52px;height:23px;background:#f0f0f0;border-bottom:1px solid #6d6d6d;border-right:1px solid #6d6d6d;box-sizing:border-box"></div><div style="position:absolute;left:221px;top:800px;width:53px;height:22px;line-height:22px;text-align:center;font-size:11.3px;font-weight:bold;color:#000">a</div><div style="position:absolute;left:274px;top:800px;width:80px;height:23px;background:#e0e0e0;border-bottom:1px solid #d0d0d0;box-sizing:border-box"></div><div style="position:absolute;left:274px;top:800px;width:79px;height:22px;line-height:22px;text-align:right;font-size:11.3px;color:#000">11.92</div><div style="position:absolute;left:222px;top:823px;width:52px;height:23px;background:#f0f0f0;border-bottom:1px solid #6d6d6d;border-right:1px solid #6d6d6d;box-sizing:border-box"></div><div style="position:absolute;left:221px;top:823px;width:53px;height:22px;line-height:22px;text-align:center;font-size:11.3px;font-weight:bold;color:#000">b</div><div style="position:absolute;left:274px;top:823px;width:80px;height:23px;background:#e0e0e0;border-bottom:1px solid #d0d0d0;box-sizing:border-box"></div><div style="position:absolute;left:274px;top:823px;width:79px;height:22px;line-height:22px;text-align:right;font-size:11.3px;color:#000">13.75</div><div style="position:absolute;left:222px;top:846px;width:52px;height:23px;background:#f0f0f0;border-bottom:1px solid #6d6d6d;border-right:1px solid #6d6d6d;box-sizing:border-box"></div><div style="position:absolute;left:221px;top:846px;width:53px;height:22px;line-height:22px;text-align:center;font-size:11.3px;font-weight:bold;color:#000">L</div><div style="position:absolute;left:274px;top:846px;width:80px;height:23px;background:#ffffff;border-bottom:1px solid #d0d0d0;box-sizing:border-box"></div><div style="position:absolute;left:274px;top:846px;width:79px;height:22px;line-height:22px;text-align:right;font-size:11.3px;color:#000">37.33</div><div style="position:absolute;left:222px;top:869px;width:52px;height:23px;background:#f0f0f0;border-bottom:1px solid #6d6d6d;border-right:1px solid #6d6d6d;box-sizing:border-box"></div><div style="position:absolute;left:221px;top:869px;width:53px;height:22px;line-height:22px;text-align:center;font-size:11.3px;font-weight:bold;color:#000">C</div><div style="position:absolute;left:274px;top:869px;width:80px;height:23px;background:#ffffff;border-bottom:1px solid #d0d0d0;box-sizing:border-box"></div><div style="position:absolute;left:274px;top:869px;width:79px;height:22px;line-height:22px;text-align:right;font-size:11.3px;color:#000">18.19</div><div style="position:absolute;left:222px;top:892px;width:52px;height:23px;background:#f0f0f0;border-bottom:1px solid #6d6d6d;border-right:1px solid #6d6d6d;box-sizing:border-box"></div><div style="position:absolute;left:221px;top:892px;width:53px;height:22px;line-height:22px;text-align:center;font-size:11.3px;font-weight:bold;color:#000">H</div><div style="position:absolute;left:274px;top:892px;width:80px;height:23px;background:#ffffff;border-bottom:1px solid #d0d0d0;box-sizing:border-box"></div><div style="position:absolute;left:274px;top:892px;width:79px;height:22px;line-height:22px;text-align:right;font-size:11.3px;color:#000">49.08</div><div style="position:absolute;left:222px;top:915px;width:52px;height:23px;background:#f0f0f0;border-bottom:1px solid #6d6d6d;border-right:1px solid #6d6d6d;box-sizing:border-box"></div><div style="position:absolute;left:221px;top:915px;width:53px;height:22px;line-height:22px;text-align:center;font-size:11.3px;font-weight:bold;color:#000">L</div><div style="position:absolute;left:274px;top:915px;width:80px;height:23px;background:#e0e0e0;border-bottom:1px solid #d0d0d0;box-sizing:border-box"></div><div style="position:absolute;left:274px;top:915px;width:79px;height:22px;line-height:22px;text-align:right;font-size:11.3px;color:#000">10.06</div><div style="position:absolute;left:222px;top:938px;width:52px;height:23px;background:#f0f0f0;border-bottom:1px solid #6d6d6d;border-right:1px solid #6d6d6d;box-sizing:border-box"></div><div style="position:absolute;left:221px;top:938px;width:53px;height:22px;line-height:22px;text-align:center;font-size:11.3px;font-weight:bold;color:#000">M</div><div style="position:absolute;left:274px;top:938px;width:80px;height:23px;background:#e0e0e0;border-bottom:1px solid #d0d0d0;box-sizing:border-box"></div><div style="position:absolute;left:274px;top:938px;width:79px;height:22px;line-height:22px;text-align:right;font-size:11.3px;color:#000">8.82</div><div style="position:absolute;left:222px;top:961px;width:52px;height:23px;background:#f0f0f0;border-bottom:1px solid #6d6d6d;border-right:1px solid #6d6d6d;box-sizing:border-box"></div><div style="position:absolute;left:221px;top:961px;width:53px;height:22px;line-height:22px;text-align:center;font-size:11.3px;font-weight:bold;color:#000">S</div><div style="position:absolute;left:274px;top:961px;width:80px;height:23px;background:#e0e0e0;border-bottom:1px solid #d0d0d0;box-sizing:border-box"></div><div style="position:absolute;left:274px;top:961px;width:79px;height:22px;line-height:22px;text-align:right;font-size:11.3px;color:#000">6.09</div><svg style="position:absolute;left:358px;top:436px" width="12" height="10"><path d="M1 8 L6 2 L11 8 Z" fill="#a8a8a8"/></svg><svg style="position:absolute;left:358px;top:994px" width="12" height="10"><path d="M1 2 L6 8 L11 2 Z" fill="#a8a8a8"/></svg><div style="position:absolute;left:396px;top:409px;width:302px;height:22px;background:#fff;border-top:2px solid #6d6d6d;border-left:2px solid #6d6d6d;border-bottom:1px solid #e0e0e0;border-right:1px solid #e0e0e0;box-sizing:border-box"></div><div style="position:absolute;left:400px;top:413px;width:280px;height:16px;background:#0078d7"></div><div style="position:absolute;left:401px;top:413px;white-space:pre;font-size:12.6px;letter-spacing:0.8px;color:#fff;line-height:16px">Target - CIE</div><div style="position:absolute;left:680px;top:412px;width:16px;height:17px;background:#f0f0f0;border-right:1px solid #8a8a8a;border-bottom:1px solid #8a8a8a;border-left:1px solid #fff;border-top:1px solid #fff;box-sizing:border-box"></div><svg style="position:absolute;left:684px;top:418px" width="9" height="6"><path d="M0 0 H8 L4 5 Z" fill="#000"/></svg><div style="position:absolute;left:397px;top:439px;width:750px;height:571px;background:#000"></div><div style="position:absolute;left:398px;top:440px;width:748px;height:569px;background:conic-gradient(from 0deg at 50% 50%, #4cff00 0deg, #a8e400 28deg, #ffc000 52deg, #ff6000 72deg, #ff0c00 92deg, #ff0050 112deg, #ff0090 128deg, #c000b0 155deg, #8000c0 180deg, #4000e0 205deg, #0000ff 232deg, #0050e0 252deg, #0088b8 270deg, #00c0a0 290deg, #00ff80 307deg, #20ff40 335deg, #4cff00 360deg)"></div><svg style="position:absolute;left:397px;top:439px" width="750" height="571"><g transform="translate(-397,-439)">
<rect x="510.5" y="524.5" width="523" height="399" rx="8" fill="#776e62" stroke="#fff" stroke-width="1"/>
<line x1="772.5" y1="498" x2="772.5" y2="952" stroke="#000"/><line x1="772.5" y1="498" x2="772.5" y2="952" stroke="#fff" stroke-dasharray="3,3"/>
<line x1="477" y1="724.5" x2="1067" y2="724.5" stroke="#000"/><line x1="477" y1="724.5" x2="1067" y2="724.5" stroke="#fff" stroke-dasharray="3,3"/>
<ellipse cx="772.5" cy="724" rx="148.5" ry="113.5" fill="none" stroke="#000"/><ellipse cx="772.5" cy="724" rx="148.5" ry="113.5" fill="none" stroke="#fff" stroke-dasharray="3,3"/>
<path d="M921.7 629 L960 600.3 L983.3 618.3 L945 645 Z" fill="#00ff00" stroke="#ffff00" stroke-width="1"/>
<path d="M948.3 651.7 L985.8 625 L985.8 648.3 L948.3 676.7 Z" fill="#0000ff" stroke="#ffff00" stroke-width="1"/>
<path d="M986.7 619.2 L1018.3 610 L986.7 633.3 Z" fill="#ff0000" stroke="#ffff00" stroke-width="1"/>
<line x1="838" y1="730" x2="986" y2="621" stroke="#ffff00" stroke-width="5.5"/>
<line x1="838" y1="728.5" x2="985" y2="619.5" stroke="#800000" stroke-width="2"/>
<path d="M805.8 756.7 L824.2 710 L865.8 742 Z" fill="#ffff00" stroke="#ffff00" stroke-width="1"/>
<path d="M828 714 L840 730 L860 738 L835 735 Z" fill="#c8c8c8"/>
<path d="M810 755 L835 735 L863 742.5 Z" fill="#800000"/>
</g></svg><div style="position:absolute;left:1146px;top:439px;width:748px;height:569px;background:#fff"></div><div style="position:absolute;left:1146px;top:439px;width:745px;height:567px;background:#9a9a9a"></div><div style="position:absolute;left:1150px;top:443px;width:740px;height:562px;background:#02090c"></div><svg style="position:absolute;left:1150px;top:443px" width="740" height="562"><g transform="translate(-1150,-443)"><defs><clipPath id="loc"><path d="M1342.0 966.0 C1339.3 964.1 1332.5 961.4 1326.0 954.5 C1319.5 947.6 1311.3 937.9 1302.8 924.4 C1294.3 910.9 1283.9 892.0 1275.0 873.5 C1266.1 855.0 1256.8 832.6 1249.5 813.3 C1242.2 794.0 1236.0 776.3 1231.0 757.8 C1226.0 739.3 1222.2 722.3 1219.4 702.2 C1216.6 682.1 1214.7 656.7 1213.9 637.4 C1213.1 618.1 1213.9 601.2 1214.8 586.5 C1215.7 571.8 1216.7 559.4 1219.4 549.4 C1222.1 539.4 1225.6 532.7 1231.0 526.3 C1236.4 519.9 1243.1 514.9 1252.0 511.0 C1260.9 507.1 1270.5 502.1 1284.3 503.1 C1298.1 504.1 1315.7 508.7 1335.0 517.0 C1354.3 525.3 1384.4 544.1 1400.3 552.8 C1416.1 561.6 1420.2 563.9 1430.1 569.7 C1439.9 575.5 1449.7 581.5 1459.5 587.6 C1469.3 593.7 1479.1 600.0 1488.9 606.4 C1498.7 612.7 1508.6 619.2 1518.4 625.7 C1528.2 632.1 1537.9 638.7 1547.7 645.2 C1557.4 651.8 1567.2 658.3 1576.8 664.8 C1586.4 671.3 1596.0 677.8 1605.4 684.2 C1614.7 690.5 1624.0 696.9 1633.1 703.0 C1642.1 709.2 1651.1 715.2 1659.7 721.1 C1668.3 726.9 1676.7 732.6 1684.7 738.0 C1692.7 743.4 1700.4 748.7 1707.5 753.6 C1714.6 758.4 1721.1 762.8 1727.3 767.0 C1733.5 771.2 1739.4 775.3 1744.8 778.9 C1750.1 782.5 1754.9 785.7 1759.3 788.6 C1763.6 791.6 1767.5 794.2 1771.0 796.6 C1774.5 799.1 1777.6 801.1 1780.4 803.0 C1783.2 805.0 1785.6 806.6 1787.9 808.1 C1790.1 809.6 1792.1 810.9 1793.9 812.2 C1795.7 813.4 1797.4 814.6 1798.9 815.6 C1800.4 816.6 1801.8 817.6 1803.0 818.4 C1804.3 819.2 1805.8 820.2 1806.3 820.6 Z"/></clipPath><linearGradient id="wl" gradientUnits="userSpaceOnUse" x1="1260" y1="500" x2="1340" y2="960"><stop offset="0" stop-color="#18c480"/><stop offset="0.45" stop-color="#00c0a8"/><stop offset="0.75" stop-color="#0098c0"/><stop offset="1" stop-color="#0028d8"/></linearGradient><linearGradient id="wb" gradientUnits="userSpaceOnUse" x1="1340" y1="960" x2="1800" y2="820"><stop offset="0" stop-color="#3000d8"/><stop offset="0.4" stop-color="#b000b0"/><stop offset="0.75" stop-color="#d00080"/><stop offset="1" stop-color="#d01040"/></linearGradient><linearGradient id="wt" gradientUnits="userSpaceOnUse" x1="1420" y1="570" x2="1800" y2="810"><stop offset="0" stop-color="#20c040"/><stop offset="0.35" stop-color="#a8c800"/><stop offset="0.55" stop-color="#e0a800"/><stop offset="0.8" stop-color="#e05000"/><stop offset="1" stop-color="#d81020"/></linearGradient></defs><g clip-path="url(#loc)"><polygon points="1334.8,942.3 1429.4,588.9 1391.4,443 1150,443 1150,1005 1334.8,1005" fill="url(#wl)"/><polygon points="1334.8,942.3 1770.9,796.5 1890,806.5 1890,1005 1314.8,1005" fill="url(#wb)"/><polygon points="1429.4,588.9 1770.9,796.5 1890,806.5 1890,443 1387.4,443 1427.4,588.9" fill="url(#wt)"/></g><path d="M1342.0 966.0 C1339.3 964.1 1332.5 961.4 1326.0 954.5 C1319.5 947.6 1311.3 937.9 1302.8 924.4 C1294.3 910.9 1283.9 892.0 1275.0 873.5 C1266.1 855.0 1256.8 832.6 1249.5 813.3 C1242.2 794.0 1236.0 776.3 1231.0 757.8 C1226.0 739.3 1222.2 722.3 1219.4 702.2 C1216.6 682.1 1214.7 656.7 1213.9 637.4 C1213.1 618.1 1213.9 601.2 1214.8 586.5 C1215.7 571.8 1216.7 559.4 1219.4 549.4 C1222.1 539.4 1225.6 532.7 1231.0 526.3 C1236.4 519.9 1243.1 514.9 1252.0 511.0 C1260.9 507.1 1270.5 502.1 1284.3 503.1 C1298.1 504.1 1315.7 508.7 1335.0 517.0 C1354.3 525.3 1384.4 544.1 1400.3 552.8 C1416.1 561.6 1420.2 563.9 1430.1 569.7 C1439.9 575.5 1449.7 581.5 1459.5 587.6 C1469.3 593.7 1479.1 600.0 1488.9 606.4 C1498.7 612.7 1508.6 619.2 1518.4 625.7 C1528.2 632.1 1537.9 638.7 1547.7 645.2 C1557.4 651.8 1567.2 658.3 1576.8 664.8 C1586.4 671.3 1596.0 677.8 1605.4 684.2 C1614.7 690.5 1624.0 696.9 1633.1 703.0 C1642.1 709.2 1651.1 715.2 1659.7 721.1 C1668.3 726.9 1676.7 732.6 1684.7 738.0 C1692.7 743.4 1700.4 748.7 1707.5 753.6 C1714.6 758.4 1721.1 762.8 1727.3 767.0 C1733.5 771.2 1739.4 775.3 1744.8 778.9 C1750.1 782.5 1754.9 785.7 1759.3 788.6 C1763.6 791.6 1767.5 794.2 1771.0 796.6 C1774.5 799.1 1777.6 801.1 1780.4 803.0 C1783.2 805.0 1785.6 806.6 1787.9 808.1 C1790.1 809.6 1792.1 810.9 1793.9 812.2 C1795.7 813.4 1797.4 814.6 1798.9 815.6 C1800.4 816.6 1801.8 817.6 1803.0 818.4 C1804.3 819.2 1805.8 820.2 1806.3 820.6 Z" fill="none" stroke="#e8a010" stroke-width="1.2"/><line x1="1211.3" y1="443" x2="1211.3" y2="1005" stroke="#474747" stroke-width="1"/><line x1="1293.6" y1="443" x2="1293.6" y2="1005" stroke="#474747" stroke-width="1"/><line x1="1375.9" y1="443" x2="1375.9" y2="1005" stroke="#474747" stroke-width="1"/><line x1="1458.2" y1="443" x2="1458.2" y2="1005" stroke="#474747" stroke-width="1"/><line x1="1540.5" y1="443" x2="1540.5" y2="1005" stroke="#474747" stroke-width="1"/><line x1="1622.8" y1="443" x2="1622.8" y2="1005" stroke="#474747" stroke-width="1"/><line x1="1705.1" y1="443" x2="1705.1" y2="1005" stroke="#474747" stroke-width="1"/><line x1="1787.4" y1="443" x2="1787.4" y2="1005" stroke="#474747" stroke-width="1"/><line x1="1150" y1="976.0" x2="1890" y2="976.0" stroke="#474747" stroke-width="1"/><line x1="1150" y1="919.9" x2="1890" y2="919.9" stroke="#474747" stroke-width="1"/><line x1="1150" y1="863.8" x2="1890" y2="863.8" stroke="#474747" stroke-width="1"/><line x1="1150" y1="807.7" x2="1890" y2="807.7" stroke="#474747" stroke-width="1"/><line x1="1150" y1="751.6" x2="1890" y2="751.6" stroke="#474747" stroke-width="1"/><line x1="1150" y1="695.5" x2="1890" y2="695.5" stroke="#474747" stroke-width="1"/><line x1="1150" y1="639.4" x2="1890" y2="639.4" stroke="#474747" stroke-width="1"/><line x1="1150" y1="583.3" x2="1890" y2="583.3" stroke="#474747" stroke-width="1"/><line x1="1150" y1="527.2" x2="1890" y2="527.2" stroke="#474747" stroke-width="1"/><line x1="1150" y1="471.1" x2="1890" y2="471.1" stroke="#474747" stroke-width="1"/><defs><linearGradient id="tg0" gradientUnits="userSpaceOnUse" x1="1770.9" y1="796.5" x2="1400.4" y2="697.2"><stop offset="0" stop-color="#ff0000"/><stop offset="0.688" stop-color="#ff0000"/><stop offset="1" stop-color="#000"/></linearGradient><linearGradient id="tg1" gradientUnits="userSpaceOnUse" x1="1429.4" y1="588.9" x2="1526.2" y2="878.3"><stop offset="0" stop-color="#00ff00"/><stop offset="0.688" stop-color="#00ff00"/><stop offset="1" stop-color="#000"/></linearGradient><linearGradient id="tg2" gradientUnits="userSpaceOnUse" x1="1334.8" y1="942.3" x2="1517.1" y2="642.2"><stop offset="0" stop-color="#0000ff"/><stop offset="0.688" stop-color="#0000ff"/><stop offset="1" stop-color="#000"/></linearGradient></defs><g style="isolation:isolate" opacity="1.0"><polygon points="1770.9,796.5 1429.4,588.9 1334.8,942.3" fill="#000"/><polygon points="1770.9,796.5 1429.4,588.9 1334.8,942.3" fill="url(#tg0)" style="mix-blend-mode:screen"/><polygon points="1770.9,796.5 1429.4,588.9 1334.8,942.3" fill="url(#tg1)" style="mix-blend-mode:screen"/><polygon points="1770.9,796.5 1429.4,588.9 1334.8,942.3" fill="url(#tg2)" style="mix-blend-mode:screen"/></g></g></svg><canvas id="ciecv" width="740" height="562" style="position:absolute;left:1150px;top:443px"></canvas>
<script>
(function(){
var cv=document.getElementById('ciecv'); if(!cv||!cv.getContext) return;
var W=740,H=562, off=document.createElement('canvas'); off.width=W; off.height=H;
var oc=off.getContext('2d'), img=oc.createImageData(W,H), D=img.data, img2=oc.createImageData(W,H), D2=img2.data;
var T=[[620.94,353.48],[279.39,145.91],[184.75,499.34]];
function side(ax,ay,bx,by,px,py){return (bx-ax)*(py-ay)-(by-ay)*(px-ax);}
var g=0.45454545454545453;
for(var py=0;py<H;py++){
 var y=(976-(py+443.5))/561;
 for(var px=0;px<W;px++){
  var x=(px+1150.5-1211.3)/823, k=(py*W+px)*4;
  var yy=Math.max(y,0.004);
  var X=x/yy, Z=(1-x-yy)/yy;
  var r=3.2406*X-1.5372-0.4986*Z, gg=-0.9689*X+1.8758+0.0415*Z, b=0.0557*X-0.2040+1.0570*Z;
  var m=Math.min(r,gg,b); if(m<0){r-=m;gg-=m;b-=m;}
  var M=Math.max(r,gg,b); if(M<=0)M=1;
  r=Math.pow(r/M,g); gg=Math.pow(gg/M,g); b=Math.pow(b/M,g);
  var s1=side(T[0][0],T[0][1],T[1][0],T[1][1],px+.5,py+.5), s2=side(T[1][0],T[1][1],T[2][0],T[2][1],px+.5,py+.5), s3=side(T[2][0],T[2][1],T[0][0],T[0][1],px+.5,py+.5);
  var inside=(s1>=-400&&s2>=-400&&s3>=-400)||(s1<=400&&s2<=400&&s3<=400);
  var r0=r,g0=gg,b0=b;
  {var dx=px+1150-1467, dy=py+443-793; var w=0.6*Math.exp(-(dx*dx+dy*dy)/(2*70*70)); r=r*(1-w)+w; gg=gg*(1-w)+w; b=b*(1-w)+w;}
  D[k]=r0*255*0.78; D[k+1]=g0*255*0.78; D[k+2]=b0*255*0.78; D[k+3]=255;
  if(inside){D2[k]=r*255; D2[k+1]=gg*255; D2[k+2]=b*255; D2[k+3]=255;}
 }
}
oc.putImageData(img,0,0);
var off2=document.createElement('canvas'); off2.width=W; off2.height=H; var oc2=off2.getContext('2d'); oc2.putImageData(img2,0,0);
var ctx=cv.getContext('2d');
ctx.save();
ctx.setTransform(1,0,0,1,-1150,-443);
ctx.clip(new Path2D("M1342.0 966.0 C1339.3 964.1 1332.5 961.4 1326.0 954.5 C1319.5 947.6 1311.3 937.9 1302.8 924.4 C1294.3 910.9 1283.9 892.0 1275.0 873.5 C1266.1 855.0 1256.8 832.6 1249.5 813.3 C1242.2 794.0 1236.0 776.3 1231.0 757.8 C1226.0 739.3 1222.2 722.3 1219.4 702.2 C1216.6 682.1 1214.7 656.7 1213.9 637.4 C1213.1 618.1 1213.9 601.2 1214.8 586.5 C1215.7 571.8 1216.7 559.4 1219.4 549.4 C1222.1 539.4 1225.6 532.7 1231.0 526.3 C1236.4 519.9 1243.1 514.9 1252.0 511.0 C1260.9 507.1 1270.5 502.1 1284.3 503.1 C1298.1 504.1 1315.7 508.7 1335.0 517.0 C1354.3 525.3 1384.4 544.1 1400.3 552.8 C1416.1 561.6 1420.2 563.9 1430.1 569.7 C1439.9 575.5 1449.7 581.5 1459.5 587.6 C1469.3 593.7 1479.1 600.0 1488.9 606.4 C1498.7 612.7 1508.6 619.2 1518.4 625.7 C1528.2 632.1 1537.9 638.7 1547.7 645.2 C1557.4 651.8 1567.2 658.3 1576.8 664.8 C1586.4 671.3 1596.0 677.8 1605.4 684.2 C1614.7 690.5 1624.0 696.9 1633.1 703.0 C1642.1 709.2 1651.1 715.2 1659.7 721.1 C1668.3 726.9 1676.7 732.6 1684.7 738.0 C1692.7 743.4 1700.4 748.7 1707.5 753.6 C1714.6 758.4 1721.1 762.8 1727.3 767.0 C1733.5 771.2 1739.4 775.3 1744.8 778.9 C1750.1 782.5 1754.9 785.7 1759.3 788.6 C1763.6 791.6 1767.5 794.2 1771.0 796.6 C1774.5 799.1 1777.6 801.1 1780.4 803.0 C1783.2 805.0 1785.6 806.6 1787.9 808.1 C1790.1 809.6 1792.1 810.9 1793.9 812.2 C1795.7 813.4 1797.4 814.6 1798.9 815.6 C1800.4 816.6 1801.8 817.6 1803.0 818.4 C1804.3 819.2 1805.8 820.2 1806.3 820.6 Z"));
ctx.setTransform(1,0,0,1,0,0);
ctx.drawImage(off,0,0);
ctx.restore();
ctx.fillStyle='#474747';
var gx=[61,143,225,308,390,472,555,637], gy=[533,476,420,364,308,252,196,140,84,28];
for(var i=0;i<gx.length;i++) ctx.fillRect(gx[i],0,1,H);
for(var i=0;i<gy.length;i++) ctx.fillRect(0,gy[i],W,1);
ctx.save();
ctx.beginPath(); ctx.moveTo(T[0][0],T[0][1]); ctx.lineTo(T[1][0],T[1][1]); ctx.lineTo(T[2][0],T[2][1]); ctx.closePath(); ctx.clip();
ctx.drawImage(off2,0,0);
ctx.restore();
})();
</script><svg style="position:absolute;left:1150px;top:443px" width="740" height="562"><g transform="translate(-1150,-443)"><path d="M1342.0 966.0 C1339.3 964.1 1332.5 961.4 1326.0 954.5 C1319.5 947.6 1311.3 937.9 1302.8 924.4 C1294.3 910.9 1283.9 892.0 1275.0 873.5 C1266.1 855.0 1256.8 832.6 1249.5 813.3 C1242.2 794.0 1236.0 776.3 1231.0 757.8 C1226.0 739.3 1222.2 722.3 1219.4 702.2 C1216.6 682.1 1214.7 656.7 1213.9 637.4 C1213.1 618.1 1213.9 601.2 1214.8 586.5 C1215.7 571.8 1216.7 559.4 1219.4 549.4 C1222.1 539.4 1225.6 532.7 1231.0 526.3 C1236.4 519.9 1243.1 514.9 1252.0 511.0 C1260.9 507.1 1270.5 502.1 1284.3 503.1 C1298.1 504.1 1315.7 508.7 1335.0 517.0 C1354.3 525.3 1384.4 544.1 1400.3 552.8 C1416.1 561.6 1420.2 563.9 1430.1 569.7 C1439.9 575.5 1449.7 581.5 1459.5 587.6 C1469.3 593.7 1479.1 600.0 1488.9 606.4 C1498.7 612.7 1508.6 619.2 1518.4 625.7 C1528.2 632.1 1537.9 638.7 1547.7 645.2 C1557.4 651.8 1567.2 658.3 1576.8 664.8 C1586.4 671.3 1596.0 677.8 1605.4 684.2 C1614.7 690.5 1624.0 696.9 1633.1 703.0 C1642.1 709.2 1651.1 715.2 1659.7 721.1 C1668.3 726.9 1676.7 732.6 1684.7 738.0 C1692.7 743.4 1700.4 748.7 1707.5 753.6 C1714.6 758.4 1721.1 762.8 1727.3 767.0 C1733.5 771.2 1739.4 775.3 1744.8 778.9 C1750.1 782.5 1754.9 785.7 1759.3 788.6 C1763.6 791.6 1767.5 794.2 1771.0 796.6 C1774.5 799.1 1777.6 801.1 1780.4 803.0 C1783.2 805.0 1785.6 806.6 1787.9 808.1 C1790.1 809.6 1792.1 810.9 1793.9 812.2 C1795.7 813.4 1797.4 814.6 1798.9 815.6 C1800.4 816.6 1801.8 817.6 1803.0 818.4 C1804.3 819.2 1805.8 820.2 1806.3 820.6 Z" fill="none" stroke="#e8a010" stroke-width="1.2"/><text x="1152" y="915.9" font-family="Liberation Serif" font-size="13.4" fill="#fff">0.1</text><text x="1152" y="859.8" font-family="Liberation Serif" font-size="13.4" fill="#fff">0.2</text><text x="1152" y="803.7" font-family="Liberation Serif" font-size="13.4" fill="#fff">0.3</text><text x="1152" y="747.6" font-family="Liberation Serif" font-size="13.4" fill="#fff">0.4</text><text x="1152" y="691.5" font-family="Liberation Serif" font-size="13.4" fill="#fff">0.5</text><text x="1152" y="635.4" font-family="Liberation Serif" font-size="13.4" fill="#fff">0.6</text><text x="1152" y="579.3" font-family="Liberation Serif" font-size="13.4" fill="#fff">0.7</text><text x="1152" y="523.2" font-family="Liberation Serif" font-size="13.4" fill="#fff">0.8</text><text x="1295.6" y="1001" font-family="Liberation Serif" font-size="13.4" fill="#fff">0.1</text><text x="1377.9" y="1001" font-family="Liberation Serif" font-size="13.4" fill="#fff">0.2</text><text x="1460.2" y="1001" font-family="Liberation Serif" font-size="13.4" fill="#fff">0.3</text><text x="1542.5" y="1001" font-family="Liberation Serif" font-size="13.4" fill="#fff">0.4</text><text x="1624.8" y="1001" font-family="Liberation Serif" font-size="13.4" fill="#fff">0.5</text><text x="1707.1" y="1001" font-family="Liberation Serif" font-size="13.4" fill="#fff">0.6</text><text x="1789.4" y="1001" font-family="Liberation Serif" font-size="13.4" fill="#fff">0.7</text><line x1="1468.5" y1="443" x2="1468.5" y2="1005" stroke="#ddd" stroke-dasharray="3,3" stroke-width="1"/><line x1="1150" y1="791.5" x2="1890" y2="791.5" stroke="#ddd" stroke-dasharray="3,3" stroke-width="1"/><line x1="1287" y1="505" x2="1303" y2="480" stroke="#aaa" stroke-width="0.8"/><text x="1304" y="487" font-family="Liberation Serif" font-size="10.9" fill="#fff">520 nm</text><line x1="1413" y1="555" x2="1427" y2="531" stroke="#aaa" stroke-width="0.8"/><text x="1427" y="538" font-family="Liberation Serif" font-size="10.9" fill="#fff">540 nm</text><line x1="1523" y1="633" x2="1540" y2="605" stroke="#aaa" stroke-width="0.8"/><text x="1540" y="612" font-family="Liberation Serif" font-size="10.9" fill="#fff">560 nm</text><line x1="1605" y1="686" x2="1620" y2="658" stroke="#aaa" stroke-width="0.8"/><text x="1620" y="665" font-family="Liberation Serif" font-size="10.9" fill="#fff">580 nm</text><line x1="1660" y1="720" x2="1674" y2="696" stroke="#aaa" stroke-width="0.8"/><text x="1674" y="703" font-family="Liberation Serif" font-size="10.9" fill="#fff">600 nm</text><line x1="1710" y1="757" x2="1727" y2="732" stroke="#aaa" stroke-width="0.8"/><text x="1727" y="739" font-family="Liberation Serif" font-size="10.9" fill="#fff">620 nm</text><line x1="1768" y1="792" x2="1783" y2="770" stroke="#aaa" stroke-width="0.8"/><text x="1783" y="777" font-family="Liberation Serif" font-size="10.9" fill="#fff">640 nm</text><line x1="1790" y1="812" x2="1808" y2="787" stroke="#aaa" stroke-width="0.8"/><text x="1808" y="794" font-family="Liberation Serif" font-size="10.9" fill="#fff">660 nm</text><line x1="1800" y1="818" x2="1818" y2="794" stroke="#aaa" stroke-width="0.8"/><text x="1818" y="801" font-family="Liberation Serif" font-size="10.9" fill="#fff">680 nm</text><line x1="1215" y1="656" x2="1197" y2="661" stroke="#aaa" stroke-width="0.8"/><text x="1172" y="661" font-family="Liberation Serif" font-size="10.9" fill="#fff">500 nm</text><line x1="1277" y1="880" x2="1261" y2="887" stroke="#aaa" stroke-width="0.8"/><text x="1235" y="893" font-family="Liberation Serif" font-size="10.9" fill="#fff">480 nm</text><line x1="1313" y1="946" x2="1296" y2="951" stroke="#aaa" stroke-width="0.8"/><text x="1271" y="956" font-family="Liberation Serif" font-size="10.9" fill="#fff">460 nm</text><line x1="1324" y1="962" x2="1306" y2="967" stroke="#aaa" stroke-width="0.8"/><text x="1283" y="972" font-family="Liberation Serif" font-size="10.9" fill="#fff">440 nm</text><line x1="1332" y1="968" x2="1315" y2="975" stroke="#aaa" stroke-width="0.8"/><text x="1291" y="979" font-family="Liberation Serif" font-size="10.9" fill="#fff">420 nm</text><line x1="1338.2" y1="940.3" x2="1432.9" y2="592.9" stroke="#007870" stroke-width="2.5"/><polygon points="1770.9,796.5 1429.4,588.9 1334.8,942.3" fill="none" stroke="#fff" stroke-width="3.2" stroke-linejoin="miter"/><line x1="1335" y1="944" x2="1467" y2="793" stroke="#222" stroke-dasharray="3,3" stroke-width="1"/><line x1="1428" y1="588" x2="1467" y2="793" stroke="#222" stroke-dasharray="3,3" stroke-width="1"/><line x1="1770" y1="797" x2="1467" y2="793" stroke="#222" stroke-dasharray="3,3" stroke-width="1"/><line x1="1485" y1="891" x2="1467" y2="793" stroke="#222" stroke-dasharray="3,3" stroke-width="1"/><line x1="1372" y1="791" x2="1467" y2="793" stroke="#222" stroke-dasharray="3,3" stroke-width="1"/><line x1="1571" y1="674" x2="1467" y2="793" stroke="#222" stroke-dasharray="3,3" stroke-width="1"/><path d="M1417 839 Q1440 815 1467 795 L1486 781 Q1530 757 1571 746 L1595 743" fill="none" stroke="#000" stroke-width="1.5"/><circle cx="1446.7" cy="810.7" r="2.5" fill="#fff" stroke="#000" stroke-width="1"/><circle cx="1485.7" cy="781.5" r="2.5" fill="#fff" stroke="#000" stroke-width="1"/><circle cx="1571.5" cy="745.5" r="2.5" fill="#fff" stroke="#000" stroke-width="1"/><circle cx="1579" cy="747" r="2" fill="#00c000" stroke="#000" stroke-width="0.6"/><text x="1417" y="806" font-family="Liberation Serif" font-size="13.5" fill="#111">9300</text><text x="1457" y="776" font-family="Liberation Serif" font-size="13.5" fill="#111">3500</text><text x="1497" y="756" font-family="Liberation Serif" font-size="13.5" fill="#111">4000</text><text x="1547" y="740" font-family="Liberation Serif" font-size="13.5" fill="#111">3000</text><text x="1590" y="737" font-family="Liberation Serif" font-size="13.5" fill="#111">2700</text><text x="1440" y="791" font-family="Liberation Serif" font-size="12" fill="#111">D65</text><text x="1502" y="796" font-family="Liberation Serif" font-size="12" fill="#111">E</text><text x="1579" y="763" font-family="Liberation Serif" font-size="12" fill="#111">A</text><text x="1470" y="815" font-family="Liberation Serif" font-size="12" fill="#111">C</text><rect x="1486.5" y="783.5" width="13" height="13" fill="none" stroke="#c88a30" stroke-width="1.5"/><rect x="1488.5" y="785.5" width="9" height="9" fill="none" stroke="#4a6a3a" stroke-width="0.8"/><rect x="1511.5" y="778.5" width="13" height="13" fill="none" stroke="#c88a30" stroke-width="1.5"/><rect x="1513.5" y="780.5" width="9" height="9" fill="none" stroke="#4a6a3a" stroke-width="0.8"/><rect x="1498.5" y="764.5" width="13" height="13" fill="none" stroke="#c88a30" stroke-width="1.5"/><rect x="1500.5" y="766.5" width="9" height="9" fill="none" stroke="#4a6a3a" stroke-width="0.8"/><rect x="1513.5" y="755.5" width="13" height="13" fill="none" stroke="#c88a30" stroke-width="1.5"/><rect x="1515.5" y="757.5" width="9" height="9" fill="none" stroke="#4a6a3a" stroke-width="0.8"/><rect x="1526.5" y="755.5" width="13" height="13" fill="none" stroke="#c88a30" stroke-width="1.5"/><rect x="1528.5" y="757.5" width="9" height="9" fill="none" stroke="#4a6a3a" stroke-width="0.8"/><rect x="1533.5" y="760.5" width="13" height="13" fill="none" stroke="#c88a30" stroke-width="1.5"/><rect x="1535.5" y="762.5" width="9" height="9" fill="none" stroke="#4a6a3a" stroke-width="0.8"/><rect x="1541.5" y="770.5" width="13" height="13" fill="none" stroke="#c88a30" stroke-width="1.5"/><rect x="1543.5" y="772.5" width="9" height="9" fill="none" stroke="#4a6a3a" stroke-width="0.8"/><rect x="1551.5" y="759.5" width="13" height="13" fill="none" stroke="#c88a30" stroke-width="1.5"/><rect x="1553.5" y="761.5" width="9" height="9" fill="none" stroke="#4a6a3a" stroke-width="0.8"/><rect x="1555.5" y="753.5" width="13" height="13" fill="none" stroke="#c88a30" stroke-width="1.5"/><rect x="1557.5" y="755.5" width="9" height="9" fill="none" stroke="#4a6a3a" stroke-width="0.8"/><rect x="1573.5" y="770.5" width="13" height="13" fill="none" stroke="#c88a30" stroke-width="1.5"/><rect x="1575.5" y="772.5" width="9" height="9" fill="none" stroke="#4a6a3a" stroke-width="0.8"/><rect x="1583.5" y="757.5" width="13" height="13" fill="none" stroke="#c88a30" stroke-width="1.5"/><rect x="1585.5" y="759.5" width="9" height="9" fill="none" stroke="#4a6a3a" stroke-width="0.8"/><rect x="1597.5" y="757.5" width="13" height="13" fill="none" stroke="#c88a30" stroke-width="1.5"/><rect x="1599.5" y="759.5" width="9" height="9" fill="none" stroke="#4a6a3a" stroke-width="0.8"/><rect x="1589.5" y="737.5" width="13" height="13" fill="none" stroke="#c88a30" stroke-width="1.5"/><rect x="1591.5" y="739.5" width="9" height="9" fill="none" stroke="#4a6a3a" stroke-width="0.8"/><rect x="1601.5" y="743.5" width="13" height="13" fill="none" stroke="#c88a30" stroke-width="1.5"/><rect x="1603.5" y="745.5" width="9" height="9" fill="none" stroke="#4a6a3a" stroke-width="0.8"/><rect x="1525.5" y="773.5" width="13" height="13" fill="none" stroke="#c88a30" stroke-width="1.5"/><rect x="1527.5" y="775.5" width="9" height="9" fill="none" stroke="#4a6a3a" stroke-width="0.8"/><rect x="1545.5" y="779.5" width="13" height="13" fill="none" stroke="#c88a30" stroke-width="1.5"/><rect x="1547.5" y="781.5" width="9" height="9" fill="none" stroke="#4a6a3a" stroke-width="0.8"/><rect x="1421.5" y="581.5" width="13" height="13" fill="#30b030" stroke="#c00020" stroke-width="1.3"/><path d="M1421.5 594.5 V581.5 H1434.5" fill="none" stroke="#1a1a80" stroke-width="1.3"/><rect x="1433.5" y="632.5" width="13" height="13" fill="#60ff20" stroke="#c00020" stroke-width="1.3"/><path d="M1433.5 645.5 V632.5 H1446.5" fill="none" stroke="#1a1a80" stroke-width="1.3"/><rect x="1440.5" y="681.5" width="13" height="13" fill="#60ff20" stroke="#c00020" stroke-width="1.3"/><path d="M1440.5 694.5 V681.5 H1453.5" fill="none" stroke="#1a1a80" stroke-width="1.3"/><rect x="1453.5" y="733.5" width="13" height="13" fill="#60ff20" stroke="#c00020" stroke-width="1.3"/><path d="M1453.5 746.5 V733.5 H1466.5" fill="none" stroke="#1a1a80" stroke-width="1.3"/><rect x="1564.5" y="667.5" width="13" height="13" fill="#f0e020" stroke="#c00020" stroke-width="1.3"/><path d="M1564.5 680.5 V667.5 H1577.5" fill="none" stroke="#1a1a80" stroke-width="1.3"/><rect x="1542.5" y="699.5" width="13" height="13" fill="#f0e020" stroke="#c00020" stroke-width="1.3"/><path d="M1542.5 712.5 V699.5 H1555.5" fill="none" stroke="#1a1a80" stroke-width="1.3"/><rect x="1514.5" y="728.5" width="13" height="13" fill="#f0e020" stroke="#c00020" stroke-width="1.3"/><path d="M1514.5 741.5 V728.5 H1527.5" fill="none" stroke="#1a1a80" stroke-width="1.3"/><rect x="1486.5" y="754.5" width="13" height="13" fill="#f0e020" stroke="#c00020" stroke-width="1.3"/><path d="M1486.5 767.5 V754.5 H1499.5" fill="none" stroke="#1a1a80" stroke-width="1.3"/><rect x="1369.1" y="783.5" width="13" height="13" fill="#70f0f0" stroke="#c00020" stroke-width="1.3"/><path d="M1369.1 796.5 V783.5 H1382.1" fill="none" stroke="#1a1a80" stroke-width="1.3"/><rect x="1390.8" y="784.5" width="13" height="13" fill="#70f0f0" stroke="#c00020" stroke-width="1.3"/><path d="M1390.8 797.5 V784.5 H1403.8" fill="none" stroke="#1a1a80" stroke-width="1.3"/><rect x="1417.9" y="782.5" width="13" height="13" fill="#70f0f0" stroke="#c00020" stroke-width="1.3"/><path d="M1417.9 795.5 V782.5 H1430.9" fill="none" stroke="#1a1a80" stroke-width="1.3"/><rect x="1437.3" y="783.5" width="13" height="13" fill="#70f0f0" stroke="#c00020" stroke-width="1.3"/><path d="M1437.3 796.5 V783.5 H1450.3" fill="none" stroke="#1a1a80" stroke-width="1.3"/><rect x="1427.9" y="821.9" width="13" height="13" fill="#3030e0" stroke="#c00020" stroke-width="1.3"/><path d="M1427.9 834.9 V821.9 H1440.9" fill="none" stroke="#1a1a80" stroke-width="1.3"/><rect x="1396.2" y="862.5" width="13" height="13" fill="#3030e0" stroke="#c00020" stroke-width="1.3"/><path d="M1396.2 875.5 V862.5 H1409.2" fill="none" stroke="#1a1a80" stroke-width="1.3"/><rect x="1360.5" y="899.5" width="13" height="13" fill="#3030e0" stroke="#c00020" stroke-width="1.3"/><path d="M1360.5 912.5 V899.5 H1373.5" fill="none" stroke="#1a1a80" stroke-width="1.3"/><rect x="1328.5" y="936.8" width="13" height="13" fill="#6020c0" stroke="#c00020" stroke-width="1.3"/><path d="M1328.5 949.8 V936.8 H1341.5" fill="none" stroke="#1a1a80" stroke-width="1.3"/><rect x="1463.5" y="812.5" width="13" height="13" fill="#e020e0" stroke="#c00020" stroke-width="1.3"/><path d="M1463.5 825.5 V812.5 H1476.5" fill="none" stroke="#1a1a80" stroke-width="1.3"/><rect x="1473.9" y="833.1" width="13" height="13" fill="#e020e0" stroke="#c00020" stroke-width="1.3"/><path d="M1473.9 846.1 V833.1 H1486.9" fill="none" stroke="#1a1a80" stroke-width="1.3"/><rect x="1478.5" y="859.1" width="13" height="13" fill="#e020e0" stroke="#c00020" stroke-width="1.3"/><path d="M1478.5 872.1 V859.1 H1491.5" fill="none" stroke="#1a1a80" stroke-width="1.3"/><rect x="1478.5" y="884.5" width="13" height="13" fill="#e020e0" stroke="#c00020" stroke-width="1.3"/><path d="M1478.5 897.5 V884.5 H1491.5" fill="none" stroke="#1a1a80" stroke-width="1.3"/><rect x="1536.1" y="786.5" width="13" height="13" fill="#e01010" stroke="#c00020" stroke-width="1.3"/><path d="M1536.1 799.5 V786.5 H1549.1" fill="none" stroke="#1a1a80" stroke-width="1.3"/><rect x="1615.5" y="788.5" width="13" height="13" fill="#e01010" stroke="#c00020" stroke-width="1.3"/><path d="M1615.5 801.5 V788.5 H1628.5" fill="none" stroke="#1a1a80" stroke-width="1.3"/><rect x="1688.5" y="789.9" width="13" height="13" fill="#e01010" stroke="#c00020" stroke-width="1.3"/><path d="M1688.5 802.9 V789.9 H1701.5" fill="none" stroke="#1a1a80" stroke-width="1.3"/><rect x="1762.9" y="790.7" width="13" height="13" fill="#e01010" stroke="#c00020" stroke-width="1.3"/><path d="M1762.9 803.7 V790.7 H1775.9" fill="none" stroke="#1a1a80" stroke-width="1.3"/><circle cx="1421.0" cy="581.6" r="6.5" fill="#10c010" stroke="#222" stroke-width="1.2"/><circle cx="1437.7" cy="643.8" r="6" fill="#10c010" stroke="#222" stroke-width="1.2"/><circle cx="1445.6" cy="696.0" r="6" fill="#10c010" stroke="#222" stroke-width="1.2"/><circle cx="1462.0" cy="743.4" r="6" fill="#10c010" stroke="#222" stroke-width="1.2"/><circle cx="1571.5" cy="673.5" r="6" fill="#f0f0a0" stroke="#222" stroke-width="1.2"/><circle cx="1551.0" cy="707.0" r="6" fill="#f0f0a0" stroke="#222" stroke-width="1.2"/><circle cx="1522.0" cy="735.8" r="6" fill="#f0f0a0" stroke="#222" stroke-width="1.2"/><circle cx="1493.5" cy="761.6" r="6" fill="#f0f0a0" stroke="#222" stroke-width="1.2"/><circle cx="1371.0" cy="791.8" r="6" fill="#a8e8e0" stroke="#222" stroke-width="1.2"/><circle cx="1396.7" cy="793.3" r="6" fill="#a8e8e0" stroke="#222" stroke-width="1.2"/><circle cx="1424.4" cy="789.0" r="6" fill="#a8e8e0" stroke="#222" stroke-width="1.2"/><circle cx="1445.5" cy="789.6" r="6" fill="#a8e8e0" stroke="#222" stroke-width="1.2"/><circle cx="1380.4" cy="831.0" r="5.5" fill="#dcdcf4" stroke="#222" stroke-width="1.2"/><circle cx="1434.4" cy="828.4" r="6" fill="#2848e8" stroke="#222" stroke-width="1.2"/><circle cx="1403.0" cy="868.5" r="6" fill="#2848e8" stroke="#222" stroke-width="1.2"/><circle cx="1369.0" cy="903.3" r="6" fill="#2848e8" stroke="#222" stroke-width="1.2"/><circle cx="1334.4" cy="945.0" r="6" fill="#e8e8f8" stroke="#222" stroke-width="1.2"/><circle cx="1470.0" cy="818.9" r="6" fill="#e020e0" stroke="#222" stroke-width="1.2"/><circle cx="1481.8" cy="838.2" r="6" fill="#e020e0" stroke="#222" stroke-width="1.2"/><circle cx="1488.9" cy="860.0" r="6" fill="#e020e0" stroke="#222" stroke-width="1.2"/><circle cx="1485.0" cy="891.0" r="6" fill="#e020e0" stroke="#222" stroke-width="1.2"/><circle cx="1619.0" cy="794.0" r="6" fill="#e02010" stroke="#222" stroke-width="1.2"/><circle cx="1684.3" cy="793.2" r="6" fill="#e02010" stroke="#222" stroke-width="1.2"/><circle cx="1769.4" cy="799.2" r="6" fill="#e02010" stroke="#222" stroke-width="1.2"/><circle cx="1483.2" cy="789.8" r="5" fill="#f4f4f4" stroke="#333" stroke-width="1"/><circle cx="1473.3" cy="771.0" r="5" fill="#f4f4f4" stroke="#333" stroke-width="1"/><circle cx="1497.3" cy="777.3" r="5" fill="#f4f4f4" stroke="#333" stroke-width="1"/><circle cx="1505.6" cy="774.7" r="5" fill="#f4f4f4" stroke="#333" stroke-width="1"/><circle cx="1512.9" cy="769.5" r="5" fill="#f4f4f4" stroke="#333" stroke-width="1"/><circle cx="1520.2" cy="763.8" r="5" fill="#f4f4f4" stroke="#333" stroke-width="1"/><circle cx="1527.0" cy="766.4" r="5" fill="#f4f4f4" stroke="#333" stroke-width="1"/><circle cx="1533.2" cy="763.8" r="5" fill="#f4f4f4" stroke="#333" stroke-width="1"/><circle cx="1525.4" cy="770.0" r="5" fill="#f4f4f4" stroke="#333" stroke-width="1"/><circle cx="1538.4" cy="769.0" r="5" fill="#f4f4f4" stroke="#333" stroke-width="1"/><circle cx="1548.3" cy="778.3" r="5" fill="#f4f4f4" stroke="#333" stroke-width="1"/><circle cx="1537.9" cy="782.5" r="5" fill="#f4f4f4" stroke="#333" stroke-width="1"/><circle cx="1540.5" cy="788.2" r="5" fill="#f4f4f4" stroke="#333" stroke-width="1"/><circle cx="1555.6" cy="768.4" r="5" fill="#f4f4f4" stroke="#333" stroke-width="1"/><circle cx="1561.4" cy="761.1" r="5" fill="#f4f4f4" stroke="#333" stroke-width="1"/><circle cx="1578.0" cy="778.9" r="5" fill="#f4f4f4" stroke="#333" stroke-width="1"/><circle cx="1593.6" cy="745.5" r="5" fill="#f4f4f4" stroke="#333" stroke-width="1"/><circle cx="1605.6" cy="751.2" r="5" fill="#f4f4f4" stroke="#333" stroke-width="1"/><circle cx="1517.6" cy="786.7" r="5" fill="#f4f4f4" stroke="#333" stroke-width="1"/><circle cx="1492.6" cy="791.4" r="5" fill="#f4f4f4" stroke="#333" stroke-width="1"/><circle cx="1572.8" cy="761.7" r="5" fill="#c0c8f0" stroke="#222" stroke-width="1.3"/><circle cx="1596.2" cy="765.3" r="5" fill="#c0c8f0" stroke="#222" stroke-width="1.3"/><circle cx="1588.0" cy="767.4" r="5" fill="#c0c8f0" stroke="#222" stroke-width="1.3"/><circle cx="1557.7" cy="782.5" r="5" fill="#c0c8f0" stroke="#222" stroke-width="1.3"/><circle cx="1539.0" cy="774.2" r="5" fill="#e8e000" stroke="#333" stroke-width="1"/><circle cx="1467" cy="793.5" r="7.5" fill="#c8c8f0" stroke="#000" stroke-width="3"/><text x="1725" y="944" font-family="Liberation Sans" font-weight="bold" font-size="16" fill="#4a4a4a">hcfr.sourceforge.net</text></g></svg></body></html>
